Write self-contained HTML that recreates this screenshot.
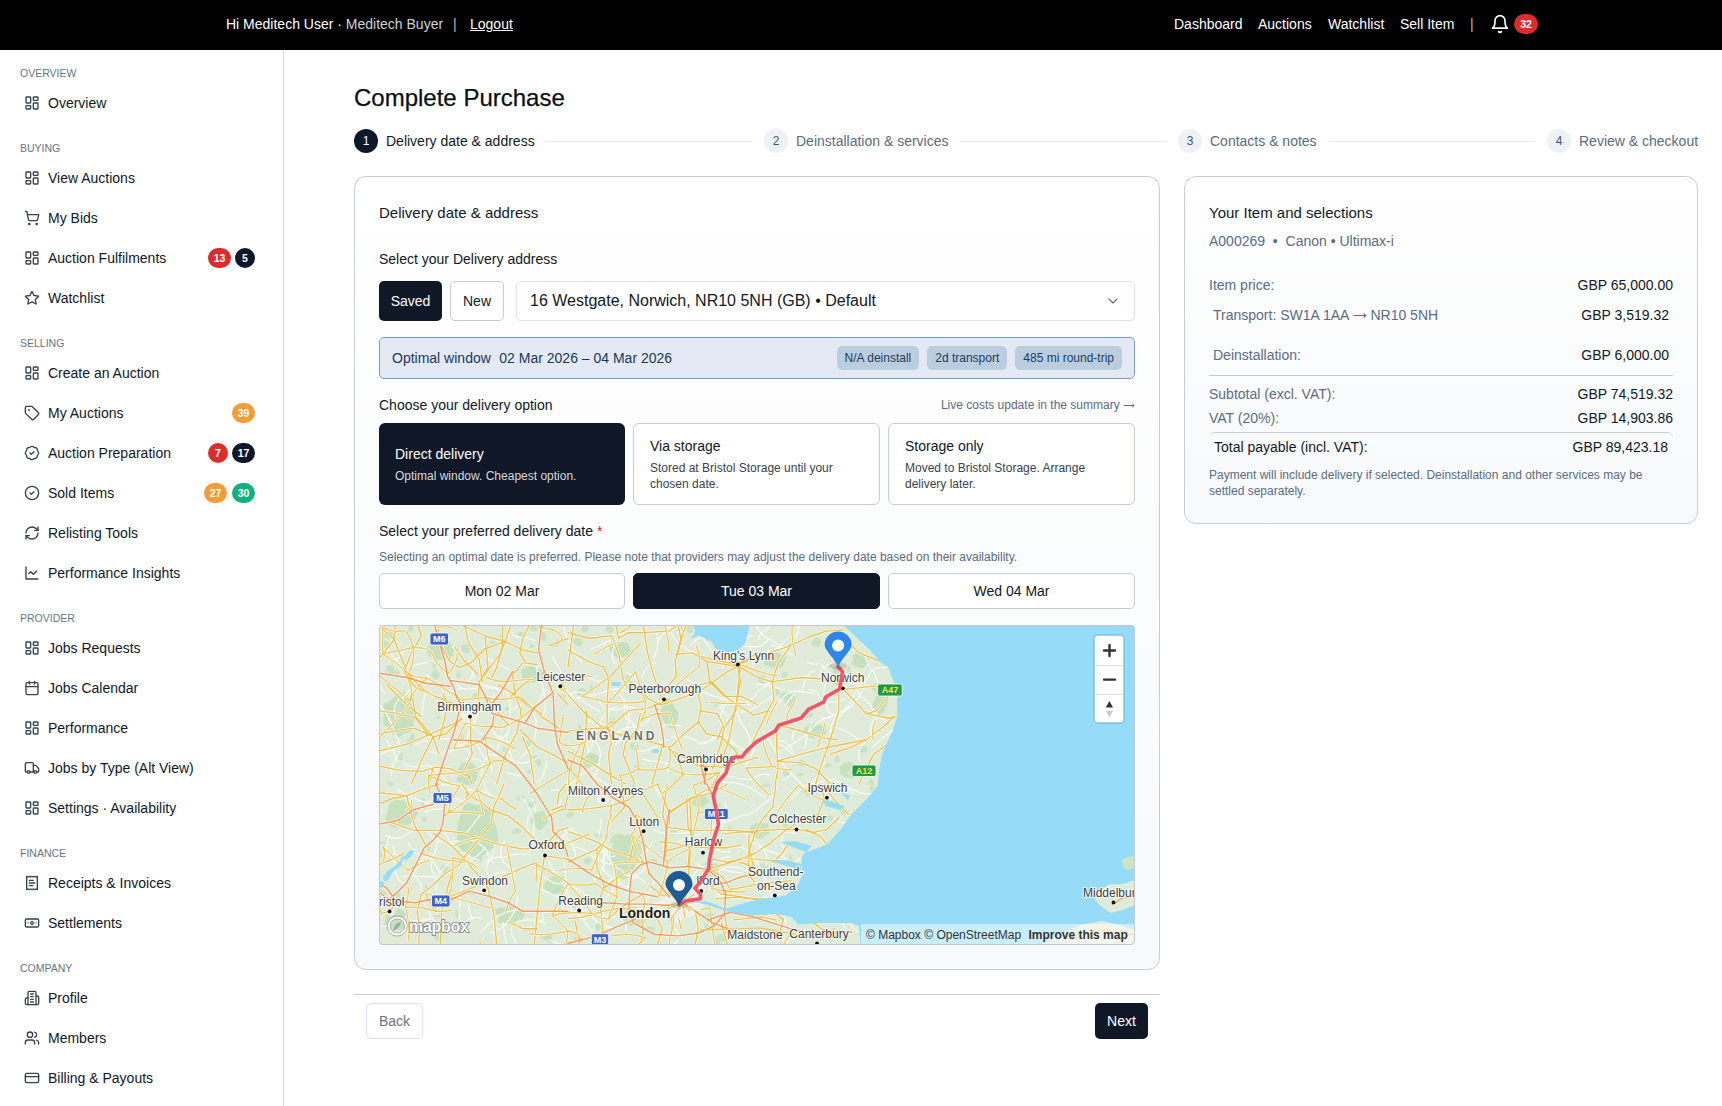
<!DOCTYPE html>
<html><head><meta charset="utf-8">
<style>
*{box-sizing:border-box;margin:0;padding:0}
html,body{width:1722px;height:1106px;overflow:hidden;background:#fff;font-family:"Liberation Sans",sans-serif;color:#0f172a}
.abs{position:absolute}
.top{position:absolute;left:0;top:0;width:1722px;height:50px;background:#000;color:#fff;font-size:14px}
.top .t{position:absolute;top:0;line-height:48px;white-space:nowrap}
.side{position:absolute;left:0;top:50px;width:284px;height:1056px;border-right:1px solid #d4d8de;padding-top:13px}
.sh{height:20px;line-height:20px;padding-left:20px;font-size:10.5px;color:#64748b;text-transform:uppercase;letter-spacing:0}
.si{height:40px;display:flex;align-items:center;padding-left:24px;font-size:14px;color:#0f172a;position:relative}
.si svg{width:16px;height:16px;margin-right:8px;stroke:#374151;fill:none;stroke-width:2;stroke-linecap:round;stroke-linejoin:round;flex:none}
.gap{height:15px}
.bd{position:absolute;top:10px;height:20px;min-width:20px;border-radius:10px;font-size:10.5px;font-weight:700;color:#fff;line-height:20px;text-align:center;padding:0 5px}
.red{background:#dc2c2c}.dk{background:#0f172a}.or{background:#f29d38}.gr{background:#12b07e}
</style></head><body>
<div class="top">
  <div class="t" style="left:226px">Hi Meditech User · <span style="color:#cfd3d8">Meditech Buyer</span></div>
  <div class="t" style="left:453px;color:#bbb">|</div>
  <div class="t" style="left:470px;text-decoration:underline">Logout</div>
  <div class="t" style="left:1174px">Dashboard</div>
  <div class="t" style="left:1258px">Auctions</div>
  <div class="t" style="left:1328px">Watchlist</div>
  <div class="t" style="left:1400px">Sell Item</div>
  <div class="t" style="left:1470px;color:#bbb">|</div>
  <svg class="abs" style="left:1490px;top:14px" width="20" height="20" viewBox="0 0 24 24" fill="none" stroke="#fff" stroke-width="2" stroke-linecap="round" stroke-linejoin="round"><path d="M6 8a6 6 0 0 1 12 0c0 7 3 9 3 9H3s3-2 3-9"/><path d="M10.3 21a1.94 1.94 0 0 0 3.4 0"/></svg>
  <div class="bd red" style="left:1514px;top:14px;width:24px">32</div>
</div>

<div class="side">
  <div class="sh">Overview</div>
  <div class="si"><svg viewBox="0 0 24 24"><rect width="7" height="9" x="3" y="3" rx="1"/><rect width="7" height="5" x="14" y="3" rx="1"/><rect width="7" height="9" x="14" y="12" rx="1"/><rect width="7" height="5" x="3" y="16" rx="1"/></svg>Overview</div>
  <div class="gap"></div>
  <div class="sh">Buying</div>
  <div class="si"><svg viewBox="0 0 24 24"><rect width="7" height="9" x="3" y="3" rx="1"/><rect width="7" height="5" x="14" y="3" rx="1"/><rect width="7" height="9" x="14" y="12" rx="1"/><rect width="7" height="5" x="3" y="16" rx="1"/></svg>View Auctions</div>
  <div class="si"><svg viewBox="0 0 24 24"><circle cx="8" cy="21" r="1"/><circle cx="19" cy="21" r="1"/><path d="M2.05 2.05h2l2.66 12.42a2 2 0 0 0 2 1.58h9.78a2 2 0 0 0 1.95-1.57l1.650-7.43H5.12"/></svg>My Bids</div>
  <div class="si"><svg viewBox="0 0 24 24"><rect width="7" height="9" x="3" y="3" rx="1"/><rect width="7" height="5" x="14" y="3" rx="1"/><rect width="7" height="9" x="14" y="12" rx="1"/><rect width="7" height="5" x="3" y="16" rx="1"/></svg>Auction Fulfilments<div class="bd red" style="left:208px;width:23px">13</div><div class="bd dk" style="left:235px">5</div></div>
  <div class="si"><svg viewBox="0 0 24 24"><polygon points="12 2 15.09 8.26 22 9.27 17 14.14 18.18 21.02 12 17.77 5.82 21.02 7 14.14 2 9.27 8.91 8.26 12 2"/></svg>Watchlist</div>
  <div class="gap"></div>
  <div class="sh">Selling</div>
  <div class="si"><svg viewBox="0 0 24 24"><rect width="7" height="9" x="3" y="3" rx="1"/><rect width="7" height="5" x="14" y="3" rx="1"/><rect width="7" height="9" x="14" y="12" rx="1"/><rect width="7" height="5" x="3" y="16" rx="1"/></svg>Create an Auction</div>
  <div class="si"><svg viewBox="0 0 24 24"><path d="M12.586 2.586A2 2 0 0 0 11.172 2H4a2 2 0 0 0-2 2v7.172a2 2 0 0 0 .586 1.414l8.704 8.704a2.426 2.426 0 0 0 3.42 0l6.58-6.58a2.426 2.426 0 0 0 0-3.42z"/><circle cx="7.5" cy="7.5" r=".5" fill="#374151"/></svg>My Auctions<div class="bd or" style="left:232px;width:23px">39</div></div>
  <div class="si"><svg viewBox="0 0 24 24"><path d="M3.85 8.62a4 4 0 0 1 4.78-4.77 4 4 0 0 1 6.74 0 4 4 0 0 1 4.78 4.78 4 4 0 0 1 0 6.74 4 4 0 0 1-4.77 4.78 4 4 0 0 1-6.75 0 4 4 0 0 1-4.78-4.77 4 4 0 0 1 0-6.76Z"/><path d="m9 12 2 2 4-4"/></svg>Auction Preparation<div class="bd red" style="left:208px">7</div><div class="bd dk" style="left:232px;width:23px">17</div></div>
  <div class="si"><svg viewBox="0 0 24 24"><circle cx="12" cy="12" r="10"/><path d="m9 12 2 2 4-4"/></svg>Sold Items<div class="bd or" style="left:204px;width:23px">27</div><div class="bd gr" style="left:232px;width:23px">30</div></div>
  <div class="si"><svg viewBox="0 0 24 24"><path d="M3 12a9 9 0 0 1 9-9 9.75 9.75 0 0 1 6.74 2.74L21 8"/><path d="M21 3v5h-5"/><path d="M21 12a9 9 0 0 1-9 9 9.75 9.75 0 0 1-6.74-2.74L3 16"/><path d="M8 16H3v5"/></svg>Relisting Tools</div>
  <div class="si"><svg viewBox="0 0 24 24"><path d="M3 3v18h18"/><path d="m19 9-5 5-4-4-3 3"/></svg>Performance Insights</div>
  <div class="gap"></div>
  <div class="sh">Provider</div>
  <div class="si"><svg viewBox="0 0 24 24"><rect width="7" height="9" x="3" y="3" rx="1"/><rect width="7" height="5" x="14" y="3" rx="1"/><rect width="7" height="9" x="14" y="12" rx="1"/><rect width="7" height="5" x="3" y="16" rx="1"/></svg>Jobs Requests</div>
  <div class="si"><svg viewBox="0 0 24 24"><rect width="18" height="18" x="3" y="4" rx="2"/><path d="M16 2v4M8 2v4M3 10h18"/></svg>Jobs Calendar</div>
  <div class="si"><svg viewBox="0 0 24 24"><rect width="7" height="9" x="3" y="3" rx="1"/><rect width="7" height="5" x="14" y="3" rx="1"/><rect width="7" height="9" x="14" y="12" rx="1"/><rect width="7" height="5" x="3" y="16" rx="1"/></svg>Performance</div>
  <div class="si"><svg viewBox="0 0 24 24"><path d="M14 18V6a2 2 0 0 0-2-2H4a2 2 0 0 0-2 2v11a1 1 0 0 0 1 1h2"/><path d="M15 18H9"/><path d="M19 18h2a1 1 0 0 0 1-1v-3.65a1 1 0 0 0-.22-.624l-3.48-4.35A1 1 0 0 0 17.52 8H14"/><circle cx="17" cy="18" r="2"/><circle cx="7" cy="18" r="2"/></svg>Jobs by Type (Alt View)</div>
  <div class="si"><svg viewBox="0 0 24 24"><rect width="7" height="9" x="3" y="3" rx="1"/><rect width="7" height="5" x="14" y="3" rx="1"/><rect width="7" height="9" x="14" y="12" rx="1"/><rect width="7" height="5" x="3" y="16" rx="1"/></svg>Settings · Availability</div>
  <div class="gap"></div>
  <div class="sh">Finance</div>
  <div class="si"><svg viewBox="0 0 24 24"><path d="M4 2v20l2-1 2 1 2-1 2 1 2-1 2 1 2-1 2 1V2l-2 1-2-1-2 1-2-1-2 1-2-1-2 1Z"/><path d="M14 8H8M16 12H8M13 16H8"/></svg>Receipts &amp; Invoices</div>
  <div class="si"><svg viewBox="0 0 24 24"><rect width="20" height="12" x="2" y="6" rx="2"/><circle cx="12" cy="12" r="2"/><path d="M6 12h.01M18 12h.01"/></svg>Settlements</div>
  <div class="gap"></div>
  <div class="sh">Company</div>
  <div class="si"><svg viewBox="0 0 24 24"><path d="M6 22V4a2 2 0 0 1 2-2h8a2 2 0 0 1 2 2v18Z"/><path d="M6 12H4a2 2 0 0 0-2 2v6a2 2 0 0 0 2 2h2"/><path d="M18 9h2a2 2 0 0 1 2 2v9a2 2 0 0 1-2 2h-2"/><path d="M10 6h4M10 10h4M10 14h4M10 18h4"/></svg>Profile</div>
  <div class="si"><svg viewBox="0 0 24 24"><path d="M16 21v-2a4 4 0 0 0-4-4H6a4 4 0 0 0-4 4v2"/><circle cx="9" cy="7" r="4"/><path d="M22 21v-2a4 4 0 0 0-3-3.87"/><path d="M16 3.13a4 4 0 0 1 0 7.75"/></svg>Members</div>
  <div class="si"><svg viewBox="0 0 24 24"><rect width="20" height="14" x="2" y="5" rx="2"/><path d="M2 10h20"/></svg>Billing &amp; Payouts</div>
</div>

<!-- MAIN -->

<style>
.tx{position:absolute;white-space:nowrap;line-height:20px}
.card{position:absolute;border:1px solid #c9ccd3;border-radius:12px;background:linear-gradient(#ffffff,#f8f9fb)}
.step{position:absolute;top:129px;height:24px;display:flex;align-items:center;font-size:14px;color:#5b6b80;white-space:nowrap}
.step .c{width:24px;height:24px;border-radius:12px;background:#eef2f7;color:#475569;font-size:12px;line-height:24px;text-align:center;margin-right:8px}
.sline{position:absolute;top:141px;height:1px;background:#e8edf3}
.btn{position:absolute;border-radius:5px;font-size:14px;text-align:center;white-space:nowrap}
.opt{position:absolute;top:423px;width:247px;height:82px;border-radius:6px;border:1px solid #c9ccd3;background:#fff;padding:0 16px;display:flex;flex-direction:column;justify-content:center}
.opt .h{font-size:14px;line-height:20px;color:#111827}
.opt .d{font-size:12px;line-height:16px;color:#374151;margin-top:3.5px}
.pill{display:inline-block;height:24px;line-height:24px;padding:0 8px;border-radius:5px;background:#bccde0;color:#1e3a5f;font-size:12px;margin-left:8px}
.dbtn{position:absolute;top:573px;width:247px;height:36px;border-radius:5px;border:1px solid #c9ccd3;background:#fff;font-size:14px;line-height:34px;text-align:center;color:#111827}
.srow{position:absolute;left:1209px;width:464px;height:20px;line-height:20px;font-size:14px;color:#5b6b85;white-space:nowrap}
.srow b{font-weight:400;color:#111827;position:absolute;right:0;top:0}
</style>
<div class="tx" style="left:354px;top:84px;font-size:24px;line-height:28px;color:#0b0f19;-webkit-text-stroke:0.25px #0b0f19">Complete Purchase</div>

<div class="step" style="left:354px"><div class="c" style="background:#0f172a;color:#fff">1</div><span style="color:#111827">Delivery date &amp; address</span></div>
<div class="sline" style="left:546px;width:206px"></div>
<div class="step" style="left:764px"><div class="c">2</div>Deinstallation &amp; services</div>
<div class="sline" style="left:960px;width:206px"></div>
<div class="step" style="left:1178px"><div class="c">3</div>Contacts &amp; notes</div>
<div class="sline" style="left:1329px;width:206px"></div>
<div class="step" style="left:1547px"><div class="c">4</div>Review &amp; checkout</div>

<div class="card" style="left:354px;top:176px;width:806px;height:794px"></div>
<div class="tx" style="left:379px;top:202px;font-size:15px;line-height:22px;color:#111827">Delivery date &amp; address</div>
<div class="tx" style="left:379px;top:249px;font-size:14px;color:#111827">Select your Delivery address</div>
<div class="btn" style="left:379px;top:281px;width:63px;height:40px;line-height:40px;background:#101828;color:#fff">Saved</div>
<div class="btn" style="left:450px;top:281px;width:54px;height:40px;line-height:38px;border:1px solid #c9ccd3;background:#fff;color:#111827">New</div>
<div class="btn" style="left:516px;top:281px;width:619px;height:40px;line-height:38px;border:1px solid #dbe3ee;background:#fff;color:#111827;font-size:16px;text-align:left;padding-left:13px">16 Westgate, Norwich, NR10 5NH (GB) • Default
  <svg style="position:absolute;left:588px;top:11px" width="16" height="16" viewBox="0 0 24 24" fill="none" stroke="#666" stroke-width="1.6" stroke-linecap="round" stroke-linejoin="round"><path d="m6 9 6 6 6-6"/></svg></div>

<div class="abs" style="left:379px;top:337px;width:756px;height:42px;border:1px solid #7d9cc4;border-radius:5px;background:#e3eaf5"></div>
<div class="tx" style="left:392px;top:348px;font-size:14px;color:#1b365d">Optimal window<span style="margin-left:8.5px">02 Mar 2026 – 04 Mar 2026</span></div>
<div class="abs" style="left:826px;top:346px;width:296px;height:24px;text-align:right;white-space:nowrap"><span class="pill">N/A deinstall</span><span class="pill">2d transport</span><span class="pill">485 mi round-trip</span></div>

<div class="tx" style="left:379px;top:395px;font-size:14px;color:#111827">Choose your delivery option</div>
<div class="tx" style="left:900px;width:235px;text-align:right;top:395px;font-size:12px;color:#5b6b85">Live costs update in the summary <span style="display:inline-block;width:12px;height:12px;vertical-align:middle;position:relative;top:-1px"><svg width="12" height="12" viewBox="0 0 12 12" style="display:block"><path d="M0.8 6.5H11.2M9.3 4.7l1.9 1.8-1.9 1.8" stroke="currentColor" fill="none" stroke-width="1"/></svg></span></div>

<div class="opt" style="left:379px;width:246px;background:#101828;border:0"><div class="h" style="color:#fff">Direct delivery</div><div class="d" style="color:#d6d9de">Optimal window. Cheapest option.</div></div>
<div class="opt" style="left:633px"><div class="h">Via storage</div><div class="d">Stored at Bristol Storage until your chosen date.</div></div>
<div class="opt" style="left:888px"><div class="h">Storage only</div><div class="d">Moved to Bristol Storage. Arrange delivery later.</div></div>

<div class="tx" style="left:379px;top:521px;font-size:14px;color:#111827">Select your preferred delivery date <span style="color:#dc2626">*</span></div>
<div class="tx" style="left:379px;top:547px;font-size:12px;color:#5b6b85">Selecting an optimal date is preferred. Please note that providers may adjust the delivery date based on their availability.</div>
<div class="dbtn" style="left:379px;width:246px">Mon 02 Mar</div>
<div class="dbtn" style="left:633px;background:#101828;border-color:#101828;color:#fff">Tue 03 Mar</div>
<div class="dbtn" style="left:888px">Wed 04 Mar</div>

<div id="map" class="abs" style="left:379px;top:625px;width:756px;height:320px;border-radius:4px;overflow:hidden"><svg width="756" height="320" viewBox="379 625 756 320" style="display:block;font-family:'Liberation Sans',sans-serif">
<rect x="379" y="625" width="756" height="320" fill="#e0ecda"/>
<path d="M414.8,711.1 Q415.8,715.0 414.5,718.8 Q413.3,722.5 413.0,727.5 Q412.7,732.4 408.7,732.4 Q404.7,732.5 401.8,735.5 Q399.0,738.5 395.7,736.8 Q392.5,735.1 390.5,731.7 Q388.6,728.3 385.4,726.1 Q382.2,723.9 383.3,719.4 Q384.4,715.0 383.6,710.7 Q382.7,706.4 385.6,704.0 Q388.5,701.6 390.9,699.5 Q393.3,697.4 396.1,695.0 Q399.0,692.6 403.0,691.7 Q406.9,690.7 408.3,696.0 Q409.8,701.3 411.8,704.2 Q413.8,707.2 414.8,711.1Z" fill="#c8e2c0" opacity="1.0"/>
<path d="M495.7,824.9 Q497.6,830.0 498.1,836.4 Q498.6,842.8 494.6,846.6 Q490.7,850.5 486.8,852.6 Q482.8,854.8 478.9,859.2 Q475.0,863.7 471.7,857.3 Q468.4,850.9 462.9,851.9 Q457.5,852.9 457.2,846.3 Q457.0,839.8 456.9,834.9 Q456.8,830.0 457.6,825.5 Q458.4,821.0 459.7,816.4 Q461.1,811.8 463.4,806.2 Q465.7,800.6 470.3,803.2 Q475.0,805.7 479.2,804.5 Q483.5,803.2 487.3,806.1 Q491.1,809.0 492.4,814.4 Q493.7,819.8 495.7,824.9Z" fill="#c8e2c0" opacity="1.0"/>
<path d="M641.3,850.9 Q640.8,856.0 638.6,859.6 Q636.4,863.2 635.0,866.2 Q633.5,869.3 631.5,872.0 Q629.5,874.7 626.8,877.8 Q624.0,880.9 620.9,878.8 Q617.9,876.7 615.6,873.9 Q613.3,871.0 610.7,868.1 Q608.2,865.2 608.0,860.6 Q607.8,856.0 608.9,852.0 Q610.1,847.9 610.5,842.8 Q610.9,837.6 614.0,835.2 Q617.2,832.9 620.6,834.1 Q624.0,835.4 627.3,834.7 Q630.5,834.0 633.2,836.7 Q635.8,839.5 638.7,842.6 Q641.7,845.8 641.3,850.9Z" fill="#c8e2c0" opacity="1.0"/>
<path d="M543.9,673.4 Q544.7,675.0 543.2,676.4 Q541.7,677.9 541.8,679.9 Q541.8,682.0 538.8,681.7 Q535.7,681.4 533.9,682.2 Q532.0,683.0 529.5,683.2 Q527.1,683.5 526.1,681.7 Q525.0,680.0 523.2,679.1 Q521.4,678.1 522.0,676.6 Q522.7,675.0 521.6,673.3 Q520.6,671.6 521.7,670.1 Q522.9,668.5 525.2,667.8 Q527.4,667.1 529.7,666.3 Q532.0,665.4 534.0,666.7 Q536.1,668.0 538.5,668.3 Q540.8,668.7 542.0,670.2 Q543.1,671.7 543.9,673.4Z" fill="#c8e2c0" opacity="1.0"/>
<path d="M678.0,712.7 Q678.5,715.0 678.0,717.3 Q677.5,719.6 677.1,722.3 Q676.7,725.0 675.2,726.8 Q673.8,728.6 671.9,727.9 Q670.0,727.2 668.3,727.2 Q666.6,727.2 665.9,724.7 Q665.3,722.1 663.5,721.1 Q661.7,720.1 661.5,717.6 Q661.2,715.0 661.0,712.1 Q660.8,709.3 662.1,707.2 Q663.4,705.1 665.3,704.8 Q667.1,704.6 668.6,703.9 Q670.0,703.2 671.7,703.0 Q673.4,702.7 674.0,705.4 Q674.7,708.0 676.1,709.2 Q677.5,710.3 678.0,712.7Z" fill="#c8e2c0" opacity="1.0"/>
<path d="M478.1,772.9 Q477.9,775.0 477.4,776.9 Q476.9,778.7 475.8,780.2 Q474.6,781.6 473.8,784.3 Q472.9,786.9 470.5,785.8 Q468.0,784.7 466.0,784.6 Q464.1,784.5 462.1,783.7 Q460.2,782.8 457.9,781.5 Q455.6,780.1 457.1,777.6 Q458.5,775.0 458.0,772.8 Q457.6,770.7 458.6,768.7 Q459.7,766.7 461.3,764.6 Q462.9,762.6 465.4,762.2 Q468.0,761.9 470.6,762.3 Q473.1,762.7 474.3,765.1 Q475.4,767.6 476.8,769.2 Q478.3,770.7 478.1,772.9Z" fill="#c8e2c0" opacity="1.0"/>
<path d="M566.2,883.0 Q565.9,885.0 566.6,887.2 Q567.4,889.4 566.1,891.4 Q564.8,893.4 561.8,893.1 Q558.8,892.8 556.9,893.2 Q555.0,893.5 553.0,893.3 Q551.1,893.1 549.4,892.2 Q547.8,891.2 546.1,890.0 Q544.4,888.8 543.7,886.9 Q543.0,885.0 544.2,883.3 Q545.4,881.6 547.0,880.5 Q548.6,879.5 549.6,877.8 Q550.7,876.2 552.9,875.9 Q555.0,875.6 557.3,875.6 Q559.5,875.6 562.1,876.1 Q564.7,876.7 565.6,878.8 Q566.5,880.9 566.2,883.0Z" fill="#c8e2c0" opacity="1.0"/>
<path d="M825.4,728.8 Q826.6,730.0 826.4,731.5 Q826.2,733.0 825.0,734.3 Q823.8,735.6 821.2,735.6 Q818.6,735.6 816.8,737.1 Q815.0,738.7 812.5,738.2 Q810.1,737.7 807.8,736.9 Q805.5,736.1 804.3,734.6 Q803.0,733.2 803.5,731.6 Q804.0,730.0 804.4,728.6 Q804.8,727.3 806.5,726.5 Q808.2,725.6 809.3,724.2 Q810.3,722.7 812.7,723.4 Q815.0,724.0 816.8,724.2 Q818.6,724.4 820.4,724.9 Q822.2,725.4 823.2,726.5 Q824.1,727.6 825.4,728.8Z" fill="#c8e2c0" opacity="1.0"/>
<path d="M887.6,702.3 Q886.9,705.0 886.2,706.8 Q885.6,708.6 884.8,710.0 Q884.1,711.4 883.3,712.8 Q882.4,714.1 881.2,714.3 Q880.0,714.6 878.7,714.8 Q877.3,715.1 876.6,713.3 Q875.8,711.5 873.9,710.8 Q872.1,710.1 872.1,707.6 Q872.2,705.0 873.2,703.1 Q874.2,701.2 874.7,699.5 Q875.3,697.7 876.3,696.4 Q877.3,695.0 878.7,694.6 Q880.0,694.1 881.2,695.1 Q882.4,696.0 884.2,695.8 Q886.0,695.6 887.2,697.6 Q888.3,699.7 887.6,702.3Z" fill="#c8e2c0" opacity="1.0"/>
<path d="M525.6,912.7 Q524.6,915.0 524.1,916.9 Q523.6,918.8 521.1,919.8 Q518.7,920.8 516.7,921.7 Q514.7,922.6 512.4,923.4 Q510.0,924.2 507.4,923.7 Q504.9,923.2 501.5,923.1 Q498.0,923.0 498.1,920.6 Q498.3,918.2 498.2,916.6 Q498.2,915.0 495.9,912.7 Q493.7,910.5 496.5,909.2 Q499.4,907.9 502.3,907.6 Q505.2,907.2 507.6,906.1 Q510.0,904.9 512.3,906.3 Q514.5,907.7 517.6,907.8 Q520.6,907.9 523.6,909.2 Q526.5,910.4 525.6,912.7Z" fill="#c8e2c0" opacity="1.0"/>
<path d="M416.1,812.2 Q417.1,815.0 416.0,817.7 Q414.9,820.5 412.1,821.9 Q409.4,823.4 407.4,824.9 Q405.4,826.5 402.7,826.4 Q400.0,826.3 396.8,827.5 Q393.7,828.6 391.5,826.5 Q389.4,824.5 387.0,822.6 Q384.7,820.6 385.4,817.8 Q386.2,815.0 387.1,812.8 Q387.9,810.5 388.0,807.5 Q388.1,804.4 390.6,802.4 Q393.1,800.3 396.6,800.1 Q400.0,799.8 403.2,800.5 Q406.4,801.2 409.2,802.8 Q411.9,804.4 413.5,806.9 Q415.1,809.4 416.1,812.2Z" fill="#c8e2c0" opacity="1.0"/>
<path d="M644.8,916.3 Q645.2,918.0 645.5,919.9 Q645.8,921.8 644.2,923.2 Q642.7,924.6 640.6,924.9 Q638.5,925.3 636.8,925.6 Q635.0,925.9 633.0,926.1 Q631.0,926.3 629.3,925.3 Q627.7,924.3 625.6,923.2 Q623.5,922.1 622.3,920.0 Q621.2,918.0 622.9,916.1 Q624.6,914.3 624.9,912.0 Q625.3,909.7 627.5,908.3 Q629.7,907.0 632.3,906.6 Q635.0,906.2 637.1,907.8 Q639.2,909.4 640.7,910.6 Q642.2,911.8 643.3,913.2 Q644.4,914.7 644.8,916.3Z" fill="#c8e2c0" opacity="1.0"/>
<path d="M786.0,658.4 Q785.1,660.0 784.7,661.2 Q784.3,662.5 784.0,664.0 Q783.6,665.5 781.9,666.8 Q780.2,668.0 777.6,668.3 Q775.0,668.5 772.8,667.6 Q770.6,666.8 768.5,666.2 Q766.3,665.6 764.6,664.4 Q763.0,663.2 764.2,661.6 Q765.5,660.0 764.5,658.5 Q763.6,657.0 764.5,655.4 Q765.4,653.8 767.7,653.1 Q770.1,652.3 772.5,652.1 Q775.0,651.8 777.2,652.5 Q779.4,653.2 780.7,654.3 Q782.1,655.5 784.5,656.1 Q787.0,656.8 786.0,658.4Z" fill="#c8e2c0" opacity="1.0"/>
<path d="M717.9,868.5 Q717.7,870.0 718.1,871.6 Q718.6,873.2 717.8,874.8 Q717.0,876.3 715.0,876.4 Q713.0,876.6 711.5,876.8 Q710.0,877.1 708.1,877.6 Q706.2,878.2 704.9,877.0 Q703.6,875.8 703.5,874.1 Q703.4,872.4 703.3,871.2 Q703.1,870.0 703.3,868.8 Q703.5,867.6 703.3,865.7 Q703.2,863.8 704.8,863.0 Q706.4,862.2 708.2,863.0 Q710.0,863.7 711.8,862.9 Q713.6,862.2 715.3,862.9 Q717.0,863.7 717.6,865.3 Q718.1,867.0 717.9,868.5Z" fill="#c8e2c0" opacity="1.0"/>
<path d="M599.4,758.4 Q599.3,760.0 599.3,761.6 Q599.3,763.2 597.6,764.1 Q595.9,764.9 594.5,765.5 Q593.0,766.1 591.5,768.0 Q590.0,769.9 588.0,769.0 Q586.0,768.1 584.4,767.0 Q582.9,765.9 581.0,764.8 Q579.2,763.7 579.8,761.9 Q580.4,760.0 579.9,758.2 Q579.4,756.3 580.7,754.9 Q582.0,753.4 584.4,753.3 Q586.7,753.3 588.3,753.0 Q590.0,752.6 591.7,752.8 Q593.5,753.0 594.8,753.9 Q596.2,754.8 597.9,755.8 Q599.5,756.7 599.4,758.4Z" fill="#c8e2c0" opacity="1.0"/>
<path d="M858.4,768.6 Q858.9,770.0 858.9,771.5 Q858.8,773.0 857.4,774.0 Q855.9,774.9 855.2,776.9 Q854.4,778.9 852.2,778.3 Q850.0,777.7 848.1,777.6 Q846.3,777.5 844.5,776.8 Q842.8,776.0 841.0,774.9 Q839.3,773.7 839.9,771.8 Q840.4,770.0 839.8,768.1 Q839.2,766.3 841.1,765.2 Q843.0,764.2 844.6,763.2 Q846.2,762.3 848.1,762.0 Q850.0,761.7 851.5,762.8 Q853.0,763.9 854.9,764.1 Q856.8,764.3 857.4,765.8 Q857.9,767.3 858.4,768.6Z" fill="#c8e2c0" opacity="1.0"/>
<path d="M768.5,828.4 Q767.8,830.0 769.1,831.8 Q770.3,833.6 768.2,834.3 Q766.0,835.0 764.9,836.3 Q763.7,837.5 761.9,838.3 Q760.0,839.0 758.1,838.4 Q756.1,837.8 754.8,836.6 Q753.5,835.4 752.1,834.3 Q750.8,833.2 750.3,831.6 Q749.9,830.0 749.8,828.2 Q749.8,826.5 752.0,825.8 Q754.2,825.1 755.1,823.7 Q756.1,822.2 758.1,822.4 Q760.0,822.6 761.7,822.9 Q763.4,823.1 765.6,823.3 Q767.8,823.5 768.5,825.2 Q769.2,826.8 768.5,828.4Z" fill="#c8e2c0" opacity="1.0"/>
<path d="M452.2,648.3 Q453.5,650.0 453.5,652.1 Q453.5,654.2 452.3,656.2 Q451.0,658.2 447.9,658.6 Q444.9,658.9 442.5,659.6 Q440.0,660.4 437.5,659.8 Q434.9,659.2 432.8,658.1 Q430.6,657.0 428.7,655.6 Q426.8,654.1 426.9,652.0 Q427.1,650.0 427.3,648.1 Q427.6,646.2 429.2,644.6 Q430.8,643.1 432.4,641.1 Q434.0,639.1 437.0,639.2 Q440.0,639.3 442.9,639.3 Q445.9,639.4 448.5,640.5 Q451.1,641.7 451.0,644.1 Q451.0,646.6 452.2,648.3Z" fill="#c8e2c0" opacity="1.0"/>
<path d="M630.4,648.7 Q631.8,650.0 632.3,651.9 Q632.7,653.8 631.0,655.2 Q629.3,656.7 626.5,656.6 Q623.7,656.4 621.9,656.7 Q620.0,656.9 617.8,657.2 Q615.7,657.4 614.5,656.1 Q613.3,654.8 611.9,653.8 Q610.5,652.8 610.5,651.4 Q610.5,650.0 609.6,648.3 Q608.6,646.6 609.7,645.0 Q610.8,643.5 612.8,642.3 Q614.8,641.1 617.4,642.0 Q620.0,643.0 622.4,642.3 Q624.8,641.7 626.8,642.7 Q628.7,643.8 628.9,645.5 Q629.1,647.3 630.4,648.7Z" fill="#c8e2c0" opacity="1.0"/>
<path d="M707.8,799.0 Q709.6,800.0 709.4,801.5 Q709.1,803.0 707.1,803.6 Q705.1,804.1 704.5,805.7 Q703.8,807.3 701.9,806.8 Q700.0,806.3 698.4,806.2 Q696.9,806.1 694.9,805.9 Q693.0,805.6 692.1,804.3 Q691.3,802.9 692.1,801.4 Q692.9,800.0 692.8,798.8 Q692.6,797.5 693.4,796.4 Q694.1,795.3 695.6,794.8 Q697.1,794.3 698.5,794.3 Q700.0,794.3 701.5,794.3 Q702.9,794.4 704.6,794.6 Q706.4,794.9 706.2,796.4 Q706.1,798.0 707.8,799.0Z" fill="#c8e2c0" opacity="1.0"/>
<path d="M547.4,818.4 Q548.4,820.0 547.9,821.8 Q547.4,823.7 546.0,824.6 Q544.6,825.6 543.8,827.0 Q542.9,828.5 541.5,829.5 Q540.0,830.4 538.4,829.8 Q536.8,829.2 536.0,827.5 Q535.2,825.7 533.0,825.1 Q530.8,824.6 530.8,822.3 Q530.7,820.0 530.8,817.7 Q530.9,815.5 533.0,814.8 Q535.1,814.2 536.2,813.0 Q537.2,811.8 538.6,811.9 Q540.0,812.0 541.8,810.9 Q543.5,809.8 544.4,811.7 Q545.3,813.7 545.8,815.2 Q546.4,816.8 547.4,818.4Z" fill="#c8e2c0" opacity="1.0"/>
<path d="M406.6,917.5 Q406.2,920.0 406.9,922.6 Q407.5,925.2 405.9,927.2 Q404.3,929.3 401.6,929.4 Q399.0,929.6 397.0,929.7 Q395.0,929.8 392.4,931.2 Q389.8,932.6 388.2,930.5 Q386.6,928.4 385.0,926.6 Q383.4,924.8 384.4,922.4 Q385.5,920.0 385.9,918.2 Q386.3,916.4 386.3,913.8 Q386.2,911.2 388.5,910.4 Q390.7,909.7 392.9,910.1 Q395.0,910.5 397.6,908.9 Q400.2,907.3 401.9,909.4 Q403.6,911.4 405.3,913.2 Q407.0,915.0 406.6,917.5Z" fill="#c8e2c0" opacity="1.0"/>
<path d="M866.7,658.6 Q866.8,660.0 867.8,661.8 Q868.8,663.6 866.8,664.2 Q864.8,664.8 864.2,666.8 Q863.6,668.8 861.8,668.4 Q860.0,668.1 858.5,667.6 Q857.1,667.1 855.5,666.5 Q854.0,666.0 852.5,664.8 Q851.0,663.7 851.8,661.9 Q852.6,660.0 853.1,658.7 Q853.6,657.3 853.8,655.7 Q854.1,654.1 855.6,653.7 Q857.2,653.2 858.6,653.2 Q860.0,653.1 861.4,653.3 Q862.7,653.5 863.7,654.4 Q864.7,655.3 865.7,656.3 Q866.7,657.2 866.7,658.6Z" fill="#c8e2c0" opacity="1.0"/>
<path d="M795.6,698.9 Q796.1,700.0 795.8,701.2 Q795.6,702.3 795.4,703.7 Q795.2,705.2 793.7,705.4 Q792.3,705.6 791.2,706.1 Q790.0,706.6 788.9,705.9 Q787.8,705.3 786.7,704.8 Q785.6,704.4 785.4,703.2 Q785.1,702.0 784.6,701.0 Q784.1,700.0 784.6,699.0 Q785.2,698.0 785.0,696.4 Q784.9,694.9 786.1,694.3 Q787.4,693.8 788.7,694.0 Q790.0,694.3 791.2,694.1 Q792.5,694.0 794.0,694.2 Q795.5,694.5 795.3,696.2 Q795.1,697.9 795.6,698.9Z" fill="#c8e2c0" opacity="1.0"/>
<path d="M805.9,761.9 Q806.8,762.9 806.3,764.0 Q805.7,765.2 803.7,766.0 Q801.6,766.8 799.9,765.8 Q798.2,764.7 796.7,763.8 Q795.1,762.9 796.2,761.7 Q797.3,760.5 799.4,760.0 Q801.6,759.6 803.3,760.3 Q805.0,760.9 805.9,761.9Z" fill="#c4dfbc" opacity="0.75"/>
<path d="M559.6,641.1 Q559.9,642.3 559.6,643.5 Q559.3,644.7 558.8,645.1 Q558.3,645.4 557.5,645.8 Q556.8,646.1 556.4,644.2 Q556.1,642.3 556.5,640.7 Q556.9,639.0 557.6,638.8 Q558.3,638.7 558.9,639.3 Q559.4,639.8 559.6,641.1Z" fill="#c4dfbc" opacity="0.75"/>
<path d="M533.3,771.0 Q534.8,771.6 534.1,772.7 Q533.5,773.9 531.8,774.0 Q530.2,774.1 529.2,773.6 Q528.2,773.0 526.9,772.3 Q525.6,771.6 526.8,770.8 Q528.1,770.0 529.1,769.7 Q530.2,769.3 531.0,769.9 Q531.9,770.4 533.3,771.0Z" fill="#c4dfbc" opacity="0.75"/>
<path d="M577.4,775.4 Q577.5,776.4 577.4,777.4 Q577.4,778.4 576.6,778.7 Q575.9,778.9 575.1,778.8 Q574.3,778.6 574.3,777.5 Q574.2,776.4 574.5,775.6 Q574.8,774.8 575.3,774.1 Q575.9,773.5 576.6,774.0 Q577.3,774.4 577.4,775.4Z" fill="#c4dfbc" opacity="0.75"/>
<path d="M581.8,727.9 Q582.4,729.0 581.7,730.1 Q581.1,731.1 580.5,732.7 Q580.0,734.2 579.0,733.5 Q578.1,732.8 577.8,730.9 Q577.6,729.0 577.9,727.3 Q578.2,725.6 579.1,724.8 Q580.0,723.9 580.6,725.4 Q581.2,726.8 581.8,727.9Z" fill="#c4dfbc" opacity="0.75"/>
<path d="M799.4,887.1 Q800.4,888.6 798.9,889.8 Q797.4,891.0 795.8,891.2 Q794.2,891.4 792.7,891.1 Q791.3,890.8 790.2,889.7 Q789.2,888.6 790.3,887.6 Q791.3,886.5 792.8,885.1 Q794.2,883.7 796.2,884.6 Q798.3,885.6 799.4,887.1Z" fill="#c4dfbc" opacity="0.75"/>
<path d="M769.8,784.6 Q770.3,785.4 769.0,786.0 Q767.7,786.5 766.4,786.6 Q765.1,786.7 763.8,786.6 Q762.4,786.5 761.2,786.0 Q760.0,785.4 761.3,785.0 Q762.6,784.5 763.8,783.9 Q765.1,783.4 767.2,783.6 Q769.3,783.8 769.8,784.6Z" fill="#c4dfbc" opacity="0.75"/>
<path d="M638.0,745.4 Q638.8,747.0 638.1,748.7 Q637.4,750.4 635.6,750.3 Q633.9,750.2 632.6,749.8 Q631.4,749.4 630.7,748.2 Q630.1,747.0 630.1,745.2 Q630.1,743.4 632.0,743.3 Q633.9,743.2 635.6,743.5 Q637.3,743.8 638.0,745.4Z" fill="#c4dfbc" opacity="0.75"/>
<path d="M389.2,643.2 Q390.5,644.4 389.3,645.6 Q388.2,646.8 386.8,647.7 Q385.4,648.5 383.9,647.8 Q382.3,647.2 381.7,645.8 Q381.0,644.4 382.0,643.3 Q383.0,642.2 384.2,640.7 Q385.4,639.2 386.7,640.6 Q388.0,642.0 389.2,643.2Z" fill="#c4dfbc" opacity="0.75"/>
<path d="M887.0,922.4 Q888.4,923.7 887.3,925.2 Q886.1,926.8 884.9,927.2 Q883.7,927.5 882.7,926.9 Q881.7,926.3 880.4,925.0 Q879.1,923.7 880.4,922.4 Q881.7,921.1 882.7,919.9 Q883.7,918.8 884.7,920.0 Q885.6,921.2 887.0,922.4Z" fill="#c4dfbc" opacity="0.75"/>
<path d="M654.5,927.7 Q655.9,928.9 654.8,930.3 Q653.6,931.7 651.5,931.7 Q649.4,931.7 647.1,931.8 Q644.8,932.0 644.5,930.4 Q644.3,928.9 645.6,928.1 Q646.9,927.3 648.2,927.0 Q649.4,926.6 651.2,926.6 Q653.1,926.5 654.5,927.7Z" fill="#c4dfbc" opacity="0.75"/>
<path d="M614.8,720.1 Q615.3,721.3 614.2,722.0 Q613.0,722.6 612.3,723.5 Q611.6,724.5 610.3,724.1 Q608.9,723.7 609.1,722.5 Q609.3,721.3 609.1,720.1 Q608.8,718.9 610.2,718.6 Q611.6,718.3 613.0,718.6 Q614.3,718.9 614.8,720.1Z" fill="#c4dfbc" opacity="0.75"/>
<path d="M534.0,742.0 Q534.0,743.7 533.3,745.0 Q532.6,746.2 530.6,746.6 Q528.6,746.9 527.1,746.2 Q525.6,745.6 524.9,744.7 Q524.2,743.7 523.8,742.1 Q523.4,740.5 526.0,740.5 Q528.6,740.6 531.3,740.5 Q534.0,740.4 534.0,742.0Z" fill="#c4dfbc" opacity="0.75"/>
<path d="M510.1,708.6 Q510.7,709.8 510.2,711.1 Q509.7,712.3 508.7,712.8 Q507.7,713.3 506.7,712.6 Q505.8,712.0 505.2,710.9 Q504.6,709.8 505.1,708.4 Q505.5,707.1 506.6,706.9 Q507.7,706.8 508.6,707.1 Q509.6,707.4 510.1,708.6Z" fill="#c4dfbc" opacity="0.75"/>
<path d="M408.6,857.0 Q408.7,858.6 407.8,859.6 Q406.9,860.6 405.7,862.1 Q404.5,863.7 403.2,862.2 Q401.9,860.7 400.8,859.7 Q399.7,858.6 400.6,857.4 Q401.4,856.1 403.0,855.7 Q404.5,855.2 406.5,855.3 Q408.5,855.4 408.6,857.0Z" fill="#c4dfbc" opacity="0.75"/>
<path d="M535.7,802.2 Q536.0,802.8 536.2,803.7 Q536.3,804.7 535.2,804.8 Q534.2,804.9 533.6,804.4 Q532.9,804.0 532.2,803.4 Q531.4,802.8 531.7,801.8 Q532.1,800.8 533.2,800.8 Q534.2,800.7 534.8,801.2 Q535.4,801.7 535.7,802.2Z" fill="#c4dfbc" opacity="0.75"/>
<path d="M479.7,653.2 Q479.9,653.9 479.8,654.8 Q479.7,655.7 479.0,656.3 Q478.3,657.0 477.5,656.4 Q476.7,655.9 476.6,654.9 Q476.5,653.9 476.7,653.1 Q477.0,652.3 477.6,651.9 Q478.3,651.5 478.9,651.9 Q479.5,652.4 479.7,653.2Z" fill="#c4dfbc" opacity="0.75"/>
<path d="M558.4,644.1 Q559.4,644.8 558.7,645.6 Q558.0,646.3 555.8,646.8 Q553.5,647.2 551.8,646.6 Q550.2,645.9 549.4,645.4 Q548.6,644.8 549.3,644.2 Q550.1,643.6 551.8,643.3 Q553.5,643.0 555.5,643.2 Q557.5,643.5 558.4,644.1Z" fill="#c4dfbc" opacity="0.75"/>
<path d="M394.8,634.3 Q396.1,635.3 394.5,636.1 Q392.9,636.8 391.6,637.6 Q390.3,638.3 387.7,638.3 Q385.2,638.3 384.4,636.8 Q383.5,635.3 384.5,633.9 Q385.4,632.4 387.8,631.7 Q390.3,631.0 391.9,632.2 Q393.5,633.4 394.8,634.3Z" fill="#c4dfbc" opacity="0.75"/>
<path d="M439.2,672.8 Q440.5,674.2 439.7,676.2 Q438.8,678.2 437.0,679.2 Q435.3,680.2 433.7,678.9 Q432.1,677.7 431.3,676.0 Q430.5,674.2 431.8,673.0 Q433.0,671.8 434.1,670.0 Q435.3,668.3 436.6,669.8 Q437.9,671.3 439.2,672.8Z" fill="#c4dfbc" opacity="0.75"/>
<path d="M855.4,830.2 Q855.9,830.9 855.6,831.9 Q855.3,832.9 854.5,832.8 Q853.7,832.7 853.2,832.4 Q852.6,832.1 852.1,831.5 Q851.6,830.9 851.8,830.0 Q852.1,829.1 852.9,828.9 Q853.7,828.7 854.3,829.1 Q854.9,829.5 855.4,830.2Z" fill="#c4dfbc" opacity="0.75"/>
<path d="M692.2,626.8 Q693.1,628.3 692.7,630.6 Q692.3,632.9 690.7,633.1 Q689.1,633.3 688.1,632.3 Q687.1,631.3 686.6,629.8 Q686.2,628.3 686.0,626.0 Q685.8,623.6 687.5,623.1 Q689.1,622.5 690.2,623.9 Q691.3,625.2 692.2,626.8Z" fill="#c4dfbc" opacity="0.75"/>
<path d="M393.1,783.3 Q394.0,784.0 393.7,785.1 Q393.3,786.2 391.8,786.1 Q390.2,786.0 389.4,785.6 Q388.6,785.2 387.9,784.6 Q387.2,784.0 387.6,783.1 Q388.0,782.3 389.1,781.8 Q390.2,781.2 391.2,781.9 Q392.2,782.6 393.1,783.3Z" fill="#c4dfbc" opacity="0.75"/>
<path d="M792.2,859.0 Q792.4,860.8 792.4,863.0 Q792.4,865.2 791.3,865.1 Q790.3,865.0 789.6,864.4 Q788.9,863.7 788.2,862.3 Q787.4,860.8 788.1,859.2 Q788.8,857.6 789.5,855.9 Q790.3,854.1 791.1,855.6 Q792.0,857.2 792.2,859.0Z" fill="#c4dfbc" opacity="0.75"/>
<path d="M478.8,694.6 Q479.1,696.2 478.8,697.9 Q478.6,699.6 477.1,699.9 Q475.7,700.3 473.6,700.6 Q471.5,700.9 471.9,698.6 Q472.2,696.2 472.8,695.0 Q473.4,693.7 474.5,693.2 Q475.7,692.7 477.1,692.8 Q478.6,692.9 478.8,694.6Z" fill="#c4dfbc" opacity="0.75"/>
<path d="M895.6,921.0 Q896.4,922.2 895.7,923.4 Q894.9,924.6 894.3,926.2 Q893.7,927.7 893.0,926.6 Q892.2,925.4 891.9,923.8 Q891.6,922.2 891.9,920.6 Q892.3,919.0 893.0,918.7 Q893.7,918.3 894.3,919.0 Q894.8,919.8 895.6,921.0Z" fill="#c4dfbc" opacity="0.75"/>
<path d="M524.9,735.5 Q525.0,737.1 524.9,738.8 Q524.7,740.4 524.0,741.9 Q523.4,743.3 522.5,742.4 Q521.6,741.5 521.5,739.3 Q521.4,737.1 521.9,735.9 Q522.4,734.6 522.9,733.3 Q523.4,732.1 524.0,732.9 Q524.7,733.8 524.9,735.5Z" fill="#c4dfbc" opacity="0.75"/>
<path d="M857.7,686.1 Q858.7,686.6 858.4,687.3 Q858.2,688.0 855.8,688.2 Q853.5,688.5 852.1,687.9 Q850.7,687.4 850.2,687.0 Q849.6,686.6 850.2,686.2 Q850.7,685.8 852.1,685.1 Q853.5,684.5 855.1,685.1 Q856.7,685.6 857.7,686.1Z" fill="#c4dfbc" opacity="0.75"/>
<path d="M767.3,909.3 Q767.5,911.6 766.9,913.2 Q766.2,914.7 765.4,916.1 Q764.6,917.5 763.8,916.1 Q762.9,914.8 762.6,913.2 Q762.3,911.6 762.8,910.4 Q763.3,909.2 764.0,907.5 Q764.6,905.7 765.8,906.4 Q767.1,907.0 767.3,909.3Z" fill="#c4dfbc" opacity="0.75"/>
<path d="M708.5,925.0 Q709.5,925.9 709.0,927.4 Q708.5,928.9 707.3,928.9 Q706.1,928.9 705.4,928.4 Q704.6,927.8 704.2,926.9 Q703.7,925.9 704.0,924.7 Q704.3,923.6 705.2,922.6 Q706.1,921.7 706.8,922.9 Q707.6,924.1 708.5,925.0Z" fill="#c4dfbc" opacity="0.75"/>
<path d="M780.6,817.7 Q781.3,818.7 780.3,819.4 Q779.3,820.2 778.5,820.6 Q777.8,821.0 776.6,821.0 Q775.3,821.1 775.3,819.9 Q775.3,818.7 775.8,818.0 Q776.3,817.3 777.0,817.0 Q777.8,816.7 778.8,816.7 Q779.9,816.6 780.6,817.7Z" fill="#c4dfbc" opacity="0.75"/>
<path d="M551.5,936.7 Q551.4,937.7 550.8,938.3 Q550.2,939.0 548.6,939.6 Q547.1,940.2 544.7,940.0 Q542.3,939.7 541.8,938.7 Q541.4,937.7 542.5,937.0 Q543.6,936.3 545.4,935.8 Q547.1,935.3 549.4,935.6 Q551.6,935.8 551.5,936.7Z" fill="#c4dfbc" opacity="0.75"/>
<path d="M534.9,804.8 Q534.6,805.8 534.0,806.5 Q533.4,807.2 532.0,807.4 Q530.6,807.6 528.5,807.7 Q526.3,807.8 525.9,806.8 Q525.5,805.8 526.5,805.1 Q527.6,804.4 529.1,804.1 Q530.6,803.7 532.9,803.7 Q535.1,803.7 534.9,804.8Z" fill="#c4dfbc" opacity="0.75"/>
<path d="M719.7,939.4 Q720.6,941.1 720.0,943.2 Q719.4,945.2 717.8,944.8 Q716.1,944.3 715.0,944.1 Q713.9,943.9 713.7,942.5 Q713.4,941.1 713.7,939.8 Q714.1,938.6 715.1,936.8 Q716.1,935.1 717.5,936.4 Q718.8,937.7 719.7,939.4Z" fill="#c4dfbc" opacity="0.75"/>
<path d="M870.0,658.2 Q870.9,658.7 870.1,659.4 Q869.3,660.0 868.1,660.3 Q867.0,660.6 865.7,660.4 Q864.4,660.1 863.4,659.4 Q862.4,658.7 863.0,657.8 Q863.6,656.9 865.3,656.9 Q867.0,656.9 868.0,657.3 Q869.0,657.6 870.0,658.2Z" fill="#c4dfbc" opacity="0.75"/>
<path d="M550.3,840.8 Q551.3,841.4 550.7,842.2 Q550.0,843.0 548.9,843.0 Q547.9,843.0 547.1,842.8 Q546.4,842.6 545.8,842.0 Q545.2,841.4 545.4,840.6 Q545.7,839.7 546.8,839.3 Q547.9,838.9 548.6,839.6 Q549.4,840.2 550.3,840.8Z" fill="#c4dfbc" opacity="0.75"/>
<path d="M466.2,846.0 Q467.1,846.8 466.1,847.7 Q465.2,848.5 464.3,849.0 Q463.5,849.6 462.6,849.1 Q461.7,848.5 461.3,847.7 Q460.8,846.8 460.9,845.7 Q461.0,844.5 462.2,843.9 Q463.5,843.3 464.4,844.2 Q465.2,845.1 466.2,846.0Z" fill="#c4dfbc" opacity="0.75"/>
<path d="M482.0,855.5 Q482.2,857.2 482.1,859.3 Q482.1,861.4 481.4,861.6 Q480.8,861.8 480.1,861.7 Q479.4,861.6 479.3,859.4 Q479.3,857.2 479.6,855.9 Q479.9,854.6 480.3,854.3 Q480.8,853.9 481.3,853.8 Q481.9,853.7 482.0,855.5Z" fill="#c4dfbc" opacity="0.75"/>
<path d="M713.6,914.0 Q713.9,915.2 712.9,916.0 Q711.9,916.8 710.7,917.2 Q709.6,917.7 708.0,917.5 Q706.5,917.3 705.3,916.3 Q704.1,915.2 705.7,914.5 Q707.3,913.7 708.5,913.0 Q709.6,912.4 711.4,912.6 Q713.2,912.8 713.6,914.0Z" fill="#c4dfbc" opacity="0.75"/>
<path d="M882.3,686.5 Q883.6,688.0 882.2,689.2 Q880.8,690.5 879.3,692.5 Q877.9,694.6 876.0,693.0 Q874.2,691.3 872.4,689.6 Q870.6,688.0 872.1,686.0 Q873.5,684.0 875.7,682.8 Q877.9,681.7 879.5,683.4 Q881.0,685.1 882.3,686.5Z" fill="#c4dfbc" opacity="0.75"/>
<path d="M788.7,694.0 Q788.7,695.8 788.1,697.2 Q787.5,698.5 786.0,699.3 Q784.5,700.1 782.6,699.6 Q780.7,699.1 780.1,697.5 Q779.6,695.8 780.6,694.6 Q781.7,693.4 783.1,692.7 Q784.5,692.0 786.6,692.1 Q788.8,692.1 788.7,694.0Z" fill="#c4dfbc" opacity="0.75"/>
<path d="M846.8,637.5 Q848.0,638.1 846.3,638.5 Q844.6,639.0 843.3,639.4 Q842.0,639.9 840.2,639.6 Q838.4,639.3 837.5,638.7 Q836.7,638.1 837.8,637.6 Q839.0,637.1 840.5,636.8 Q842.0,636.6 843.8,636.7 Q845.7,636.9 846.8,637.5Z" fill="#c4dfbc" opacity="0.75"/>
<path d="M601.8,834.6 Q602.4,835.2 601.8,835.7 Q601.1,836.3 599.9,836.4 Q598.7,836.5 597.2,836.5 Q595.8,836.5 595.2,835.8 Q594.6,835.2 595.4,834.6 Q596.3,834.1 597.5,834.0 Q598.7,833.9 599.9,834.0 Q601.1,834.1 601.8,834.6Z" fill="#c4dfbc" opacity="0.75"/>
<path d="M435.7,665.2 Q436.2,666.0 435.7,666.8 Q435.2,667.5 434.7,668.5 Q434.3,669.4 433.8,668.5 Q433.3,667.6 432.7,666.8 Q432.0,666.0 432.3,664.7 Q432.6,663.3 433.4,663.1 Q434.3,662.8 434.7,663.6 Q435.2,664.4 435.7,665.2Z" fill="#c4dfbc" opacity="0.75"/>
<path d="M453.4,896.3 Q453.1,898.4 453.4,900.5 Q453.8,902.7 451.5,902.8 Q449.3,902.9 447.1,902.8 Q444.8,902.6 444.0,900.5 Q443.1,898.4 444.9,897.2 Q446.6,895.9 448.0,894.4 Q449.3,893.0 451.5,893.6 Q453.6,894.3 453.4,896.3Z" fill="#c4dfbc" opacity="0.75"/>
<path d="M414.5,735.2 Q414.7,736.9 414.7,739.0 Q414.7,741.1 413.8,740.9 Q412.8,740.6 412.0,740.5 Q411.2,740.4 410.6,738.7 Q410.0,736.9 410.8,735.6 Q411.5,734.2 412.2,733.5 Q412.8,732.8 413.6,733.2 Q414.4,733.5 414.5,735.2Z" fill="#c4dfbc" opacity="0.75"/>
<path d="M545.6,635.1 Q546.1,636.7 545.9,639.0 Q545.6,641.2 544.6,640.9 Q543.6,640.7 542.7,640.8 Q541.8,641.0 541.9,638.9 Q542.0,636.7 542.0,634.9 Q542.0,633.1 542.8,632.2 Q543.6,631.3 544.4,632.4 Q545.1,633.5 545.6,635.1Z" fill="#c4dfbc" opacity="0.75"/>
<path d="M834.8,801.5 Q836.7,802.1 835.2,802.8 Q833.6,803.6 831.5,803.7 Q829.4,803.9 827.1,803.8 Q824.8,803.7 824.8,802.9 Q824.8,802.1 824.6,801.2 Q824.3,800.3 826.9,800.2 Q829.4,800.1 831.2,800.5 Q833.0,800.9 834.8,801.5Z" fill="#c4dfbc" opacity="0.75"/>
<path d="M777.6,765.7 Q779.4,766.1 777.9,766.6 Q776.4,767.1 775.0,767.5 Q773.6,767.9 771.3,767.8 Q769.0,767.7 768.7,766.9 Q768.4,766.1 769.1,765.4 Q769.8,764.8 771.7,764.7 Q773.6,764.6 774.7,765.0 Q775.8,765.3 777.6,765.7Z" fill="#c4dfbc" opacity="0.75"/>
<path d="M399.5,671.8 Q400.8,672.6 399.5,673.6 Q398.3,674.5 397.4,675.0 Q396.4,675.4 395.1,675.4 Q393.8,675.3 393.9,674.0 Q394.1,672.6 394.4,671.8 Q394.8,671.0 395.6,670.3 Q396.4,669.6 397.3,670.2 Q398.2,670.9 399.5,671.8Z" fill="#c4dfbc" opacity="0.75"/>
<path d="M567.1,695.7 Q567.8,696.5 567.0,697.3 Q566.2,698.1 564.7,698.2 Q563.3,698.3 561.4,698.4 Q559.5,698.6 559.7,697.6 Q559.8,696.5 560.4,695.9 Q561.0,695.3 562.2,695.1 Q563.3,694.9 564.9,694.8 Q566.5,694.8 567.1,695.7Z" fill="#c4dfbc" opacity="0.75"/>
<path d="M830.8,874.1 Q831.5,874.5 831.0,875.1 Q830.6,875.6 829.6,875.8 Q828.6,875.9 827.5,875.8 Q826.5,875.7 826.2,875.1 Q826.0,874.5 826.1,873.8 Q826.1,873.1 827.4,872.9 Q828.6,872.7 829.4,873.2 Q830.2,873.6 830.8,874.1Z" fill="#c4dfbc" opacity="0.75"/>
<path d="M847.6,638.1 Q847.6,639.0 847.8,640.0 Q848.0,641.0 846.6,640.8 Q845.2,640.7 844.0,640.7 Q842.8,640.8 841.8,639.9 Q840.9,639.0 842.2,638.4 Q843.4,637.7 844.3,637.4 Q845.2,637.1 846.5,637.2 Q847.7,637.2 847.6,638.1Z" fill="#c4dfbc" opacity="0.75"/>
<path d="M470.7,722.0 Q471.2,723.7 470.8,725.6 Q470.5,727.6 469.8,727.3 Q469.1,726.9 468.4,727.4 Q467.6,727.9 467.4,725.8 Q467.1,723.7 467.5,722.0 Q467.9,720.4 468.5,719.2 Q469.1,718.1 469.7,719.2 Q470.3,720.4 470.7,722.0Z" fill="#c4dfbc" opacity="0.75"/>
<path d="M497.3,657.4 Q497.5,658.6 497.2,659.7 Q496.9,660.8 496.3,661.4 Q495.6,662.0 494.9,661.4 Q494.2,660.8 494.2,659.7 Q494.2,658.6 494.3,657.6 Q494.4,656.6 495.0,656.3 Q495.6,655.9 496.3,656.1 Q497.0,656.3 497.3,657.4Z" fill="#c4dfbc" opacity="0.75"/>
<path d="M391.6,706.0 Q392.5,708.1 391.2,709.6 Q389.9,711.2 388.4,712.8 Q386.9,714.4 385.3,712.8 Q383.8,711.2 383.3,709.6 Q382.9,708.1 382.7,705.8 Q382.5,703.5 384.7,703.0 Q386.9,702.6 388.8,703.3 Q390.7,704.0 391.6,706.0Z" fill="#c4dfbc" opacity="0.75"/>
<path d="M726.9,936.3 Q728.8,937.3 727.3,938.7 Q725.8,940.1 724.1,941.1 Q722.3,942.0 720.3,941.2 Q718.4,940.4 718.0,938.8 Q717.7,937.3 718.5,936.1 Q719.2,935.0 720.8,933.9 Q722.3,932.9 723.6,934.0 Q724.9,935.2 726.9,936.3Z" fill="#c4dfbc" opacity="0.75"/>
<path d="M850.7,669.1 Q850.7,671.1 850.4,672.5 Q850.0,673.8 849.5,674.2 Q849.0,674.5 848.5,674.1 Q848.0,673.6 847.4,672.3 Q846.7,671.1 847.1,669.2 Q847.4,667.3 848.2,666.4 Q849.0,665.5 849.8,666.3 Q850.6,667.0 850.7,669.1Z" fill="#c4dfbc" opacity="0.75"/>
<path d="M417.6,812.2 Q419.5,813.4 417.5,814.5 Q415.5,815.7 414.2,817.4 Q412.9,819.1 410.6,818.3 Q408.3,817.5 407.2,815.4 Q406.2,813.4 408.2,812.2 Q410.2,811.0 411.6,810.3 Q412.9,809.7 414.3,810.3 Q415.6,811.0 417.6,812.2Z" fill="#c4dfbc" opacity="0.75"/>
<path d="M400.6,893.9 Q401.5,895.4 400.5,896.8 Q399.4,898.2 398.1,898.5 Q396.8,898.8 395.6,898.3 Q394.5,897.8 393.1,896.6 Q391.7,895.4 393.0,894.1 Q394.3,892.8 395.5,892.1 Q396.8,891.4 398.2,891.9 Q399.7,892.3 400.6,893.9Z" fill="#c4dfbc" opacity="0.75"/>
<path d="M393.5,705.9 Q394.0,706.9 394.1,708.2 Q394.2,709.6 392.0,709.7 Q389.8,709.8 387.7,709.6 Q385.7,709.4 385.2,708.1 Q384.7,706.9 386.1,706.2 Q387.5,705.5 388.6,704.8 Q389.8,704.2 391.4,704.6 Q393.0,704.9 393.5,705.9Z" fill="#c4dfbc" opacity="0.75"/>
<path d="M427.3,885.7 Q427.7,886.5 427.5,887.6 Q427.3,888.6 426.6,888.3 Q425.9,888.0 425.4,888.1 Q424.8,888.1 424.6,887.3 Q424.4,886.5 424.5,885.6 Q424.6,884.6 425.3,884.7 Q425.9,884.7 426.4,884.8 Q427.0,884.9 427.3,885.7Z" fill="#c4dfbc" opacity="0.75"/>
<path d="M562.8,889.3 Q562.8,890.4 562.8,891.4 Q562.8,892.4 560.5,892.7 Q558.1,892.9 556.6,892.3 Q555.1,891.7 553.5,891.0 Q551.9,890.4 553.5,889.7 Q555.2,889.0 556.7,888.2 Q558.1,887.3 560.4,887.8 Q562.7,888.3 562.8,889.3Z" fill="#c4dfbc" opacity="0.75"/>
<path d="M788.3,824.3 Q789.2,825.3 788.0,826.1 Q786.8,826.8 785.9,827.9 Q785.1,829.1 784.3,827.9 Q783.5,826.8 782.9,826.0 Q782.4,825.3 782.7,824.4 Q783.1,823.5 784.1,822.5 Q785.1,821.5 786.2,822.4 Q787.4,823.2 788.3,824.3Z" fill="#c4dfbc" opacity="0.75"/>
<path d="M578.2,905.6 Q578.9,907.0 578.3,908.4 Q577.7,909.9 576.2,910.3 Q574.7,910.8 573.6,910.0 Q572.4,909.2 572.0,908.1 Q571.6,907.0 572.2,906.0 Q572.8,905.1 573.7,903.9 Q574.7,902.7 576.1,903.5 Q577.5,904.3 578.2,905.6Z" fill="#c4dfbc" opacity="0.75"/>
<path d="M765.9,677.5 Q765.6,679.1 765.5,680.4 Q765.3,681.6 763.6,682.7 Q761.9,683.7 760.4,682.5 Q759.0,681.2 758.4,680.2 Q757.9,679.1 758.4,678.0 Q758.8,676.8 760.3,675.9 Q761.9,674.9 764.0,675.4 Q766.2,675.9 765.9,677.5Z" fill="#c4dfbc" opacity="0.75"/>
<path d="M460.7,673.9 Q461.1,674.8 460.8,675.8 Q460.6,676.9 459.7,677.2 Q458.8,677.5 457.4,677.7 Q456.0,678.0 455.7,676.4 Q455.3,674.8 456.3,673.9 Q457.2,673.0 458.0,671.6 Q458.8,670.2 459.5,671.6 Q460.3,673.0 460.7,673.9Z" fill="#c4dfbc" opacity="0.75"/>
<path d="M581.2,937.5 Q581.1,938.8 581.0,940.1 Q581.0,941.3 579.1,941.2 Q577.3,941.2 575.9,940.9 Q574.5,940.6 573.7,939.7 Q572.8,938.8 573.9,938.1 Q574.9,937.3 576.1,936.6 Q577.3,935.9 579.3,936.1 Q581.3,936.2 581.2,937.5Z" fill="#c4dfbc" opacity="0.75"/>
<path d="M591.3,859.8 Q591.8,861.4 591.0,862.6 Q590.1,863.8 589.0,864.1 Q587.8,864.4 586.4,864.3 Q585.0,864.3 584.3,862.8 Q583.5,861.4 584.2,859.8 Q585.0,858.3 586.4,857.8 Q587.8,857.2 589.3,857.7 Q590.8,858.2 591.3,859.8Z" fill="#c4dfbc" opacity="0.75"/>
<path d="M731.7,828.3 Q731.8,829.7 731.7,830.9 Q731.6,832.2 730.6,833.2 Q729.7,834.2 728.5,833.5 Q727.3,832.8 726.9,831.2 Q726.5,829.7 727.2,828.5 Q728.0,827.4 728.8,826.7 Q729.7,826.0 730.7,826.5 Q731.7,827.0 731.7,828.3Z" fill="#c4dfbc" opacity="0.75"/>
<path d="M785.7,748.4 Q786.6,749.0 785.2,749.4 Q783.8,749.9 782.2,750.4 Q780.5,750.9 777.8,750.7 Q775.2,750.5 774.9,749.7 Q774.6,749.0 776.0,748.6 Q777.5,748.1 779.0,747.7 Q780.5,747.3 782.7,747.5 Q784.8,747.8 785.7,748.4Z" fill="#c4dfbc" opacity="0.75"/>
<path d="M811.7,790.7 Q813.2,791.4 811.9,792.2 Q810.5,792.9 808.6,793.5 Q806.8,794.1 805.2,793.4 Q803.7,792.6 801.4,792.0 Q799.1,791.4 801.1,790.7 Q803.1,790.0 804.9,789.9 Q806.8,789.8 808.5,789.9 Q810.2,790.0 811.7,790.7Z" fill="#c4dfbc" opacity="0.75"/>
<path d="M588.2,627.5 Q588.3,629.2 587.8,630.5 Q587.3,631.7 586.2,632.2 Q585.2,632.6 583.8,632.6 Q582.5,632.6 581.7,630.9 Q580.8,629.2 581.8,627.8 Q582.8,626.3 584.0,626.1 Q585.2,625.9 586.7,625.8 Q588.1,625.7 588.2,627.5Z" fill="#c4dfbc" opacity="0.75"/>
<path d="M586.1,690.7 Q586.7,692.6 585.7,694.2 Q584.7,695.8 583.0,696.6 Q581.3,697.4 579.8,696.3 Q578.4,695.3 576.5,693.9 Q574.7,692.6 576.4,691.2 Q578.1,689.7 579.7,688.7 Q581.3,687.7 583.4,688.2 Q585.5,688.7 586.1,690.7Z" fill="#c4dfbc" opacity="0.75"/>
<path d="M803.7,773.8 Q805.0,774.3 803.8,775.0 Q802.7,775.6 801.4,776.2 Q800.1,776.8 799.0,776.1 Q797.8,775.5 797.1,774.9 Q796.5,774.3 797.2,773.7 Q797.8,773.2 799.0,772.8 Q800.1,772.5 801.3,772.8 Q802.4,773.2 803.7,773.8Z" fill="#c4dfbc" opacity="0.75"/>
<path d="M382.3,854.6 Q383.0,855.3 382.6,856.1 Q382.1,857.0 381.3,857.6 Q380.4,858.1 379.4,857.7 Q378.4,857.3 378.2,856.3 Q378.0,855.3 378.0,854.1 Q378.0,852.9 379.2,852.4 Q380.4,852.0 381.0,853.0 Q381.7,853.9 382.3,854.6Z" fill="#c4dfbc" opacity="0.75"/>
<path d="M453.0,889.7 Q453.5,890.2 453.1,890.8 Q452.7,891.4 452.1,891.4 Q451.4,891.5 451.0,891.2 Q450.6,891.0 450.4,890.6 Q450.3,890.2 450.4,889.7 Q450.5,889.3 451.0,888.8 Q451.4,888.4 451.9,888.8 Q452.4,889.2 453.0,889.7Z" fill="#c4dfbc" opacity="0.75"/>
<path d="M459.9,911.5 Q460.2,913.4 459.9,915.4 Q459.7,917.5 458.7,918.1 Q457.8,918.8 456.8,918.3 Q455.8,917.7 455.4,915.6 Q455.1,913.4 455.5,911.3 Q455.8,909.2 456.8,909.4 Q457.8,909.5 458.7,909.5 Q459.6,909.5 459.9,911.5Z" fill="#c4dfbc" opacity="0.75"/>
<path d="M657.1,860.4 Q657.5,861.7 656.8,862.7 Q656.1,863.8 654.5,864.1 Q652.9,864.4 651.0,864.3 Q649.0,864.2 649.0,862.9 Q649.0,861.7 649.1,860.4 Q649.1,859.2 651.0,859.1 Q652.9,858.9 654.8,859.0 Q656.7,859.2 657.1,860.4Z" fill="#c4dfbc" opacity="0.75"/>
<path d="M385.9,892.2 Q387.4,893.2 386.2,894.5 Q385.0,895.8 383.7,896.4 Q382.4,897.0 380.5,896.9 Q378.7,896.9 379.1,895.1 Q379.5,893.2 379.4,891.7 Q379.3,890.1 380.9,889.5 Q382.4,888.8 383.4,890.1 Q384.4,891.3 385.9,892.2Z" fill="#c4dfbc" opacity="0.75"/>
<path d="M552.1,936.4 Q552.1,938.2 552.3,940.1 Q552.5,942.1 551.0,942.8 Q549.5,943.4 548.4,942.3 Q547.2,941.2 546.1,939.7 Q544.9,938.2 546.0,936.6 Q547.1,935.0 548.3,934.2 Q549.5,933.4 550.8,934.0 Q552.2,934.7 552.1,936.4Z" fill="#c4dfbc" opacity="0.75"/>
<path d="M780.3,690.6 Q780.8,692.2 779.7,693.3 Q778.7,694.4 777.7,695.5 Q776.6,696.6 775.5,695.6 Q774.4,694.6 773.8,693.4 Q773.2,692.2 773.9,691.1 Q774.6,690.1 775.6,689.4 Q776.6,688.6 778.2,688.8 Q779.8,688.9 780.3,690.6Z" fill="#c4dfbc" opacity="0.75"/>
<path d="M719.0,877.0 Q719.8,877.6 719.4,878.6 Q719.0,879.7 717.9,880.2 Q716.8,880.8 716.0,879.8 Q715.3,878.9 714.4,878.3 Q713.4,877.6 713.8,876.5 Q714.2,875.3 715.5,875.1 Q716.8,874.9 717.5,875.6 Q718.2,876.3 719.0,877.0Z" fill="#c4dfbc" opacity="0.75"/>
<path d="M539.3,625.6 Q540.3,627.0 539.5,628.6 Q538.8,630.2 536.4,631.0 Q534.0,631.8 531.9,630.8 Q529.7,629.9 528.8,628.4 Q527.9,627.0 528.8,625.5 Q529.7,624.1 531.8,623.4 Q534.0,622.7 536.1,623.4 Q538.3,624.1 539.3,625.6Z" fill="#c4dfbc" opacity="0.75"/>
<path d="M617.3,867.8 Q618.0,868.3 617.7,869.0 Q617.4,869.8 616.3,869.9 Q615.3,870.1 614.5,869.7 Q613.8,869.4 613.1,868.8 Q612.5,868.3 612.9,867.6 Q613.3,866.9 614.3,866.7 Q615.3,866.6 616.0,867.0 Q616.6,867.3 617.3,867.8Z" fill="#c4dfbc" opacity="0.75"/>
<path d="M538.6,757.8 Q539.3,759.5 537.9,760.5 Q536.6,761.5 535.7,762.6 Q534.9,763.6 534.0,762.5 Q533.2,761.5 532.7,760.5 Q532.3,759.5 532.1,757.9 Q531.9,756.2 533.4,755.8 Q534.9,755.4 536.4,755.7 Q538.0,756.0 538.6,757.8Z" fill="#c4dfbc" opacity="0.75"/>
<path d="M613.1,628.3 Q614.9,629.5 613.6,631.3 Q612.3,633.0 610.8,633.6 Q609.4,634.2 608.3,633.2 Q607.2,632.1 606.0,630.8 Q604.8,629.5 605.9,628.1 Q607.0,626.6 608.2,626.1 Q609.4,625.7 610.4,626.4 Q611.4,627.1 613.1,628.3Z" fill="#c4dfbc" opacity="0.75"/>
<path d="M386.6,842.7 Q388.8,843.1 386.7,843.6 Q384.6,844.1 383.0,844.2 Q381.5,844.4 379.1,844.5 Q376.7,844.6 376.7,843.9 Q376.6,843.1 376.7,842.4 Q376.7,841.6 379.1,841.6 Q381.5,841.7 382.9,841.9 Q384.4,842.2 386.6,842.7Z" fill="#c4dfbc" opacity="0.75"/>
<path d="M511.5,932.1 Q511.8,932.6 511.6,933.3 Q511.4,933.9 510.8,933.8 Q510.1,933.7 509.6,933.7 Q509.1,933.6 508.7,933.1 Q508.3,932.6 508.8,932.2 Q509.2,931.8 509.7,931.2 Q510.1,930.7 510.6,931.1 Q511.2,931.5 511.5,932.1Z" fill="#c4dfbc" opacity="0.75"/>
<path d="M412.6,740.6 Q412.5,742.3 412.6,744.0 Q412.8,745.7 411.3,745.8 Q409.8,745.9 408.5,745.7 Q407.2,745.4 406.6,743.8 Q406.1,742.3 406.8,740.9 Q407.5,739.6 408.7,739.0 Q409.8,738.5 411.3,738.7 Q412.8,738.9 412.6,740.6Z" fill="#c4dfbc" opacity="0.75"/>
<path d="M869.5,874.6 Q870.3,875.3 869.6,876.0 Q868.8,876.7 867.7,877.0 Q866.6,877.4 865.7,876.9 Q864.8,876.4 864.2,875.8 Q863.6,875.3 863.8,874.5 Q864.0,873.7 865.3,873.4 Q866.6,873.2 867.6,873.6 Q868.7,874.0 869.5,874.6Z" fill="#c4dfbc" opacity="0.75"/>
<path d="M541.1,760.2 Q541.6,761.7 541.4,763.5 Q541.1,765.3 539.7,766.0 Q538.2,766.6 537.3,765.4 Q536.3,764.2 536.2,762.9 Q536.1,761.7 536.2,760.5 Q536.3,759.3 537.3,758.6 Q538.2,757.9 539.4,758.3 Q540.6,758.7 541.1,760.2Z" fill="#c4dfbc" opacity="0.75"/>
<path d="M805.0,906.6 Q806.6,908.1 805.3,909.8 Q803.9,911.5 802.0,911.7 Q800.0,912.0 797.8,912.0 Q795.5,912.1 794.6,910.1 Q793.7,908.1 794.8,906.3 Q795.9,904.5 798.0,903.4 Q800.0,902.3 801.7,903.8 Q803.4,905.2 805.0,906.6Z" fill="#c4dfbc" opacity="0.75"/>
<path d="M425.4,799.8 Q426.0,801.6 425.1,802.9 Q424.3,804.1 423.6,805.2 Q422.9,806.2 421.9,805.6 Q421.0,805.0 420.8,803.3 Q420.5,801.6 421.0,800.4 Q421.5,799.2 422.2,798.6 Q422.9,798.0 423.9,798.0 Q424.9,798.1 425.4,799.8Z" fill="#c4dfbc" opacity="0.75"/>
<path d="M791.0,770.4 Q791.7,771.6 791.5,773.3 Q791.3,774.9 789.4,776.1 Q787.5,777.2 785.2,776.4 Q782.9,775.6 782.6,773.6 Q782.3,771.6 783.1,770.1 Q783.9,768.6 785.7,767.8 Q787.5,767.0 788.9,768.1 Q790.4,769.2 791.0,770.4Z" fill="#c4dfbc" opacity="0.75"/>
<path d="M480.9,681.2 Q481.2,682.6 480.8,683.9 Q480.5,685.2 479.4,685.3 Q478.2,685.4 477.5,684.9 Q476.7,684.4 475.4,683.5 Q474.1,682.6 475.1,681.5 Q476.2,680.3 477.2,680.1 Q478.2,680.0 479.4,679.9 Q480.6,679.9 480.9,681.2Z" fill="#c4dfbc" opacity="0.75"/>
<path d="M787.6,673.4 Q787.3,674.8 787.1,675.7 Q786.8,676.5 786.0,677.9 Q785.3,679.4 783.9,678.6 Q782.6,677.8 782.4,676.3 Q782.2,674.8 782.6,673.5 Q783.0,672.3 784.1,672.1 Q785.3,671.9 786.6,671.9 Q787.8,671.9 787.6,673.4Z" fill="#c4dfbc" opacity="0.75"/>
<path d="M603.2,924.7 Q603.1,926.9 602.2,928.2 Q601.3,929.4 600.1,930.2 Q598.8,931.0 597.3,930.4 Q595.9,929.8 595.5,928.4 Q595.0,926.9 595.6,925.7 Q596.2,924.4 597.5,923.0 Q598.8,921.6 601.1,922.0 Q603.4,922.4 603.2,924.7Z" fill="#c4dfbc" opacity="0.75"/>
<path d="M413.5,814.4 Q413.8,815.8 413.7,817.7 Q413.6,819.5 412.9,820.5 Q412.1,821.4 411.2,820.9 Q410.2,820.5 410.0,818.1 Q409.8,815.8 410.3,814.1 Q410.8,812.4 411.5,811.6 Q412.1,810.9 412.7,811.9 Q413.2,813.0 413.5,814.4Z" fill="#c4dfbc" opacity="0.75"/>
<path d="M878.7,940.4 Q878.8,941.4 878.8,942.5 Q878.8,943.6 878.1,944.0 Q877.3,944.5 876.6,944.0 Q875.9,943.5 876.0,942.4 Q876.2,941.4 876.0,940.3 Q875.9,939.3 876.6,938.9 Q877.3,938.6 878.0,939.0 Q878.6,939.4 878.7,940.4Z" fill="#c4dfbc" opacity="0.75"/>
<path d="M891.5,641.5 Q893.0,642.8 891.7,644.3 Q890.5,645.9 889.0,647.0 Q887.5,648.1 885.5,647.5 Q883.4,647.0 883.6,644.9 Q883.9,642.8 884.1,641.2 Q884.4,639.7 886.0,639.1 Q887.5,638.6 888.8,639.4 Q890.1,640.1 891.5,641.5Z" fill="#c4dfbc" opacity="0.75"/>
<path d="M629.0,677.0 Q628.8,678.8 628.9,680.4 Q629.1,682.0 628.2,682.0 Q627.4,682.0 626.8,681.4 Q626.3,680.7 625.5,679.8 Q624.6,678.8 625.4,677.6 Q626.1,676.5 626.7,675.0 Q627.4,673.6 628.3,674.4 Q629.2,675.2 629.0,677.0Z" fill="#c4dfbc" opacity="0.75"/>
<path d="M839.3,668.2 Q840.0,669.6 839.5,671.5 Q839.1,673.4 838.3,673.9 Q837.6,674.4 837.0,673.6 Q836.4,672.7 835.8,671.2 Q835.2,669.6 835.7,667.8 Q836.2,666.1 836.9,665.1 Q837.6,664.2 838.1,665.5 Q838.6,666.9 839.3,668.2Z" fill="#c4dfbc" opacity="0.75"/>
<path d="M497.0,642.5 Q498.3,643.1 497.1,643.7 Q495.8,644.3 494.6,644.7 Q493.4,645.0 492.3,644.6 Q491.2,644.2 490.6,643.7 Q490.0,643.1 490.0,642.2 Q489.9,641.3 491.6,641.3 Q493.4,641.3 494.5,641.6 Q495.6,642.0 497.0,642.5Z" fill="#c4dfbc" opacity="0.75"/>
<path d="M442.7,935.3 Q442.4,937.2 442.1,938.6 Q441.8,940.0 439.8,940.3 Q437.9,940.6 436.3,940.1 Q434.6,939.6 434.1,938.4 Q433.5,937.2 433.9,935.9 Q434.4,934.6 436.1,933.2 Q437.9,931.9 440.5,932.6 Q443.1,933.4 442.7,935.3Z" fill="#c4dfbc" opacity="0.75"/>
<path d="M860.8,655.7 Q862.7,656.1 861.2,656.6 Q859.7,657.2 858.0,657.8 Q856.3,658.4 855.0,657.7 Q853.7,656.9 851.7,656.5 Q849.7,656.1 851.3,655.6 Q852.8,655.0 854.6,654.9 Q856.3,654.8 857.6,655.1 Q859.0,655.3 860.8,655.7Z" fill="#c4dfbc" opacity="0.75"/>
<path d="M810.7,791.7 Q811.2,793.0 811.1,794.8 Q811.0,796.6 809.7,796.7 Q808.4,796.7 807.5,796.2 Q806.5,795.7 805.4,794.3 Q804.4,793.0 805.0,791.0 Q805.6,789.0 807.0,789.0 Q808.4,789.1 809.3,789.8 Q810.2,790.5 810.7,791.7Z" fill="#c4dfbc" opacity="0.75"/>
<path d="M426.5,818.4 Q427.0,819.1 426.7,820.0 Q426.3,821.0 425.2,821.4 Q424.1,821.9 423.1,821.3 Q422.1,820.8 422.0,820.0 Q421.9,819.1 422.3,818.6 Q422.7,818.0 423.4,817.2 Q424.1,816.5 425.0,817.1 Q425.9,817.6 426.5,818.4Z" fill="#c4dfbc" opacity="0.75"/>
<path d="M555.4,893.1 Q556.7,893.6 555.6,894.1 Q554.6,894.7 553.3,895.1 Q552.0,895.5 550.9,895.0 Q549.8,894.5 549.4,894.0 Q549.0,893.6 548.9,892.9 Q548.8,892.2 550.4,892.2 Q552.0,892.1 553.0,892.4 Q554.0,892.7 555.4,893.1Z" fill="#c4dfbc" opacity="0.75"/>
<path d="M573.7,813.7 Q574.4,814.8 573.5,815.6 Q572.5,816.4 571.5,817.4 Q570.5,818.4 568.9,817.9 Q567.2,817.5 566.5,816.1 Q565.7,814.8 566.9,813.8 Q568.1,812.8 569.3,812.0 Q570.5,811.2 571.8,811.9 Q573.0,812.7 573.7,813.7Z" fill="#c4dfbc" opacity="0.75"/>
<path d="M873.6,782.0 Q873.9,782.8 874.4,784.5 Q874.9,786.1 873.1,785.9 Q871.3,785.7 870.2,785.3 Q869.1,784.8 868.8,783.8 Q868.4,782.8 868.7,781.8 Q869.0,780.8 870.1,779.7 Q871.3,778.6 872.2,779.9 Q873.2,781.1 873.6,782.0Z" fill="#c4dfbc" opacity="0.75"/>
<path d="M430.0,847.0 Q430.4,848.0 430.2,849.3 Q429.9,850.7 429.3,851.4 Q428.8,852.2 428.4,851.1 Q428.0,849.9 427.4,848.9 Q426.8,848.0 427.2,846.5 Q427.5,844.9 428.1,845.1 Q428.8,845.4 429.2,845.7 Q429.6,846.0 430.0,847.0Z" fill="#c4dfbc" opacity="0.75"/>
<path d="M635.4,783.4 Q635.2,784.7 635.2,785.9 Q635.2,787.0 634.5,787.7 Q633.7,788.5 633.1,787.4 Q632.6,786.4 632.1,785.6 Q631.5,784.7 631.8,783.5 Q632.0,782.3 632.8,782.3 Q633.7,782.4 634.6,782.3 Q635.5,782.1 635.4,783.4Z" fill="#c4dfbc" opacity="0.75"/>
<path d="M867.7,747.4 Q867.7,749.0 867.7,750.6 Q867.6,752.2 865.2,752.7 Q862.8,753.1 861.1,752.2 Q859.5,751.2 858.9,750.1 Q858.4,749.0 858.9,747.9 Q859.5,746.8 861.1,746.3 Q862.8,745.7 865.3,745.7 Q867.7,745.8 867.7,747.4Z" fill="#c4dfbc" opacity="0.75"/>
<path d="M820.9,640.3 Q821.2,642.1 820.7,643.8 Q820.3,645.4 818.3,646.5 Q816.4,647.5 814.5,646.4 Q812.6,645.3 811.5,643.7 Q810.4,642.1 811.9,640.8 Q813.4,639.6 814.9,638.4 Q816.4,637.3 818.4,637.9 Q820.5,638.5 820.9,640.3Z" fill="#c4dfbc" opacity="0.75"/>
<path d="M394.4,667.5 Q395.2,669.5 394.6,671.6 Q394.0,673.7 391.9,674.8 Q389.7,675.8 387.5,674.8 Q385.3,673.9 385.8,671.7 Q386.3,669.5 386.1,667.5 Q385.9,665.6 387.8,665.4 Q389.7,665.2 391.7,665.4 Q393.7,665.5 394.4,667.5Z" fill="#c4dfbc" opacity="0.75"/>
<path d="M523.9,797.1 Q524.4,798.0 523.7,798.8 Q523.0,799.6 521.5,800.4 Q520.1,801.2 518.8,800.3 Q517.5,799.5 516.9,798.7 Q516.4,798.0 516.6,797.0 Q516.8,796.1 518.4,796.1 Q520.1,796.2 521.7,796.2 Q523.3,796.1 523.9,797.1Z" fill="#c4dfbc" opacity="0.75"/>
<path d="M874.6,788.0 Q875.1,788.9 874.7,789.8 Q874.2,790.8 873.3,791.1 Q872.3,791.5 871.2,791.3 Q870.1,791.0 869.6,790.0 Q869.0,788.9 869.6,787.8 Q870.2,786.8 871.2,786.4 Q872.3,786.0 873.3,786.5 Q874.2,787.1 874.6,788.0Z" fill="#c4dfbc" opacity="0.75"/>
<path d="M677.2,831.4 Q678.1,832.5 677.4,833.7 Q676.8,834.9 675.0,835.3 Q673.2,835.6 671.8,835.0 Q670.3,834.5 669.8,833.5 Q669.3,832.5 669.9,831.5 Q670.5,830.6 671.9,829.9 Q673.2,829.2 674.7,829.8 Q676.3,830.4 677.2,831.4Z" fill="#c4dfbc" opacity="0.75"/>
<path d="M685.4,628.2 Q686.8,628.8 685.9,629.6 Q685.0,630.5 683.1,630.7 Q681.2,630.8 678.7,630.9 Q676.2,631.0 676.4,629.9 Q676.6,628.8 676.6,627.8 Q676.7,626.8 679.0,626.9 Q681.2,626.9 682.6,627.3 Q683.9,627.6 685.4,628.2Z" fill="#c4dfbc" opacity="0.75"/>
<path d="M831.5,764.4 Q832.3,765.4 831.3,766.2 Q830.3,767.0 829.4,767.5 Q828.6,767.9 827.1,768.1 Q825.6,768.3 825.2,766.8 Q824.8,765.4 825.8,764.5 Q826.8,763.6 827.7,763.1 Q828.6,762.5 829.6,762.9 Q830.6,763.3 831.5,764.4Z" fill="#c4dfbc" opacity="0.75"/>
<path d="M768.1,865.4 Q769.0,867.3 767.1,868.4 Q765.2,869.6 763.9,871.0 Q762.5,872.5 761.3,870.9 Q760.1,869.3 758.4,868.3 Q756.6,867.3 757.7,865.8 Q758.8,864.2 760.7,863.7 Q762.5,863.2 764.9,863.3 Q767.2,863.5 768.1,865.4Z" fill="#c4dfbc" opacity="0.75"/>
<path d="M832.9,817.3 Q833.4,818.7 832.5,819.7 Q831.5,820.7 830.4,821.2 Q829.3,821.7 828.0,821.4 Q826.8,821.1 826.4,819.9 Q826.1,818.7 826.6,817.7 Q827.1,816.7 828.2,815.8 Q829.3,814.9 830.9,815.4 Q832.4,815.9 832.9,817.3Z" fill="#c4dfbc" opacity="0.75"/>
<path d="M639.6,765.7 Q639.8,766.6 639.3,767.4 Q638.9,768.2 637.8,768.1 Q636.8,768.1 635.5,768.3 Q634.2,768.5 634.2,767.6 Q634.2,766.6 634.3,765.8 Q634.3,764.9 635.5,764.5 Q636.8,764.1 638.1,764.5 Q639.4,764.8 639.6,765.7Z" fill="#c4dfbc" opacity="0.75"/>
<path d="M485.8,760.4 Q486.0,761.0 485.8,761.6 Q485.5,762.2 485.0,762.7 Q484.4,763.2 483.8,762.8 Q483.1,762.4 483.0,761.7 Q482.8,761.0 482.9,760.2 Q483.0,759.5 483.7,759.4 Q484.4,759.3 485.0,759.6 Q485.5,759.8 485.8,760.4Z" fill="#c4dfbc" opacity="0.75"/>
<path d="M736.8,748.2 Q738.0,749.3 736.9,750.4 Q735.9,751.5 734.2,751.8 Q732.6,752.1 731.5,751.4 Q730.4,750.7 729.6,750.0 Q728.8,749.3 729.3,748.3 Q729.8,747.4 731.2,746.9 Q732.6,746.3 734.1,746.7 Q735.7,747.2 736.8,748.2Z" fill="#c4dfbc" opacity="0.75"/>
<path d="M836.8,931.0 Q837.6,932.7 836.4,933.9 Q835.2,935.1 834.1,935.8 Q833.0,936.6 831.5,936.3 Q830.0,936.0 830.1,934.3 Q830.3,932.7 830.6,931.5 Q830.8,930.3 831.9,928.9 Q833.0,927.6 834.5,928.5 Q836.0,929.4 836.8,931.0Z" fill="#c4dfbc" opacity="0.75"/>
<path d="M839.8,757.9 Q840.1,759.3 839.5,760.2 Q838.9,761.2 838.1,761.6 Q837.3,762.0 836.2,761.9 Q835.1,761.9 834.7,760.6 Q834.3,759.3 834.9,758.2 Q835.5,757.1 836.4,755.9 Q837.3,754.7 838.4,755.7 Q839.4,756.6 839.8,757.9Z" fill="#c4dfbc" opacity="0.75"/>
<path d="M402.9,754.7 Q402.8,756.2 402.7,757.5 Q402.6,758.8 401.7,760.0 Q400.8,761.3 399.8,760.3 Q398.7,759.3 398.2,757.8 Q397.6,756.2 398.4,755.1 Q399.2,753.9 400.0,753.0 Q400.8,752.2 401.9,752.7 Q402.9,753.2 402.9,754.7Z" fill="#c4dfbc" opacity="0.75"/>
<path d="M521.2,830.0 Q521.9,831.3 520.7,832.3 Q519.4,833.3 517.8,833.7 Q516.3,834.2 513.8,834.3 Q511.3,834.4 511.6,832.8 Q511.8,831.3 512.5,830.4 Q513.2,829.4 514.7,829.0 Q516.3,828.5 518.4,828.6 Q520.6,828.7 521.2,830.0Z" fill="#c4dfbc" opacity="0.75"/>
<path d="M413.4,627.6 Q413.7,629.0 413.2,630.1 Q412.7,631.3 411.9,631.9 Q411.1,632.5 410.3,631.8 Q409.5,631.2 408.4,630.1 Q407.3,629.0 408.1,627.4 Q408.8,625.9 410.0,625.5 Q411.1,625.2 412.1,625.7 Q413.1,626.1 413.4,627.6Z" fill="#c4dfbc" opacity="0.75"/>
<path d="M581.8,640.2 Q582.0,642.4 581.6,644.4 Q581.1,646.3 579.6,646.5 Q578.0,646.7 577.0,645.8 Q576.0,645.0 574.3,643.7 Q572.7,642.4 573.5,640.2 Q574.4,638.0 576.2,638.0 Q578.0,638.0 579.8,637.9 Q581.7,637.9 581.8,640.2Z" fill="#c4dfbc" opacity="0.75"/>
<path d="M507.1,748.1 Q507.5,749.3 506.8,750.3 Q506.1,751.2 505.2,751.9 Q504.4,752.5 503.6,751.7 Q502.9,750.9 502.6,750.1 Q502.4,749.3 502.6,748.5 Q502.8,747.6 503.6,747.4 Q504.4,747.2 505.5,747.1 Q506.7,746.9 507.1,748.1Z" fill="#c4dfbc" opacity="0.75"/>
<path d="M532.0,803.2 Q532.7,804.1 531.8,804.9 Q531.0,805.6 530.0,806.0 Q529.0,806.3 527.3,806.5 Q525.6,806.7 525.6,805.4 Q525.5,804.1 526.1,803.3 Q526.7,802.4 527.9,802.1 Q529.0,801.8 530.2,802.1 Q531.4,802.3 532.0,803.2Z" fill="#c4dfbc" opacity="0.75"/>
<path d="M504.4,635.3 Q504.8,636.1 503.9,636.7 Q502.9,637.2 502.2,637.6 Q501.4,637.9 500.1,637.9 Q498.8,637.9 498.9,637.0 Q499.1,636.1 499.2,635.4 Q499.3,634.7 500.3,634.2 Q501.4,633.6 502.7,634.0 Q504.0,634.4 504.4,635.3Z" fill="#c4dfbc" opacity="0.75"/>
<path d="M463.4,736.1 Q463.7,737.6 463.9,739.9 Q464.1,742.3 462.6,742.5 Q461.2,742.7 460.2,741.6 Q459.3,740.5 458.7,739.1 Q458.1,737.6 458.8,736.2 Q459.5,734.9 460.3,733.3 Q461.2,731.8 462.1,733.2 Q463.1,734.6 463.4,736.1Z" fill="#c4dfbc" opacity="0.75"/>
<path d="M845.1,811.2 Q845.3,812.4 845.4,814.1 Q845.5,815.8 844.4,815.5 Q843.2,815.3 842.3,815.2 Q841.3,815.1 840.9,813.8 Q840.5,812.4 841.1,811.3 Q841.6,810.2 842.4,809.1 Q843.2,808.0 844.1,809.0 Q844.9,810.0 845.1,811.2Z" fill="#c4dfbc" opacity="0.75"/>
<path d="M720.7,805.4 Q720.8,806.1 721.0,806.9 Q721.1,807.7 719.7,807.7 Q718.3,807.7 717.0,807.6 Q715.7,807.5 715.8,806.8 Q715.9,806.1 715.9,805.4 Q715.9,804.7 717.1,804.6 Q718.3,804.4 719.4,804.6 Q720.6,804.8 720.7,805.4Z" fill="#c4dfbc" opacity="0.75"/>
<path d="M534.3,645.5 Q535.1,646.0 534.4,646.6 Q533.8,647.2 533.0,647.5 Q532.2,647.9 531.1,647.8 Q530.0,647.8 529.6,646.9 Q529.2,646.0 529.6,645.2 Q530.0,644.3 531.1,643.9 Q532.2,643.6 532.9,644.3 Q533.6,645.0 534.3,645.5Z" fill="#c4dfbc" opacity="0.75"/>
<path d="M525.0,633.6 Q525.9,634.4 525.6,635.5 Q525.2,636.6 523.4,637.1 Q521.7,637.6 520.4,636.9 Q519.0,636.1 517.6,635.3 Q516.2,634.4 517.5,633.5 Q518.8,632.6 520.3,632.0 Q521.7,631.4 522.9,632.1 Q524.2,632.9 525.0,633.6Z" fill="#c4dfbc" opacity="0.75"/>
<path d="M441.9,915.5 Q441.7,916.1 441.4,916.6 Q441.0,917.1 439.7,917.3 Q438.5,917.5 437.0,917.3 Q435.6,917.2 434.8,916.7 Q434.1,916.1 435.1,915.7 Q436.2,915.3 437.3,915.0 Q438.5,914.7 440.3,914.8 Q442.1,914.9 441.9,915.5Z" fill="#c4dfbc" opacity="0.75"/>
<path d="M475.1,892.2 Q476.2,892.8 475.8,893.8 Q475.5,894.7 473.6,894.9 Q471.7,895.0 470.6,894.5 Q469.5,893.9 467.7,893.4 Q465.9,892.8 466.8,891.8 Q467.8,890.7 469.7,890.7 Q471.7,890.7 472.9,891.1 Q474.0,891.6 475.1,892.2Z" fill="#c4dfbc" opacity="0.75"/>
<path d="M822.4,818.0 Q822.8,818.8 822.0,819.3 Q821.2,819.9 820.5,820.5 Q819.7,821.2 818.7,820.8 Q817.6,820.3 817.7,819.5 Q817.9,818.8 817.8,818.0 Q817.7,817.2 818.7,817.1 Q819.7,817.0 820.8,817.1 Q821.9,817.2 822.4,818.0Z" fill="#c4dfbc" opacity="0.75"/>
<path d="M812.6,713.5 Q814.0,714.7 812.6,715.9 Q811.2,717.2 808.9,717.7 Q806.6,718.3 804.1,717.8 Q801.7,717.4 801.0,716.0 Q800.4,714.7 801.5,713.6 Q802.7,712.6 804.7,712.5 Q806.6,712.5 808.9,712.4 Q811.2,712.2 812.6,713.5Z" fill="#c4dfbc" opacity="0.75"/>
<path d="M448.3,866.6 Q448.8,868.1 448.5,869.7 Q448.3,871.3 446.6,872.7 Q444.9,874.0 443.1,872.8 Q441.3,871.5 440.7,869.8 Q440.1,868.1 441.1,866.7 Q442.1,865.4 443.5,865.1 Q444.9,864.9 446.4,865.0 Q447.8,865.2 448.3,866.6Z" fill="#c4dfbc" opacity="0.75"/>
<path d="M593.2,688.0 Q593.8,689.3 593.2,690.5 Q592.6,691.7 592.0,692.2 Q591.4,692.7 590.6,692.5 Q589.9,692.2 589.6,690.7 Q589.4,689.3 589.4,687.4 Q589.5,685.5 590.4,685.5 Q591.4,685.5 592.1,686.1 Q592.7,686.7 593.2,688.0Z" fill="#c4dfbc" opacity="0.75"/>
<path d="M838.3,668.3 Q838.6,670.3 838.3,672.2 Q838.0,674.0 836.7,673.9 Q835.5,673.8 834.3,673.8 Q833.1,673.8 832.7,672.1 Q832.3,670.3 832.9,668.7 Q833.4,667.1 834.5,666.0 Q835.5,664.9 836.8,665.6 Q838.1,666.3 838.3,668.3Z" fill="#c4dfbc" opacity="0.75"/>
<path d="M439.9,716.7 Q440.1,717.3 439.8,717.8 Q439.4,718.3 438.8,718.8 Q438.1,719.3 437.2,718.9 Q436.4,718.5 436.3,717.9 Q436.3,717.3 436.4,716.8 Q436.6,716.2 437.3,715.9 Q438.1,715.6 438.9,715.9 Q439.6,716.2 439.9,716.7Z" fill="#c4dfbc" opacity="0.75"/>
<path d="M469.6,646.7 Q470.0,647.9 470.3,649.7 Q470.6,651.4 468.2,652.5 Q465.7,653.6 463.5,652.3 Q461.3,651.1 461.3,649.5 Q461.3,647.9 461.4,646.4 Q461.6,644.9 463.6,644.3 Q465.7,643.8 467.4,644.6 Q469.1,645.5 469.6,646.7Z" fill="#c4dfbc" opacity="0.75"/>
<path d="M717.6,704.8 Q718.3,705.2 717.9,705.9 Q717.6,706.6 716.7,706.6 Q715.7,706.6 715.1,706.3 Q714.6,706.1 714.0,705.6 Q713.4,705.2 713.7,704.5 Q713.9,703.8 714.8,703.5 Q715.7,703.1 716.3,703.7 Q716.9,704.3 717.6,704.8Z" fill="#c4dfbc" opacity="0.75"/>
<path d="M478.8,714.0 Q478.8,716.0 477.9,717.6 Q477.0,719.2 476.3,721.5 Q475.6,723.7 472.8,723.4 Q470.0,723.0 467.8,722.6 Q465.5,722.2 463.5,721.1 Q461.5,719.9 461.3,718.0 Q461.0,716.0 460.7,713.8 Q460.3,711.5 463.1,710.9 Q465.8,710.2 467.9,710.1 Q470.0,710.1 472.5,709.6 Q475.0,709.1 476.9,710.5 Q478.8,711.9 478.8,714.0Z" fill="#eef2ec" opacity="0.95"/>
<path d="M564.5,685.2 Q565.6,686.0 565.1,687.1 Q564.6,688.1 563.7,689.1 Q562.9,690.0 561.4,690.3 Q560.0,690.7 558.8,690.0 Q557.6,689.3 556.7,688.6 Q555.8,687.9 555.9,687.0 Q556.0,686.0 556.1,685.1 Q556.3,684.3 556.9,683.4 Q557.5,682.5 558.8,682.8 Q560.0,683.0 561.3,682.7 Q562.6,682.4 563.0,683.4 Q563.5,684.4 564.5,685.2Z" fill="#eef2ec" opacity="0.95"/>
<path d="M668.3,698.1 Q668.7,699.0 668.9,700.2 Q669.1,701.4 667.5,701.5 Q665.9,701.6 665.0,701.8 Q664.0,702.0 662.8,702.1 Q661.7,702.2 661.1,701.4 Q660.5,700.6 659.6,699.8 Q658.7,699.0 659.8,698.3 Q660.9,697.6 661.0,696.3 Q661.2,695.1 662.6,694.8 Q664.0,694.5 665.4,694.8 Q666.7,695.2 667.4,696.2 Q668.0,697.2 668.3,698.1Z" fill="#eef2ec" opacity="0.95"/>
<path d="M710.2,768.1 Q710.3,769.0 710.4,770.0 Q710.5,771.1 709.5,771.7 Q708.4,772.3 707.2,772.5 Q706.0,772.7 704.9,772.4 Q703.8,772.1 702.9,771.5 Q702.0,770.9 701.4,769.9 Q700.8,769.0 701.0,767.9 Q701.2,766.8 702.1,765.9 Q703.1,765.0 704.6,765.4 Q706.0,765.8 707.1,765.9 Q708.2,766.0 709.1,766.6 Q710.0,767.1 710.2,768.1Z" fill="#eef2ec" opacity="0.95"/>
<path d="M608.5,798.8 Q608.8,800.0 608.1,801.0 Q607.5,802.1 606.4,802.7 Q605.4,803.3 604.2,803.4 Q603.0,803.6 601.7,803.5 Q600.4,803.5 599.3,802.9 Q598.2,802.2 597.2,801.1 Q596.1,800.0 596.6,798.7 Q597.2,797.3 598.4,796.4 Q599.7,795.4 601.3,794.9 Q603.0,794.5 604.7,794.8 Q606.4,795.2 607.3,796.4 Q608.1,797.6 608.5,798.8Z" fill="#eef2ec" opacity="0.95"/>
<path d="M647.4,830.0 Q647.6,831.0 646.7,831.6 Q645.7,832.2 645.4,833.1 Q645.2,834.0 644.1,834.2 Q643.0,834.4 642.1,833.9 Q641.2,833.5 640.3,833.1 Q639.4,832.7 638.8,831.8 Q638.1,831.0 638.8,830.2 Q639.6,829.4 640.2,828.7 Q640.9,828.0 641.9,828.1 Q643.0,828.1 643.9,828.3 Q644.8,828.4 646.0,828.8 Q647.1,829.1 647.4,830.0Z" fill="#eef2ec" opacity="0.95"/>
<path d="M548.2,854.2 Q548.1,855.0 548.0,855.7 Q547.9,856.4 547.6,857.2 Q547.2,858.0 546.1,858.1 Q545.0,858.1 544.2,857.7 Q543.4,857.2 542.3,857.0 Q541.3,856.7 541.3,855.9 Q541.3,855.0 541.3,854.2 Q541.4,853.3 542.2,852.8 Q543.1,852.3 544.0,852.0 Q545.0,851.8 546.0,851.9 Q547.1,852.1 547.7,852.8 Q548.3,853.5 548.2,854.2Z" fill="#eef2ec" opacity="0.95"/>
<path d="M488.1,889.0 Q487.9,890.0 487.7,890.8 Q487.5,891.6 487.2,892.8 Q486.9,894.0 485.4,894.0 Q484.0,893.9 483.0,893.3 Q482.1,892.7 480.6,892.5 Q479.1,892.3 479.4,891.1 Q479.8,890.0 480.2,889.2 Q480.7,888.5 481.1,887.5 Q481.6,886.6 482.8,886.6 Q484.0,886.6 485.2,886.7 Q486.4,886.7 487.3,887.4 Q488.3,888.0 488.1,889.0Z" fill="#eef2ec" opacity="0.95"/>
<path d="M583.4,908.9 Q583.1,910.0 583.2,911.0 Q583.3,912.0 582.1,912.3 Q580.9,912.7 580.0,913.3 Q579.0,913.9 577.7,913.7 Q576.5,913.5 576.1,912.5 Q575.7,911.5 575.1,910.8 Q574.4,910.0 575.1,909.2 Q575.7,908.5 576.2,907.6 Q576.7,906.8 577.8,906.1 Q579.0,905.5 580.2,906.0 Q581.5,906.6 582.5,907.2 Q583.6,907.9 583.4,908.9Z" fill="#eef2ec" opacity="0.95"/>
<path d="M686.7,905.4 Q690.1,908.0 686.6,910.6 Q683.2,913.2 682.6,917.5 Q682.0,921.8 677.0,922.0 Q672.0,922.2 668.8,919.5 Q665.6,916.9 660.7,916.2 Q655.9,915.5 656.4,911.7 Q656.9,908.0 658.6,905.3 Q660.4,902.7 661.3,898.5 Q662.2,894.4 667.1,894.6 Q672.0,894.8 676.5,895.1 Q681.1,895.4 682.2,899.1 Q683.3,902.8 686.7,905.4Z" fill="#eef2ec" opacity="0.95"/>
<path d="M846.9,687.0 Q847.5,688.0 846.4,688.7 Q845.2,689.5 844.7,690.2 Q844.1,690.9 843.0,691.2 Q842.0,691.6 841.1,691.1 Q840.2,690.5 838.9,690.3 Q837.6,690.0 837.8,689.0 Q837.9,688.0 838.1,687.1 Q838.3,686.3 838.8,685.3 Q839.4,684.3 840.7,684.3 Q842.0,684.3 843.4,684.2 Q844.9,684.0 845.6,685.0 Q846.4,686.0 846.9,687.0Z" fill="#eef2ec" opacity="0.95"/>
<path d="M801.0,828.3 Q801.7,829.0 801.2,829.8 Q800.6,830.7 800.0,831.5 Q799.4,832.3 798.2,832.6 Q797.0,832.8 796.2,832.1 Q795.3,831.3 794.2,831.1 Q793.1,830.8 793.2,829.9 Q793.3,829.0 793.2,828.1 Q793.1,827.2 793.9,826.6 Q794.8,826.0 795.9,825.6 Q797.0,825.3 797.8,826.0 Q798.6,826.8 799.4,827.1 Q800.2,827.5 801.0,828.3Z" fill="#eef2ec" opacity="0.95"/>
<path d="M830.8,796.3 Q831.5,797.0 831.4,798.0 Q831.2,799.0 830.2,799.5 Q829.2,800.1 828.1,799.8 Q827.0,799.5 825.9,799.7 Q824.9,799.9 824.6,799.1 Q824.2,798.3 823.6,797.6 Q822.9,797.0 823.0,796.1 Q823.0,795.2 824.2,795.0 Q825.4,794.8 826.2,793.9 Q827.0,793.1 828.1,793.6 Q829.2,794.0 829.6,794.8 Q830.0,795.6 830.8,796.3Z" fill="#eef2ec" opacity="0.95"/>
<path d="M395.0,909.8 Q394.7,911.0 394.7,912.1 Q394.7,913.2 394.0,914.4 Q393.3,915.5 391.6,915.6 Q390.0,915.7 388.9,914.9 Q387.7,914.1 387.0,913.4 Q386.3,912.7 385.9,911.9 Q385.5,911.0 385.0,909.7 Q384.4,908.4 386.0,908.1 Q387.6,907.7 388.8,907.1 Q390.0,906.4 391.3,907.0 Q392.5,907.5 393.9,908.0 Q395.3,908.6 395.0,909.8Z" fill="#eef2ec" opacity="0.95"/>
<path d="M779.7,893.9 Q779.5,895.0 779.0,895.8 Q778.4,896.6 778.1,897.8 Q777.9,898.9 776.4,898.9 Q775.0,898.9 773.7,898.8 Q772.4,898.6 771.3,897.9 Q770.2,897.2 769.7,896.1 Q769.1,895.0 770.5,894.3 Q771.9,893.5 772.3,892.7 Q772.8,891.9 773.9,891.9 Q775.0,891.8 776.2,891.8 Q777.4,891.7 778.7,892.2 Q779.9,892.7 779.7,893.9Z" fill="#eef2ec" opacity="0.95"/>
<path d="M705.1,890.2 Q705.6,891.0 704.6,891.6 Q703.7,892.2 703.2,892.8 Q702.7,893.3 701.8,894.0 Q701.0,894.7 699.9,894.4 Q698.8,894.0 698.3,893.3 Q697.7,892.5 697.4,891.8 Q697.0,891.0 697.6,890.3 Q698.1,889.7 698.4,888.7 Q698.7,887.8 699.8,887.9 Q701.0,888.0 702.2,887.8 Q703.4,887.7 704.0,888.5 Q704.7,889.3 705.1,890.2Z" fill="#eef2ec" opacity="0.95"/>
<path d="M705.5,851.4 Q705.5,852.0 705.5,852.6 Q705.5,853.2 705.0,853.5 Q704.4,853.9 703.7,854.5 Q703.0,855.1 702.2,854.7 Q701.3,854.3 701.1,853.7 Q700.9,853.0 700.6,852.5 Q700.3,852.0 700.4,851.4 Q700.4,850.8 700.9,850.3 Q701.4,849.8 702.2,849.6 Q703.0,849.3 703.8,849.6 Q704.5,849.9 705.0,850.4 Q705.6,850.8 705.5,851.4Z" fill="#eef2ec" opacity="0.95"/>
<g fill="none" stroke="#f9fbf7" stroke-width="1.25" stroke-linecap="round" opacity="0.95">
<path d="M382.1,809.8 Q378.5,816.0 369.5,816.9"/>
<path d="M693.1,826.2 Q692.0,818.9 686.4,812.9"/>
<path d="M637.0,708.6 Q627.7,704.3 616.5,710.1 Q605.3,710.9 596.8,699.1 Q585.4,692.7 570.6,700.6"/>
<path d="M481.8,761.0 Q474.4,757.4 465.5,758.6"/>
<path d="M789.4,903.4 Q794.6,901.3 800.3,906.4 Q808.1,908.5 816.4,907.5 Q829.0,908.4 840.7,900.3"/>
<path d="M829.4,853.3 Q825.3,860.2 824.9,868.7 Q821.0,882.1 817.8,895.6 Q815.7,903.6 819.5,912.1"/>
<path d="M500.2,736.4 Q508.7,746.2 512.1,759.5"/>
<path d="M588.0,751.3 Q589.4,741.2 580.8,732.1"/>
<path d="M750.4,705.4 Q738.4,699.6 724.3,699.3 Q711.3,696.3 699.3,690.4 Q693.9,688.4 687.9,691.6"/>
<path d="M678.5,940.0 Q673.0,946.9 662.1,946.6 Q656.9,948.7 651.8,951.0 Q639.8,956.2 632.1,968.3"/>
<path d="M511.9,632.4 Q515.5,638.5 525.2,637.4 Q530.3,639.3 535.6,640.5"/>
<path d="M839.7,715.2 Q832.9,715.1 826.9,710.7"/>
<path d="M876.0,816.7 Q883.1,820.6 892.1,816.6 Q898.8,816.5 905.5,817.1 Q918.4,817.6 930.5,823.2"/>
<path d="M855.2,692.7 Q852.8,697.3 850.5,702.1 Q845.8,711.5 834.3,715.4 Q829.2,719.6 821.4,717.7"/>
<path d="M789.9,652.8 Q779.3,643.8 766.5,637.9 Q755.1,630.6 754.0,614.0"/>
<path d="M392.3,726.1 Q389.2,721.6 387.6,716.1 Q382.6,705.7 373.0,698.3"/>
<path d="M427.2,674.8 Q432.4,681.2 439.8,685.5"/>
<path d="M556.6,842.0 Q563.8,833.8 573.2,827.9"/>
<path d="M549.7,861.4 Q549.3,870.7 560.3,876.7 Q566.5,885.6 568.6,896.7 Q572.5,905.9 570.7,916.5"/>
<path d="M667.6,740.3 Q661.5,739.1 656.7,746.2 Q648.6,750.7 638.9,751.4"/>
<path d="M778.5,740.6 Q787.1,740.1 792.6,750.4"/>
<path d="M862.5,824.3 Q869.3,830.9 875.1,838.5 Q879.5,843.5 876.6,851.7 Q877.5,859.9 885.9,865.4"/>
<path d="M470.6,860.3 Q479.1,855.7 485.4,847.7"/>
<path d="M745.2,765.9 Q752.0,757.6 754.9,746.8"/>
<path d="M792.1,771.8 Q789.4,777.1 783.6,780.2"/>
<path d="M412.8,830.9 Q408.2,834.1 403.2,836.5 Q395.7,840.8 385.8,835.4"/>
<path d="M866.6,825.1 Q867.4,830.2 865.2,835.3 Q864.3,842.5 866.3,849.7"/>
<path d="M547.2,760.8 Q546.0,767.6 543.4,774.1 Q541.7,780.3 534.4,783.2"/>
<path d="M827.5,710.3 Q827.6,702.7 824.2,695.6 Q822.1,686.4 830.1,677.8"/>
<path d="M462.4,842.8 Q456.7,838.8 448.6,843.0 Q436.5,843.2 427.2,831.9"/>
<path d="M758.5,639.7 Q759.5,633.2 766.7,629.2 Q775.2,618.2 776.9,603.3"/>
<path d="M391.6,660.6 Q397.7,659.6 402.8,655.3"/>
<path d="M638.4,737.2 Q638.4,726.0 626.4,718.4 Q622.1,711.6 626.7,702.3"/>
<path d="M748.6,906.3 Q758.8,905.0 766.2,895.7"/>
<path d="M702.7,629.9 Q707.4,635.2 713.1,639.6 Q717.4,643.6 724.9,640.5 Q738.8,641.6 752.3,635.5"/>
<path d="M832.3,663.4 Q822.6,664.2 818.5,677.1"/>
<path d="M494.5,797.4 Q488.2,790.3 476.3,791.9 Q468.5,789.5 460.7,787.2 Q447.9,783.4 434.2,785.2"/>
<path d="M490.0,933.6 Q494.2,929.8 500.2,928.7 Q504.8,926.5 507.5,921.6 Q517.4,912.0 517.5,896.0"/>
<path d="M403.7,876.9 Q408.6,875.3 413.9,876.5 Q424.7,876.0 435.6,877.0"/>
<path d="M662.2,845.2 Q673.6,843.9 684.4,839.5 Q692.0,837.5 699.1,833.9 Q711.9,829.0 722.9,820.1"/>
<path d="M577.9,755.8 Q581.0,759.7 582.9,764.5 Q589.5,776.1 603.2,781.8 Q611.2,788.7 621.3,792.5"/>
<path d="M503.2,688.3 Q512.2,696.3 509.6,711.5 Q511.1,716.8 509.6,722.4 Q509.6,730.4 506.3,737.9"/>
<path d="M662.3,725.7 Q671.4,724.0 680.8,726.2"/>
<path d="M621.8,734.2 Q615.0,732.2 609.2,727.8 Q598.7,722.4 586.8,720.8"/>
<path d="M746.5,750.5 Q735.7,748.7 728.7,737.8 Q724.1,734.5 723.0,728.1 Q717.4,718.6 724.3,706.2"/>
<path d="M773.9,708.7 Q778.3,701.8 784.4,696.2 Q790.9,688.4 804.3,692.7 Q809.9,691.7 815.3,694.7"/>
<path d="M566.9,690.3 Q570.4,696.6 578.6,698.5 Q588.8,705.5 599.8,711.4"/>
<path d="M709.5,889.0 Q715.7,884.1 719.8,877.0"/>
<path d="M824.6,761.6 Q818.5,765.4 818.3,774.6 Q814.7,782.0 805.7,785.2 Q798.3,791.4 791.7,798.6"/>
<path d="M424.4,751.2 Q430.4,751.1 436.2,753.2 Q447.7,755.2 458.5,746.7 Q467.7,743.9 469.2,730.6"/>
<path d="M446.3,780.9 Q441.9,773.9 434.5,769.2 Q428.6,763.2 417.8,767.3 Q411.0,766.6 404.4,764.5"/>
<path d="M408.8,681.9 Q406.2,668.9 395.1,659.2 Q391.3,652.9 386.4,647.3"/>
<path d="M650.0,782.4 Q657.5,787.1 660.0,796.9"/>
<path d="M697.8,743.5 Q705.9,745.8 713.5,737.6 Q724.5,733.3 736.0,744.3"/>
<path d="M601.4,818.8 Q601.0,827.2 598.8,835.5"/>
<path d="M856.2,686.1 Q866.3,684.3 870.6,671.6 Q875.4,666.7 883.7,667.7 Q889.2,666.1 894.4,663.6"/>
<path d="M581.9,757.3 Q592.8,752.7 593.3,736.6 Q598.3,727.5 602.3,718.0 Q606.3,709.7 616.9,707.0"/>
<path d="M593.1,776.1 Q599.7,770.6 599.3,760.1 Q603.6,749.1 592.0,737.7"/>
<path d="M498.9,688.9 Q491.5,686.9 483.6,688.5 Q475.2,688.3 466.7,689.1 Q460.9,689.2 456.2,684.0"/>
<path d="M673.6,629.9 Q663.6,630.1 657.5,642.0"/>
<path d="M730.4,851.8 Q720.5,852.9 711.0,847.1"/>
<path d="M814.3,669.7 Q803.6,676.8 802.2,692.4"/>
<path d="M551.5,790.3 Q559.0,790.6 565.8,786.0 Q573.3,783.7 578.4,776.7 Q588.6,769.1 600.0,763.1"/>
<path d="M642.7,759.1 Q649.5,761.3 657.0,761.3 Q665.8,762.6 674.4,765.0"/>
<path d="M536.4,667.0 Q538.6,675.1 541.6,682.9 Q544.5,691.9 545.3,701.4 Q547.0,709.5 541.7,717.5"/>
<path d="M482.3,918.3 Q471.5,914.3 460.5,925.9"/>
<path d="M413.9,928.5 Q417.2,921.8 425.4,918.9"/>
<path d="M529.4,851.7 Q532.8,841.7 533.6,831.1 Q535.8,819.8 528.6,808.5 Q527.1,801.9 520.2,797.8"/>
<path d="M821.8,664.7 Q829.8,674.1 837.9,683.3"/>
<path d="M386.3,855.1 Q385.6,845.6 389.4,836.4"/>
<path d="M727.3,719.1 Q728.8,725.2 723.1,731.0"/>
<path d="M485.8,657.2 Q497.0,664.8 509.8,669.7"/>
<path d="M719.0,707.2 Q726.3,702.3 736.6,705.8 Q749.8,704.8 758.7,691.0 Q764.1,687.4 768.9,683.1"/>
<path d="M770.2,904.0 Q773.1,894.4 766.5,884.3 Q764.0,871.3 755.4,860.3 Q750.1,848.9 735.3,845.1"/>
<path d="M791.5,937.7 Q785.3,942.7 785.2,952.2"/>
<path d="M529.2,833.9 Q526.0,825.3 528.6,815.5"/>
<path d="M600.8,841.6 Q605.4,845.6 603.9,853.4 Q607.5,866.9 594.2,879.5"/>
<path d="M650.6,717.8 Q643.1,728.4 626.4,727.3 Q620.1,729.8 615.9,735.9"/>
<path d="M535.3,811.3 Q535.6,805.0 531.8,799.2"/>
<path d="M839.8,894.7 Q840.6,899.9 839.9,905.3 Q839.9,919.0 845.9,932.0"/>
<path d="M866.3,834.4 Q874.1,837.0 881.9,839.1 Q889.6,841.3 897.8,840.6"/>
<path d="M435.6,890.4 Q439.2,881.1 431.7,870.7 Q429.7,861.0 435.8,851.2 Q437.9,841.1 439.0,830.8"/>
<path d="M396.4,788.8 Q405.6,795.2 416.3,799.4 Q427.3,805.3 441.2,796.9 Q452.7,795.7 463.7,802.1"/>
<path d="M564.5,836.4 Q575.1,843.2 576.1,858.7"/>
<path d="M626.8,672.5 Q631.8,675.9 636.9,679.2"/>
<path d="M655.6,662.5 Q645.7,664.5 642.1,677.6"/>
<path d="M511.2,927.9 Q509.8,934.5 515.4,940.9 Q517.6,947.7 512.4,954.9 Q510.5,964.2 499.4,968.7"/>
<path d="M386.8,925.9 Q376.7,926.7 366.9,922.1 Q360.0,920.7 354.8,914.8 Q349.3,911.5 342.3,912.1"/>
<path d="M395.0,750.5 Q384.9,749.3 376.4,758.7 Q366.4,763.1 361.3,774.6"/>
<path d="M504.7,872.2 Q492.3,871.2 483.1,884.4"/>
<path d="M553.0,656.3 Q554.5,662.7 559.3,667.8 Q562.0,672.9 560.8,679.3 Q562.2,689.5 572.1,696.6"/>
<path d="M542.8,922.1 Q544.1,916.5 541.3,910.6"/>
<path d="M757.6,841.5 Q764.6,851.2 778.1,853.7 Q789.6,860.5 796.8,872.8"/>
<path d="M744.6,646.3 Q750.0,646.4 755.3,646.9 Q763.3,647.3 768.9,638.6"/>
<path d="M690.4,645.0 Q698.8,635.6 713.3,634.3"/>
<path d="M426.7,853.9 Q419.5,863.8 412.6,873.9"/>
<path d="M777.4,783.3 Q776.6,796.7 761.7,805.1 Q754.8,814.6 740.9,815.9 Q730.1,821.5 718.0,824.4"/>
<path d="M603.6,888.2 Q605.3,880.7 615.3,878.2 Q622.7,871.8 634.8,876.6 Q640.8,876.0 645.0,883.1"/>
<path d="M785.3,705.4 Q789.1,699.3 794.3,694.2"/>
<path d="M668.8,904.9 Q657.2,899.0 643.1,909.0 Q632.3,910.8 622.2,915.7 Q612.0,918.9 601.0,914.0"/>
<path d="M555.8,745.9 Q566.1,742.4 577.3,749.0"/>
<path d="M554.2,814.8 Q556.8,810.4 559.3,806.0 Q561.9,801.6 559.1,795.8"/>
<path d="M798.2,758.6 Q793.2,754.7 788.7,750.2 Q784.4,746.4 779.1,744.0"/>
<path d="M619.4,635.4 Q616.0,641.1 607.6,641.6 Q599.9,645.7 591.9,648.9"/>
<path d="M503.7,694.0 Q495.1,685.1 480.5,685.3 Q473.5,682.7 472.4,672.8"/>
<path d="M566.0,696.5 Q575.9,688.3 591.8,695.3 Q599.6,694.9 606.7,690.7 Q619.0,686.8 632.3,693.4"/>
<path d="M692.0,898.3 Q701.6,896.4 704.1,883.0 Q708.2,877.9 716.8,879.5"/>
<path d="M613.6,883.2 Q613.5,894.3 599.6,900.4 Q592.2,909.4 579.6,912.2"/>
<path d="M722.7,668.1 Q722.9,657.1 710.8,649.6 Q705.0,640.7 697.9,632.7"/>
<path d="M873.2,740.4 Q867.3,730.9 874.5,718.1 Q875.1,705.8 861.4,697.3 Q855.6,688.1 849.6,679.0"/>
<path d="M735.9,630.7 Q740.2,626.5 742.9,620.8 Q747.4,614.4 752.1,608.2 Q755.8,603.1 761.1,599.2"/>
<path d="M615.8,927.5 Q602.3,929.0 591.2,916.0"/>
<path d="M453.6,812.4 Q441.2,805.9 425.6,811.7"/>
<path d="M683.2,938.3 Q677.9,932.8 673.3,926.7"/>
<path d="M596.1,937.0 Q589.7,928.4 583.1,919.9 Q574.8,908.9 562.6,901.5 Q552.8,892.8 539.4,889.3"/>
<path d="M809.1,783.1 Q816.8,785.6 825.0,779.9 Q834.5,778.0 843.3,786.1 Q849.4,788.2 853.5,794.1"/>
<path d="M467.1,724.5 Q480.0,729.1 487.7,742.7 Q493.8,748.2 496.6,756.6"/>
<path d="M519.5,909.3 Q511.7,910.6 504.2,913.1 Q498.4,914.6 494.2,919.7 Q487.1,924.4 481.6,931.2"/>
<path d="M876.2,710.1 Q878.8,718.8 872.9,727.9 Q871.0,738.5 861.3,746.0 Q857.0,752.6 859.9,761.6"/>
<path d="M769.7,775.0 Q761.5,771.9 752.7,778.9 Q744.4,780.8 735.7,777.5 Q727.1,776.8 720.8,769.1"/>
<path d="M818.3,663.6 Q813.2,665.3 807.7,662.1"/>
<path d="M671.3,737.8 Q684.2,732.7 698.6,742.3 Q711.3,744.4 722.3,732.2"/>
<path d="M690.0,889.2 Q693.1,884.1 693.1,877.6 Q695.9,867.2 710.2,864.4 Q718.7,857.9 730.0,856.3"/>
<path d="M778.7,750.8 Q790.4,746.2 800.5,738.5 Q808.8,733.8 814.5,725.6 Q823.9,717.0 837.6,714.6"/>
<path d="M453.0,859.7 Q447.7,862.9 444.1,868.3 Q440.1,872.2 437.0,877.0"/>
<path d="M638.1,896.8 Q633.7,889.0 624.0,885.9 Q614.8,878.9 612.5,865.9 Q607.0,856.2 612.0,843.6"/>
<path d="M447.3,695.9 Q452.9,688.2 465.0,688.7"/>
<path d="M842.8,862.0 Q846.4,854.4 845.3,845.3 Q846.9,834.6 858.8,828.4 Q864.1,821.8 874.7,822.8"/>
<path d="M746.4,871.1 Q740.5,866.6 732.0,867.3 Q725.2,865.5 718.6,871.6 Q708.1,875.0 697.8,864.0"/>
<path d="M792.9,739.7 Q791.0,734.0 796.7,728.2"/>
<path d="M491.7,771.0 Q492.3,763.6 484.1,758.1 Q479.6,750.3 476.3,741.9"/>
<path d="M795.6,637.6 Q800.0,629.4 799.3,619.3"/>
<path d="M862.1,932.7 Q855.3,931.4 850.7,924.8"/>
<path d="M486.8,892.8 Q491.0,882.1 486.4,869.9 Q486.3,863.4 491.7,857.9 Q494.7,851.2 495.2,843.5"/>
<path d="M871.5,712.3 Q878.8,716.9 885.9,721.7"/>
<path d="M682.8,697.2 Q691.0,688.1 706.9,692.7"/>
<path d="M549.0,939.6 Q558.2,944.0 568.1,946.6 Q581.0,951.4 585.5,967.9"/>
<path d="M697.7,685.8 Q691.3,680.1 682.0,678.8"/>
<path d="M479.2,859.8 Q467.3,858.6 458.2,848.1 Q448.0,842.4 443.5,829.9"/>
<path d="M482.8,866.0 Q489.0,856.0 504.5,857.1 Q516.8,852.0 531.0,855.0"/>
<path d="M750.3,645.0 Q753.7,657.0 752.3,670.0"/>
<path d="M764.6,796.5 Q758.6,794.2 753.6,789.8 Q741.7,782.5 726.8,782.2 Q721.6,780.7 716.2,784.1"/>
<path d="M562.3,911.8 Q566.3,900.5 565.2,888.0 Q566.8,875.4 563.5,862.7"/>
<path d="M835.3,780.0 Q845.8,786.1 856.8,791.4 Q867.7,797.2 881.5,790.6"/>
<path d="M435.2,804.7 Q427.0,804.3 419.4,800.4"/>
<path d="M862.8,686.6 Q861.2,695.4 854.1,702.2 Q850.1,709.7 840.5,712.2 Q830.3,719.6 830.1,735.1"/>
<path d="M385.6,693.3 Q381.1,690.6 379.8,684.6 Q372.0,673.2 354.4,674.0"/>
<path d="M781.7,690.1 Q770.3,684.4 756.9,684.2"/>
<path d="M667.7,772.3 Q668.3,767.3 664.8,762.6"/>
<path d="M562.0,905.9 Q573.0,913.7 585.2,919.6"/>
<path d="M674.2,918.6 Q669.5,907.7 667.0,896.0 Q663.5,885.1 671.5,873.5"/>
<path d="M466.2,833.0 Q473.6,824.2 480.2,814.9"/>
<path d="M833.4,818.3 Q841.0,825.3 854.0,821.0 Q861.1,821.9 863.8,831.4"/>
<path d="M497.0,750.1 Q499.6,739.7 508.7,732.2"/>
<path d="M398.8,654.9 Q404.0,654.1 406.3,647.4"/>
<path d="M503.1,921.9 Q504.1,927.2 504.3,932.6 Q505.4,942.8 509.0,952.5 Q510.2,957.7 511.9,962.8"/>
<path d="M626.1,930.1 Q626.4,924.3 621.1,919.5 Q616.9,910.7 615.7,900.7 Q613.6,893.1 611.6,885.4"/>
<path d="M872.7,746.7 Q881.9,738.0 892.4,730.8"/>
<path d="M802.8,785.3 Q794.0,777.0 786.0,767.8 Q778.1,759.6 774.4,748.3 Q768.9,739.3 762.5,730.9"/>
<path d="M725.1,803.6 Q728.3,815.7 720.7,828.2"/>
<path d="M615.3,664.0 Q608.8,655.0 616.4,641.9"/>
<path d="M695.1,652.5 Q689.3,651.8 684.6,647.5 Q673.2,642.1 669.5,627.2 Q666.0,622.4 660.9,619.1"/>
<path d="M535.2,868.2 Q541.3,876.4 550.8,881.3 Q556.0,885.6 564.2,882.7 Q569.6,883.3 574.3,886.6"/>
<path d="M775.0,693.2 Q765.0,702.0 753.2,708.6 Q747.6,712.6 739.9,712.1"/>
<path d="M767.0,650.5 Q778.4,652.0 786.9,639.0"/>
<path d="M730.3,896.1 Q724.3,898.9 717.3,893.7"/>
<path d="M606.9,850.4 Q606.7,863.0 622.1,870.6 Q627.1,877.3 637.3,878.0"/>
<path d="M463.1,927.0 Q456.5,917.1 460.2,903.4 Q458.6,889.6 466.7,876.3"/>
<path d="M520.5,704.7 Q513.6,708.9 506.2,712.2"/>
<path d="M563.1,885.3 Q576.1,885.5 586.8,896.0"/>
<path d="M653.5,658.4 Q657.5,650.6 657.8,641.3 Q659.2,635.9 654.7,630.6"/>
<path d="M615.3,692.5 Q624.6,695.7 626.8,708.5 Q631.9,715.5 627.6,725.8 Q628.0,737.0 614.7,744.1"/>
<path d="M425.3,692.7 Q422.6,703.9 422.1,715.4"/>
<path d="M440.1,927.3 Q431.5,920.1 427.3,909.0 Q420.6,899.4 421.4,886.3 Q419.5,879.3 413.3,874.3"/>
<path d="M393.3,845.5 Q396.0,855.7 394.1,866.6 Q394.5,878.2 406.1,886.6"/>
<path d="M414.8,646.7 Q410.5,650.2 411.7,657.4"/>
<path d="M386.5,740.3 Q393.7,749.3 396.9,760.8"/>
<path d="M642.3,905.0 Q648.1,901.9 648.8,893.5 Q652.6,886.8 654.6,879.2"/>
<path d="M734.8,766.9 Q733.1,754.3 729.9,741.9"/>
<path d="M545.5,690.7 Q541.0,694.6 540.2,701.4"/>
<path d="M560.0,732.0 Q556.0,728.0 548.9,729.7"/>
<path d="M782.7,836.1 Q780.2,842.2 784.2,849.2 Q784.8,855.1 777.9,859.2"/>
<path d="M576.6,833.1 Q571.6,830.7 565.6,831.4"/>
<path d="M517.5,921.9 Q525.1,918.7 533.9,920.4 Q540.2,919.9 545.8,924.3"/>
<path d="M508.8,741.8 Q496.1,740.0 489.5,724.9"/>
<path d="M464.6,867.7 Q471.0,864.8 473.8,857.1"/>
<path d="M492.0,747.6 Q483.4,757.3 482.0,771.6 Q480.1,776.3 483.7,781.6 Q485.1,789.9 489.5,797.4"/>
<path d="M524.4,775.8 Q515.3,776.5 506.6,771.8"/>
<path d="M427.4,662.6 Q414.3,664.3 401.7,668.6"/>
<path d="M410.3,685.9 Q409.4,695.0 398.3,699.8 Q391.7,707.4 396.0,719.7"/>
<path d="M493.8,862.4 Q488.2,860.1 487.5,852.2 Q482.3,844.0 472.0,840.4"/>
<path d="M467.1,900.8 Q469.2,909.9 472.2,918.7"/>
<path d="M867.2,875.4 Q874.5,883.3 887.8,881.0 Q895.1,883.0 899.6,890.4"/>
<path d="M414.2,849.4 Q407.6,850.4 405.3,859.3 Q398.1,867.4 390.5,875.2"/>
<path d="M391.6,775.0 Q391.0,764.2 398.5,754.5 Q401.9,744.0 394.5,732.9 Q393.0,724.7 388.9,717.3"/>
<path d="M836.7,727.7 Q847.2,730.5 856.1,737.7 Q866.1,742.8 878.2,733.1"/>
<path d="M615.6,855.9 Q608.4,858.3 601.3,850.7"/>
<path d="M812.1,722.1 Q806.8,734.5 805.0,748.1"/>
<path d="M729.4,629.0 Q734.7,627.2 739.2,623.6"/>
<path d="M819.3,861.8 Q814.3,852.5 802.9,848.4"/>
<path d="M809.3,689.4 Q816.7,689.4 821.0,698.6 Q830.3,705.8 844.6,698.7"/>
<path d="M470.6,756.8 Q468.5,748.7 459.4,744.3 Q451.1,735.0 434.8,740.8 Q424.4,739.4 414.2,745.0"/>
<path d="M613.3,804.2 Q611.6,797.1 611.1,789.7"/>
<path d="M520.3,757.7 Q525.6,754.4 528.9,748.7 Q537.0,740.1 535.7,726.1 Q538.2,717.7 530.5,709.3"/>
<path d="M801.8,877.0 Q801.6,888.0 790.8,896.0 Q784.0,907.8 785.4,922.7 Q782.7,935.9 783.5,949.5"/>
<path d="M405.6,916.8 Q416.0,924.8 431.9,918.2"/>
<path d="M767.8,680.9 Q774.1,688.3 771.9,700.0"/>
<path d="M795.4,833.4 Q786.4,832.7 777.5,832.0"/>
<path d="M652.7,841.9 Q643.4,851.8 644.1,867.8 Q642.3,873.2 635.3,875.1 Q627.5,881.5 626.9,893.5"/>
<path d="M736.1,706.6 Q737.3,720.1 747.3,731.4 Q752.4,742.7 750.8,755.9"/>
<path d="M408.5,842.7 Q411.3,854.5 427.9,857.4 Q435.3,863.0 439.5,871.9"/>
<path d="M744.9,831.6 Q750.0,842.5 762.4,848.2 Q768.9,854.3 765.5,865.7"/>
<path d="M485.9,755.5 Q492.8,753.8 500.0,756.8 Q508.2,757.5 515.7,761.9 Q527.0,765.6 539.0,757.0"/>
<path d="M493.8,693.6 Q492.9,703.1 482.4,709.0"/>
<path d="M696.8,831.2 Q683.6,833.8 670.0,833.4 Q661.8,834.1 653.9,830.1"/>
<path d="M604.6,681.0 Q593.6,682.2 583.3,674.9"/>
<path d="M582.3,662.4 Q573.7,653.3 569.0,641.1 Q563.4,632.1 563.3,620.5"/>
<path d="M877.6,687.6 Q878.7,676.8 869.8,667.4 Q867.8,662.2 865.1,657.3"/>
<path d="M722.6,869.6 Q732.5,872.5 743.0,873.0"/>
<path d="M668.3,634.3 Q670.0,628.8 667.8,622.7"/>
<path d="M468.6,680.7 Q472.8,677.7 472.7,671.2"/>
<path d="M861.3,934.4 Q864.6,939.0 869.8,941.9 Q875.5,946.9 877.1,955.3"/>
<path d="M830.4,731.2 Q836.2,728.4 837.0,720.2 Q842.5,711.1 852.5,705.6"/>
<path d="M514.7,877.6 Q513.4,868.1 503.4,862.3 Q497.2,853.9 504.4,841.4"/>
<path d="M794.5,864.7 Q798.9,857.5 807.3,853.6 Q812.7,849.0 820.9,849.6"/>
<path d="M792.8,655.1 Q782.4,648.8 771.2,644.0"/>
<path d="M620.7,884.9 Q614.1,878.4 606.3,873.3 Q602.3,870.0 603.4,863.4 Q601.5,856.8 606.1,849.8"/>
<path d="M615.0,864.5 Q605.2,864.4 596.4,858.3 Q591.4,856.6 587.9,852.0 Q582.3,847.9 574.7,847.3"/>
<path d="M709.1,845.5 Q704.0,841.0 696.8,839.5"/>
<path d="M720.9,708.2 Q725.9,715.8 734.1,720.9"/>
</g>
<g fill="none" stroke="#fbfcf8" stroke-width="2.8" stroke-linecap="round" stroke-linejoin="round" opacity="0.9">
<polyline points="434.4,624.0 440.2,645.7 444.6,660.2 447.5,676.1 453.2,686.2 456.9,697.8 461.9,705.0"/>
<polyline points="378.0,673.2 406.9,677.5 425.7,683.3 450.3,686.2"/>
<polyline points="450.3,680.4 479.3,684.8 485.1,696.3 492.3,713.7 508.2,718.1 522.7,722.4 537.2,728.2 568.0,732.5"/>
<polyline points="459.0,710.8 456.1,725.3 453.2,734.0 446.0,754.2 438.8,775.9 435.9,784.0"/>
<polyline points="453.2,739.8 479.3,741.2 498.1,754.2 515.5,765.8 529.9,784.0"/>
<polyline points="490.9,705.0 501.0,692.0 512.6,671.7"/>
<polyline points="541.5,624.0 538.6,650.0 544.4,671.7 553.1,693.5 554.5,725.3 557.4,744.1 568.0,768.7"/>
<polyline points="525.6,722.4 534.3,707.9 551.6,693.5"/>
<polyline points="482.2,739.8 492.3,725.3 493.8,716.6"/>
<polyline points="654.8,705.0 660.6,722.4 663.5,739.8 663.5,747.0"/>
<polyline points="568.0,760.0 582.5,765.8 596.9,784.0"/>
<polyline points="701.1,765.8 705.5,784.0"/>
<polyline points="435.9,784.0 444.6,804.3 443.1,821.6 440.2,831.7 433.0,840.4 424.3,847.7 415.6,865.0 406.9,882.4 395.4,894.0 383.8,904.1"/>
<polyline points="378.0,824.5 398.3,820.2 412.7,810.0 433.0,804.3"/>
<polyline points="378.0,891.1 386.7,898.3 399.7,901.2 415.6,902.7 428.6,899.8 450.3,899.8 469.2,891.1 490.9,896.9 508.2,902.7 522.7,911.3 537.2,911.3 568.0,911.3"/>
<polyline points="529.9,784.0 537.2,794.1 551.6,817.3 553.1,831.7 563.2,841.9 568.0,856.3"/>
<polyline points="378.0,882.4 386.7,888.2 395.4,899.8 399.7,907.0"/>
<polyline points="596.9,784.0 611.4,797.0 628.8,807.2 637.5,821.6 643.2,841.9 646.1,860.7 649.0,873.7 657.7,882.4 669.3,896.9"/>
<polyline points="631.7,873.7 640.3,865.0 649.0,862.1 660.6,865.0 669.3,867.9 688.1,866.5 706.9,869.4 718.5,878.1 725.7,894.0 724.3,914.2 714.1,925.8 698.2,933.0 678.0,935.9 654.8,934.5 633.1,922.9 628.8,908.4 630.2,885.3 631.7,873.7"/>
<polyline points="568.0,899.8 582.5,904.1 604.2,902.7 625.9,904.1 649.0,904.1 669.3,905.5"/>
<polyline points="568.0,859.2 589.7,873.7 611.4,885.3 628.8,891.1 643.2,894.0 657.7,896.9"/>
<polyline points="669.3,810.0 666.4,827.4 664.9,849.1 663.5,865.0"/>
<polyline points="712.7,885.3 727.2,882.4 741.6,876.6 758.0,873.7"/>
<polyline points="568.0,943.2 596.9,935.9 618.6,925.8 640.3,917.1 660.6,911.3"/>
<polyline points="695.3,911.3 712.7,922.9 727.2,928.7 741.6,934.5 758.0,937.4"/>
<polyline points="706.9,784.0 712.7,795.6 718.5,812.9 717.0,831.7 709.8,849.1"/>
<polyline points="700.0,762.8 705.8,768.6 704.3,784.0"/>
<polyline points="707.9,919.9 730.6,912.3 753.2,916.9 791.0,928.9 821.2,935.0 851.4,932.0"/>
<polyline points="380.9,628.3 393.9,638.5 406.9,671.7 412.7,699.2 415.6,716.6 433.0,736.9 438.8,754.2"/>
<polyline points="395.4,624.0 393.9,639.9 378.0,660.2"/>
<polyline points="378.0,710.8 399.7,713.7 415.6,718.1 428.6,735.4"/>
<polyline points="378.0,751.3 406.9,744.1 430.1,734.0 450.3,725.3 461.9,719.5"/>
<polyline points="417.1,624.0 421.4,635.6 411.3,652.9 404.0,671.7"/>
<polyline points="404.0,671.7 415.6,687.7 438.8,697.8 457.6,705.0"/>
<polyline points="378.0,765.8 398.3,770.1 421.4,771.6 435.9,767.2 450.3,768.7 470.6,777.4"/>
<polyline points="459.0,624.0 488.0,637.0 505.3,641.4 522.7,650.0 537.2,652.9"/>
<polyline points="485.1,637.0 488.0,667.4 479.3,681.9 477.8,705.0"/>
<polyline points="502.4,624.0 502.4,645.7 496.7,667.4 490.9,679.0"/>
<polyline points="511.1,624.0 501.0,652.9 483.6,676.1"/>
<polyline points="529.9,624.0 522.7,638.5 519.8,652.9 525.6,663.1 537.2,664.5"/>
<polyline points="522.7,663.1 512.6,674.6 515.5,696.3 521.2,710.8 516.9,732.5 505.3,754.2 496.7,784.0"/>
<polyline points="470.6,718.1 470.6,739.8 472.1,754.2 464.8,768.7 472.1,784.0"/>
<polyline points="461.9,718.1 446.0,734.0 433.0,736.9 424.3,754.2 411.3,784.0"/>
<polyline points="433.0,768.7 428.6,784.0"/>
<polyline points="519.8,729.6 537.2,747.0 551.6,754.2 568.0,762.9"/>
<polyline points="522.7,736.9 529.9,754.2 534.3,784.0"/>
<polyline points="498.1,684.8 522.7,699.2 541.5,716.6 558.9,728.2"/>
<polyline points="464.8,624.0 467.7,641.4 479.3,660.2 482.2,681.9"/>
<polyline points="454.7,647.2 464.8,661.6 477.8,674.6"/>
<polyline points="437.3,624.0 441.7,647.2 450.3,661.6 459.0,667.4 470.6,663.1 485.1,648.6 505.3,641.4"/>
<polyline points="544.4,671.7 522.7,684.8 508.2,699.2"/>
<polyline points="558.9,687.7 568.0,693.5"/>
<polyline points="548.7,645.7 568.0,638.5"/>
<polyline points="557.4,693.5 568.0,705.0"/>
<polyline points="386.7,684.8 406.9,705.0 421.4,716.6"/>
<polyline points="378.0,734.0 395.4,731.1 414.2,728.2 430.1,735.4"/>
<polyline points="443.1,693.5 447.5,705.0 443.1,725.3 438.8,739.8"/>
<polyline points="573.8,624.0 570.9,645.7 568.0,667.4"/>
<polyline points="568.0,650.0 588.3,661.6 604.2,667.4 608.5,679.0 607.1,705.0 607.1,725.3 611.4,739.8 608.5,754.2 611.4,784.0"/>
<polyline points="568.0,694.9 585.4,713.7 599.8,725.3 617.2,734.0 643.2,739.8 663.5,745.5 678.0,754.2 698.2,765.8 725.7,767.2 758.0,757.1"/>
<polyline points="568.0,731.1 596.9,728.2 608.5,728.2 628.8,710.8 649.0,707.9 669.3,699.2"/>
<polyline points="628.8,680.4 649.0,699.2 660.6,705.0 678.0,699.2 698.2,692.0 711.2,683.3 727.2,671.7 741.6,664.5"/>
<polyline points="611.4,635.6 618.6,652.9 623.0,679.0 630.2,692.0"/>
<polyline points="615.7,624.0 618.6,638.5 628.8,632.7 643.2,632.7 669.3,631.2 678.0,624.0"/>
<polyline points="643.2,624.0 647.6,652.9 653.4,674.6 660.6,696.3"/>
<polyline points="678.0,624.0 680.9,638.5 675.1,661.6 676.5,676.1 669.3,684.8"/>
<polyline points="686.7,624.0 682.3,635.6 678.0,652.9"/>
<polyline points="675.1,654.4 692.4,652.9 706.9,661.6 709.8,681.9 724.3,696.3 741.6,696.3 758.0,705.0"/>
<polyline points="708.4,661.6 734.4,666.0 758.0,652.9"/>
<polyline points="740.2,666.0 737.3,696.3 735.8,710.8 724.3,728.2 719.9,747.0 712.7,768.7"/>
<polyline points="698.2,693.5 701.1,707.9 698.2,722.4 683.8,734.0 669.3,748.4"/>
<polyline points="698.2,722.4 706.9,734.0 721.4,736.9 735.8,751.3 738.7,761.5"/>
<polyline points="640.3,713.7 637.5,728.2 625.9,742.7 623.0,754.2 631.7,775.9 634.6,784.0"/>
<polyline points="662.1,747.0 656.3,768.7 651.9,784.0"/>
<polyline points="586.8,710.8 585.4,739.8 576.7,784.0"/>
<polyline points="568.0,751.3 591.2,762.9 611.4,775.9 625.9,784.0"/>
<polyline points="568.0,632.7 589.7,638.5 611.4,635.6"/>
<polyline points="378.0,792.7 406.9,795.6 421.4,789.8 438.8,784.0"/>
<polyline points="406.9,795.6 409.8,810.0 415.6,827.4 425.7,844.8"/>
<polyline points="392.5,823.1 414.2,830.3 438.8,830.3 464.8,833.2 479.3,839.0 501.0,844.8 522.7,849.1 537.2,847.7"/>
<polyline points="461.9,784.0 467.7,792.7 464.8,802.8 453.2,810.0 444.6,815.8"/>
<polyline points="466.3,792.7 479.3,801.4 490.9,810.0 508.2,815.8 522.7,827.4 537.2,841.9"/>
<polyline points="503.9,784.0 493.8,807.2 490.9,824.5 479.3,839.0 464.8,856.3 459.0,865.0 444.6,873.7 433.0,885.3 421.4,894.0 417.1,911.3 420.0,928.7 418.5,944.0"/>
<polyline points="433.0,833.2 450.3,844.8 464.8,859.2 479.3,876.6 488.0,888.2"/>
<polyline points="421.4,853.5 438.8,859.2 464.8,862.1"/>
<polyline points="453.2,867.9 447.5,888.2 441.7,911.3 440.2,944.0"/>
<polyline points="488.0,888.2 493.8,914.2 496.7,944.0"/>
<polyline points="502.4,876.6 522.7,867.9 537.2,862.1"/>
<polyline points="544.4,856.3 540.1,885.3 537.2,914.2 534.3,944.0"/>
<polyline points="378.0,865.0 392.5,859.2 404.0,853.5"/>
<polyline points="378.0,914.2 389.6,911.3 398.3,899.8"/>
<polyline points="378.0,804.3 392.5,798.5 406.9,795.6"/>
<polyline points="537.2,847.7 548.7,841.9 558.9,830.3 568.0,827.4"/>
<polyline points="548.7,856.3 568.0,859.2"/>
<polyline points="551.6,810.0 568.0,804.3"/>
<polyline points="566.1,784.0 558.9,792.7 557.4,804.3"/>
<polyline points="508.2,921.5 522.7,928.7 537.2,928.7"/>
<polyline points="568.0,810.0 589.7,808.6 611.4,805.7 628.8,799.9 637.5,792.7 657.7,784.0"/>
<polyline points="657.7,784.0 669.3,812.9 669.3,824.5"/>
<polyline points="669.3,812.9 691.0,798.5 712.7,792.7 727.2,784.0"/>
<polyline points="686.7,798.5 688.1,827.4 692.4,836.1 689.5,850.6 688.1,865.0"/>
<polyline points="611.4,805.7 608.5,827.4 604.2,841.9 596.9,849.1 596.9,867.9 604.2,885.3 599.8,899.8 602.7,928.7 599.8,944.0"/>
<polyline points="568.0,831.7 596.9,841.9 611.4,850.6 631.7,856.3 643.2,863.6"/>
<polyline points="568.0,862.1 596.9,849.1"/>
<polyline points="667.8,827.4 691.0,830.3 712.7,830.3 734.4,830.3 758.0,833.2"/>
<polyline points="643.2,831.7 633.1,844.8 628.8,865.0"/>
<polyline points="667.8,850.6 683.8,846.2 705.5,847.7 727.2,847.7 741.6,844.8"/>
<polyline points="738.7,862.1 748.9,865.0 758.0,870.8"/>
<polyline points="712.7,859.2 727.2,862.1 741.6,859.2"/>
<polyline points="748.9,834.6 748.9,849.1 753.2,865.0 748.9,878.1"/>
<polyline points="623.0,795.6 624.4,807.2 611.4,821.6"/>
<polyline points="568.0,918.6 582.5,917.1 602.7,911.3 618.6,908.4 640.3,909.9"/>
<polyline points="575.2,921.5 579.6,944.0"/>
<polyline points="640.3,909.9 643.2,928.7 640.3,944.0"/>
<polyline points="669.3,907.0 672.2,921.5 669.3,944.0"/>
<polyline points="695.3,911.3 698.2,928.7 695.3,944.0"/>
<polyline points="709.8,885.3 721.4,894.0 741.6,896.9 758.0,899.8"/>
<polyline points="721.4,922.9 727.2,944.0"/>
<polyline points="630.2,870.8 618.6,876.6 604.2,888.2"/>
<polyline points="649.0,885.3 660.6,894.0 678.0,899.8 698.2,905.5"/>
<polyline points="678.0,876.6 680.9,894.0 678.0,914.2 680.9,928.7"/>
<polyline points="654.8,914.2 662.1,928.7 657.7,944.0"/>
<polyline points="700.0,655.8 714.5,660.2 737.6,664.5 763.6,654.4 786.8,647.1 808.5,637.0 825.8,631.2 843.2,629.8"/>
<polyline points="737.6,664.5 740.5,681.9 734.7,710.8 728.9,739.7 721.7,761.4"/>
<polyline points="740.5,667.4 757.9,677.5 772.3,681.9 801.2,677.5 822.9,679.0 838.8,684.7"/>
<polyline points="789.7,647.1 778.1,663.1 772.3,681.9 773.8,699.2 768.0,710.8 755.0,736.8 747.7,754.2"/>
<polyline points="838.8,686.2 847.5,689.1 873.6,686.2 880.8,687.6"/>
<polyline points="838.8,687.6 838.8,710.8 830.2,739.7 820.0,768.6 815.7,784.0"/>
<polyline points="844.6,690.5 866.3,713.7 888.0,718.0 896.7,716.6"/>
<polyline points="893.8,716.6 885.1,725.2 866.3,739.7 851.9,746.9 830.2,754.2"/>
<polyline points="779.5,725.2 801.2,731.0 825.8,738.3 837.4,739.7"/>
<polyline points="700.0,684.7 711.6,681.9 728.9,699.2 753.5,715.1 768.0,710.8"/>
<polyline points="776.7,728.1 776.7,746.9 778.1,768.6 775.2,784.0"/>
<polyline points="776.7,761.4 801.2,754.2 822.9,748.4 844.6,744.0 866.3,739.7"/>
<polyline points="778.1,761.4 801.2,762.8 815.7,768.6 830.2,784.0"/>
<polyline points="888.0,696.3 876.5,710.8 866.3,713.7"/>
<polyline points="888.0,744.0 873.6,754.2 866.3,768.6 859.1,784.0"/>
<polyline points="700.0,710.8 717.4,713.7 723.1,725.2 717.4,739.7"/>
<polyline points="844.6,638.5 859.1,652.9 880.8,661.6"/>
<polyline points="667.2,784.0 662.6,814.2 667.2,832.3 665.7,856.5"/>
<polyline points="670.2,811.2 689.8,799.1 703.4,791.5 718.5,784.0"/>
<polyline points="689.8,799.1 691.3,829.3 689.8,859.5 688.3,877.6"/>
<polyline points="724.6,833.8 736.6,832.3 757.8,830.8 780.4,829.3 797.0,829.3 813.6,832.3 827.2,829.3 839.3,817.2"/>
<polyline points="775.9,784.0 772.9,806.6 760.8,821.7 754.8,833.8 748.7,851.9 748.7,874.6 754.8,882.1"/>
<polyline points="821.2,784.0 824.2,799.1 818.2,814.2 798.5,821.7 784.9,830.8 768.3,844.4 754.8,853.5 730.6,862.5 709.5,868.6"/>
<polyline points="806.1,829.3 821.2,836.8 828.7,847.4"/>
<polyline points="788.0,844.4 781.9,853.5 772.9,862.5"/>
<polyline points="709.5,868.6 723.0,877.6 730.6,889.7 745.7,886.7 760.8,883.7 791.0,880.6"/>
<polyline points="715.5,898.8 736.6,897.2 753.2,898.8 775.9,898.8"/>
<polyline points="821.2,784.0 836.3,802.1 848.4,814.2"/>
<polyline points="724.6,912.3 727.6,935.0"/>
<polyline points="733.6,919.9 760.8,916.9 775.9,919.9"/>
<polyline points="775.9,913.9 783.4,919.9 778.9,935.0"/>
<polyline points="806.1,916.9 821.2,928.9 836.3,933.5 851.4,932.0"/>
</g>
<g fill="none" stroke="#efc14b" stroke-width="1.35" stroke-linecap="round" stroke-linejoin="round">
<polyline points="380.9,628.3 393.9,638.5 406.9,671.7 412.7,699.2 415.6,716.6 433.0,736.9 438.8,754.2"/>
<polyline points="395.4,624.0 393.9,639.9 378.0,660.2"/>
<polyline points="378.0,710.8 399.7,713.7 415.6,718.1 428.6,735.4"/>
<polyline points="378.0,751.3 406.9,744.1 430.1,734.0 450.3,725.3 461.9,719.5"/>
<polyline points="417.1,624.0 421.4,635.6 411.3,652.9 404.0,671.7"/>
<polyline points="404.0,671.7 415.6,687.7 438.8,697.8 457.6,705.0"/>
<polyline points="378.0,765.8 398.3,770.1 421.4,771.6 435.9,767.2 450.3,768.7 470.6,777.4"/>
<polyline points="459.0,624.0 488.0,637.0 505.3,641.4 522.7,650.0 537.2,652.9"/>
<polyline points="485.1,637.0 488.0,667.4 479.3,681.9 477.8,705.0"/>
<polyline points="502.4,624.0 502.4,645.7 496.7,667.4 490.9,679.0"/>
<polyline points="511.1,624.0 501.0,652.9 483.6,676.1"/>
<polyline points="529.9,624.0 522.7,638.5 519.8,652.9 525.6,663.1 537.2,664.5"/>
<polyline points="522.7,663.1 512.6,674.6 515.5,696.3 521.2,710.8 516.9,732.5 505.3,754.2 496.7,784.0"/>
<polyline points="470.6,718.1 470.6,739.8 472.1,754.2 464.8,768.7 472.1,784.0"/>
<polyline points="461.9,718.1 446.0,734.0 433.0,736.9 424.3,754.2 411.3,784.0"/>
<polyline points="433.0,768.7 428.6,784.0"/>
<polyline points="519.8,729.6 537.2,747.0 551.6,754.2 568.0,762.9"/>
<polyline points="522.7,736.9 529.9,754.2 534.3,784.0"/>
<polyline points="498.1,684.8 522.7,699.2 541.5,716.6 558.9,728.2"/>
<polyline points="464.8,624.0 467.7,641.4 479.3,660.2 482.2,681.9"/>
<polyline points="454.7,647.2 464.8,661.6 477.8,674.6"/>
<polyline points="437.3,624.0 441.7,647.2 450.3,661.6 459.0,667.4 470.6,663.1 485.1,648.6 505.3,641.4"/>
<polyline points="544.4,671.7 522.7,684.8 508.2,699.2"/>
<polyline points="558.9,687.7 568.0,693.5"/>
<polyline points="548.7,645.7 568.0,638.5"/>
<polyline points="557.4,693.5 568.0,705.0"/>
<polyline points="386.7,684.8 406.9,705.0 421.4,716.6"/>
<polyline points="378.0,734.0 395.4,731.1 414.2,728.2 430.1,735.4"/>
<polyline points="443.1,693.5 447.5,705.0 443.1,725.3 438.8,739.8"/>
<polyline points="573.8,624.0 570.9,645.7 568.0,667.4"/>
<polyline points="568.0,650.0 588.3,661.6 604.2,667.4 608.5,679.0 607.1,705.0 607.1,725.3 611.4,739.8 608.5,754.2 611.4,784.0"/>
<polyline points="568.0,694.9 585.4,713.7 599.8,725.3 617.2,734.0 643.2,739.8 663.5,745.5 678.0,754.2 698.2,765.8 725.7,767.2 758.0,757.1"/>
<polyline points="568.0,731.1 596.9,728.2 608.5,728.2 628.8,710.8 649.0,707.9 669.3,699.2"/>
<polyline points="628.8,680.4 649.0,699.2 660.6,705.0 678.0,699.2 698.2,692.0 711.2,683.3 727.2,671.7 741.6,664.5"/>
<polyline points="611.4,635.6 618.6,652.9 623.0,679.0 630.2,692.0"/>
<polyline points="615.7,624.0 618.6,638.5 628.8,632.7 643.2,632.7 669.3,631.2 678.0,624.0"/>
<polyline points="643.2,624.0 647.6,652.9 653.4,674.6 660.6,696.3"/>
<polyline points="678.0,624.0 680.9,638.5 675.1,661.6 676.5,676.1 669.3,684.8"/>
<polyline points="686.7,624.0 682.3,635.6 678.0,652.9"/>
<polyline points="675.1,654.4 692.4,652.9 706.9,661.6 709.8,681.9 724.3,696.3 741.6,696.3 758.0,705.0"/>
<polyline points="708.4,661.6 734.4,666.0 758.0,652.9"/>
<polyline points="740.2,666.0 737.3,696.3 735.8,710.8 724.3,728.2 719.9,747.0 712.7,768.7"/>
<polyline points="698.2,693.5 701.1,707.9 698.2,722.4 683.8,734.0 669.3,748.4"/>
<polyline points="698.2,722.4 706.9,734.0 721.4,736.9 735.8,751.3 738.7,761.5"/>
<polyline points="640.3,713.7 637.5,728.2 625.9,742.7 623.0,754.2 631.7,775.9 634.6,784.0"/>
<polyline points="662.1,747.0 656.3,768.7 651.9,784.0"/>
<polyline points="586.8,710.8 585.4,739.8 576.7,784.0"/>
<polyline points="568.0,751.3 591.2,762.9 611.4,775.9 625.9,784.0"/>
<polyline points="568.0,632.7 589.7,638.5 611.4,635.6"/>
<polyline points="378.0,792.7 406.9,795.6 421.4,789.8 438.8,784.0"/>
<polyline points="406.9,795.6 409.8,810.0 415.6,827.4 425.7,844.8"/>
<polyline points="392.5,823.1 414.2,830.3 438.8,830.3 464.8,833.2 479.3,839.0 501.0,844.8 522.7,849.1 537.2,847.7"/>
<polyline points="461.9,784.0 467.7,792.7 464.8,802.8 453.2,810.0 444.6,815.8"/>
<polyline points="466.3,792.7 479.3,801.4 490.9,810.0 508.2,815.8 522.7,827.4 537.2,841.9"/>
<polyline points="503.9,784.0 493.8,807.2 490.9,824.5 479.3,839.0 464.8,856.3 459.0,865.0 444.6,873.7 433.0,885.3 421.4,894.0 417.1,911.3 420.0,928.7 418.5,944.0"/>
<polyline points="433.0,833.2 450.3,844.8 464.8,859.2 479.3,876.6 488.0,888.2"/>
<polyline points="421.4,853.5 438.8,859.2 464.8,862.1"/>
<polyline points="453.2,867.9 447.5,888.2 441.7,911.3 440.2,944.0"/>
<polyline points="488.0,888.2 493.8,914.2 496.7,944.0"/>
<polyline points="502.4,876.6 522.7,867.9 537.2,862.1"/>
<polyline points="544.4,856.3 540.1,885.3 537.2,914.2 534.3,944.0"/>
<polyline points="378.0,865.0 392.5,859.2 404.0,853.5"/>
<polyline points="378.0,914.2 389.6,911.3 398.3,899.8"/>
<polyline points="378.0,804.3 392.5,798.5 406.9,795.6"/>
<polyline points="537.2,847.7 548.7,841.9 558.9,830.3 568.0,827.4"/>
<polyline points="548.7,856.3 568.0,859.2"/>
<polyline points="551.6,810.0 568.0,804.3"/>
<polyline points="566.1,784.0 558.9,792.7 557.4,804.3"/>
<polyline points="508.2,921.5 522.7,928.7 537.2,928.7"/>
<polyline points="568.0,810.0 589.7,808.6 611.4,805.7 628.8,799.9 637.5,792.7 657.7,784.0"/>
<polyline points="657.7,784.0 669.3,812.9 669.3,824.5"/>
<polyline points="669.3,812.9 691.0,798.5 712.7,792.7 727.2,784.0"/>
<polyline points="686.7,798.5 688.1,827.4 692.4,836.1 689.5,850.6 688.1,865.0"/>
<polyline points="611.4,805.7 608.5,827.4 604.2,841.9 596.9,849.1 596.9,867.9 604.2,885.3 599.8,899.8 602.7,928.7 599.8,944.0"/>
<polyline points="568.0,831.7 596.9,841.9 611.4,850.6 631.7,856.3 643.2,863.6"/>
<polyline points="568.0,862.1 596.9,849.1"/>
<polyline points="667.8,827.4 691.0,830.3 712.7,830.3 734.4,830.3 758.0,833.2"/>
<polyline points="643.2,831.7 633.1,844.8 628.8,865.0"/>
<polyline points="667.8,850.6 683.8,846.2 705.5,847.7 727.2,847.7 741.6,844.8"/>
<polyline points="738.7,862.1 748.9,865.0 758.0,870.8"/>
<polyline points="712.7,859.2 727.2,862.1 741.6,859.2"/>
<polyline points="748.9,834.6 748.9,849.1 753.2,865.0 748.9,878.1"/>
<polyline points="623.0,795.6 624.4,807.2 611.4,821.6"/>
<polyline points="568.0,918.6 582.5,917.1 602.7,911.3 618.6,908.4 640.3,909.9"/>
<polyline points="575.2,921.5 579.6,944.0"/>
<polyline points="640.3,909.9 643.2,928.7 640.3,944.0"/>
<polyline points="669.3,907.0 672.2,921.5 669.3,944.0"/>
<polyline points="695.3,911.3 698.2,928.7 695.3,944.0"/>
<polyline points="709.8,885.3 721.4,894.0 741.6,896.9 758.0,899.8"/>
<polyline points="721.4,922.9 727.2,944.0"/>
<polyline points="630.2,870.8 618.6,876.6 604.2,888.2"/>
<polyline points="649.0,885.3 660.6,894.0 678.0,899.8 698.2,905.5"/>
<polyline points="678.0,876.6 680.9,894.0 678.0,914.2 680.9,928.7"/>
<polyline points="654.8,914.2 662.1,928.7 657.7,944.0"/>
<polyline points="700.0,655.8 714.5,660.2 737.6,664.5 763.6,654.4 786.8,647.1 808.5,637.0 825.8,631.2 843.2,629.8"/>
<polyline points="737.6,664.5 740.5,681.9 734.7,710.8 728.9,739.7 721.7,761.4"/>
<polyline points="740.5,667.4 757.9,677.5 772.3,681.9 801.2,677.5 822.9,679.0 838.8,684.7"/>
<polyline points="789.7,647.1 778.1,663.1 772.3,681.9 773.8,699.2 768.0,710.8 755.0,736.8 747.7,754.2"/>
<polyline points="838.8,686.2 847.5,689.1 873.6,686.2 880.8,687.6"/>
<polyline points="838.8,687.6 838.8,710.8 830.2,739.7 820.0,768.6 815.7,784.0"/>
<polyline points="844.6,690.5 866.3,713.7 888.0,718.0 896.7,716.6"/>
<polyline points="893.8,716.6 885.1,725.2 866.3,739.7 851.9,746.9 830.2,754.2"/>
<polyline points="779.5,725.2 801.2,731.0 825.8,738.3 837.4,739.7"/>
<polyline points="700.0,684.7 711.6,681.9 728.9,699.2 753.5,715.1 768.0,710.8"/>
<polyline points="776.7,728.1 776.7,746.9 778.1,768.6 775.2,784.0"/>
<polyline points="776.7,761.4 801.2,754.2 822.9,748.4 844.6,744.0 866.3,739.7"/>
<polyline points="778.1,761.4 801.2,762.8 815.7,768.6 830.2,784.0"/>
<polyline points="888.0,696.3 876.5,710.8 866.3,713.7"/>
<polyline points="888.0,744.0 873.6,754.2 866.3,768.6 859.1,784.0"/>
<polyline points="700.0,710.8 717.4,713.7 723.1,725.2 717.4,739.7"/>
<polyline points="844.6,638.5 859.1,652.9 880.8,661.6"/>
<polyline points="667.2,784.0 662.6,814.2 667.2,832.3 665.7,856.5"/>
<polyline points="670.2,811.2 689.8,799.1 703.4,791.5 718.5,784.0"/>
<polyline points="689.8,799.1 691.3,829.3 689.8,859.5 688.3,877.6"/>
<polyline points="724.6,833.8 736.6,832.3 757.8,830.8 780.4,829.3 797.0,829.3 813.6,832.3 827.2,829.3 839.3,817.2"/>
<polyline points="775.9,784.0 772.9,806.6 760.8,821.7 754.8,833.8 748.7,851.9 748.7,874.6 754.8,882.1"/>
<polyline points="821.2,784.0 824.2,799.1 818.2,814.2 798.5,821.7 784.9,830.8 768.3,844.4 754.8,853.5 730.6,862.5 709.5,868.6"/>
<polyline points="806.1,829.3 821.2,836.8 828.7,847.4"/>
<polyline points="788.0,844.4 781.9,853.5 772.9,862.5"/>
<polyline points="709.5,868.6 723.0,877.6 730.6,889.7 745.7,886.7 760.8,883.7 791.0,880.6"/>
<polyline points="715.5,898.8 736.6,897.2 753.2,898.8 775.9,898.8"/>
<polyline points="821.2,784.0 836.3,802.1 848.4,814.2"/>
<polyline points="724.6,912.3 727.6,935.0"/>
<polyline points="733.6,919.9 760.8,916.9 775.9,919.9"/>
<polyline points="775.9,913.9 783.4,919.9 778.9,935.0"/>
<polyline points="806.1,916.9 821.2,928.9 836.3,933.5 851.4,932.0"/>
</g>
<g fill="none" stroke="#fbfcf8" stroke-width="2.6" stroke-linecap="round" opacity="0.85"><path d="M382.7,627.9 Q395.5,632.8 404.1,630.6"/><path d="M382.7,627.9 Q382.4,643.6 382.6,653.9"/><path d="M382.6,653.9 Q398.5,650.9 412.9,647.7"/><path d="M382.6,653.9 Q395.3,661.1 408.7,673.6"/><path d="M377.1,673.4 Q390.9,685.3 410.0,700.6"/><path d="M375.9,740.8 Q390.4,726.9 401.7,713.8"/><path d="M373.2,771.1 Q374.8,778.0 374.4,785.5"/><path d="M382.9,846.9 Q386.7,852.6 382.3,864.6"/><path d="M382.9,846.9 Q394.5,858.3 407.8,870.6"/><path d="M375.6,882.2 Q376.6,899.0 381.9,915.0"/><path d="M404.1,630.6 Q410.2,635.3 412.9,647.7"/><path d="M412.9,647.7 Q426.2,647.2 431.5,652.2"/><path d="M412.9,647.7 Q415.8,657.6 408.7,673.6"/><path d="M408.7,673.6 Q414.9,677.9 427.7,678.1"/><path d="M408.7,673.6 Q413.5,690.2 410.0,700.6"/><path d="M408.7,673.6 Q419.5,688.4 432.9,695.5"/><path d="M410.0,700.6 Q406.3,710.2 401.7,713.8"/><path d="M410.0,700.6 Q415.6,686.2 427.7,678.1"/><path d="M411.4,800.1 Q413.5,807.9 406.0,810.0"/><path d="M407.8,870.6 Q422.8,861.4 429.0,860.6"/><path d="M407.9,886.5 Q409.7,892.6 405.4,907.3"/><path d="M405.4,907.3 Q421.7,906.6 435.7,911.3"/><path d="M405.4,907.3 Q410.2,923.4 408.6,940.5"/><path d="M438.4,627.7 Q449.8,624.8 456.8,630.9"/><path d="M431.5,652.2 Q437.1,667.3 448.5,673.2"/><path d="M427.7,678.1 Q440.8,687.0 462.7,700.1"/><path d="M428.5,775.3 Q450.4,773.7 463.3,771.9"/><path d="M428.5,775.3 Q427.4,780.0 430.2,793.8"/><path d="M428.5,775.3 Q443.6,783.5 459.9,785.9"/><path d="M425.3,894.0 Q441.5,897.0 448.7,897.0"/><path d="M425.3,894.0 Q431.2,906.6 435.7,911.3"/><path d="M435.7,911.3 Q441.7,911.6 452.1,910.1"/><path d="M457.2,653.8 Q457.6,662.9 448.5,673.2"/><path d="M462.7,700.1 Q479.2,697.3 487.9,698.1"/><path d="M465.6,722.8 Q480.2,727.9 490.4,726.1"/><path d="M465.6,722.8 Q460.5,732.7 453.6,748.7"/><path d="M453.6,748.7 Q474.4,747.0 485.6,737.8"/><path d="M463.3,771.9 Q476.0,771.3 490.0,763.7"/><path d="M459.9,785.9 Q452.4,795.3 448.0,812.7"/><path d="M448.0,812.7 Q463.6,811.0 483.1,814.2"/><path d="M448.0,812.7 Q463.1,805.3 476.7,789.9"/><path d="M454.2,845.6 Q465.1,839.3 481.9,837.9"/><path d="M452.6,857.6 Q469.6,860.3 478.3,868.4"/><path d="M452.6,857.6 Q454.4,876.4 448.7,897.0"/><path d="M448.7,897.0 Q469.9,888.9 486.1,881.9"/><path d="M448.7,897.0 Q466.7,900.9 490.1,907.8"/><path d="M486.2,677.1 Q497.8,683.4 515.2,680.7"/><path d="M487.9,698.1 Q504.3,701.3 517.0,696.5"/><path d="M487.9,698.1 Q495.7,711.4 508.3,725.0"/><path d="M490.4,726.1 Q502.5,729.3 508.3,725.0"/><path d="M485.6,737.8 Q499.3,738.3 515.1,748.7"/><path d="M485.6,737.8 Q486.6,753.0 490.0,763.7"/><path d="M490.0,763.7 Q493.7,758.7 506.5,762.0"/><path d="M490.0,763.7 Q481.3,779.8 476.7,789.9"/><path d="M476.7,789.9 Q490.8,799.5 502.1,799.2"/><path d="M476.7,789.9 Q482.7,806.2 483.1,814.2"/><path d="M479.8,941.4 Q483.5,955.9 489.4,968.3"/><path d="M489.4,968.3 Q499.2,963.0 516.0,962.2"/><path d="M515.7,625.7 Q518.9,619.9 531.7,622.5"/><path d="M515.2,680.7 Q526.8,679.2 532.3,679.6"/><path d="M517.0,696.5 Q524.9,705.3 542.1,714.1"/><path d="M508.3,725.0 Q520.5,719.7 536.8,705.0"/><path d="M502.1,799.2 Q505.3,803.6 516.3,809.4"/><path d="M506.7,842.8 Q507.4,848.6 509.0,857.8"/><path d="M509.0,857.8 Q512.4,872.9 515.5,891.2"/><path d="M515.5,891.2 Q508.6,899.4 505.6,912.6"/><path d="M516.0,962.2 Q526.1,959.9 535.3,964.9"/><path d="M531.7,622.5 Q540.4,628.1 553.8,629.7"/><path d="M529.8,793.7 Q545.6,783.3 569.8,769.2"/><path d="M542.7,819.5 Q554.7,811.1 565.5,809.2"/><path d="M536.2,864.4 Q536.7,869.6 536.2,881.4"/><path d="M536.2,864.4 Q556.1,874.3 568.2,883.6"/><path d="M529.3,933.7 Q545.6,936.4 567.8,930.8"/><path d="M553.8,629.7 Q562.8,634.8 562.9,641.9"/><path d="M558.6,680.1 Q574.2,675.4 590.9,676.4"/><path d="M558.6,680.1 Q562.7,681.1 565.3,691.5"/><path d="M563.5,714.2 Q560.5,732.2 559.5,742.2"/><path d="M559.5,742.2 Q566.0,748.0 580.8,744.0"/><path d="M569.8,769.2 Q567.6,782.9 569.5,792.9"/><path d="M569.8,769.2 Q580.1,782.0 590.4,794.7"/><path d="M569.8,769.2 Q572.8,759.1 580.8,744.0"/><path d="M569.5,792.9 Q565.3,800.3 565.5,809.2"/><path d="M567.7,842.7 Q574.6,840.7 589.3,833.9"/><path d="M558.8,870.3 Q577.0,867.0 591.9,869.8"/><path d="M568.2,883.6 Q584.6,886.8 594.3,883.6"/><path d="M568.2,883.6 Q559.7,895.2 552.3,915.4"/><path d="M568.2,883.6 Q584.0,901.1 592.1,913.6"/><path d="M552.3,915.4 Q569.5,910.9 592.1,913.6"/><path d="M552.3,915.4 Q559.2,921.5 567.8,930.8"/><path d="M567.8,930.8 Q578.8,931.6 582.2,942.2"/><path d="M567.8,930.8 Q567.9,941.6 562.2,953.9"/><path d="M562.2,953.9 Q575.6,958.4 582.2,955.8"/><path d="M594.2,654.6 Q604.4,646.8 617.0,642.8"/><path d="M581.9,696.4 Q596.5,699.4 607.9,702.4"/><path d="M581.9,696.4 Q599.4,685.1 612.3,674.5"/><path d="M580.8,744.0 Q595.9,736.6 611.6,721.2"/><path d="M590.4,794.7 Q584.4,800.9 582.2,812.5"/><path d="M591.9,869.8 Q597.4,854.8 607.1,836.5"/><path d="M594.3,883.6 Q607.7,892.3 617.0,896.9"/><path d="M592.1,913.6 Q597.7,918.6 608.1,918.9"/><path d="M619.7,632.6 Q628.3,629.8 638.0,619.3"/><path d="M612.3,674.5 Q622.7,662.1 640.6,643.0"/><path d="M607.9,702.4 Q629.9,703.7 645.1,701.3"/><path d="M607.9,702.4 Q620.4,691.3 635.3,671.7"/><path d="M611.6,721.2 Q616.0,732.6 612.8,737.0"/><path d="M619.6,774.9 Q627.1,776.0 638.5,769.1"/><path d="M619.6,774.9 Q624.0,782.0 620.2,793.9"/><path d="M611.5,814.1 Q606.1,827.4 607.1,836.5"/><path d="M613.8,863.5 Q629.6,861.7 643.2,862.4"/><path d="M613.8,863.5 Q617.3,875.4 617.0,896.9"/><path d="M617.0,896.9 Q610.8,910.3 608.1,918.9"/><path d="M608.1,918.9 Q624.4,903.5 642.7,894.4"/><path d="M610.4,936.0 Q632.0,931.9 645.0,937.8"/><path d="M609.6,963.2 Q631.7,951.7 645.0,937.8"/><path d="M638.0,619.3 Q650.3,619.2 664.6,625.1"/><path d="M635.3,671.7 Q639.4,684.4 645.1,701.3"/><path d="M645.1,701.3 Q646.6,713.9 640.7,720.6"/><path d="M640.7,720.6 Q651.2,712.4 669.4,713.1"/><path d="M635.0,745.3 Q638.7,758.6 638.5,769.1"/><path d="M638.5,769.1 Q657.1,771.6 668.2,767.4"/><path d="M639.0,788.7 Q648.4,801.8 660.0,821.8"/><path d="M636.3,815.1 Q646.4,821.8 660.0,821.8"/><path d="M636.3,815.1 Q637.5,827.6 631.3,834.6"/><path d="M631.3,834.6 Q634.8,848.5 643.2,862.4"/><path d="M631.3,834.6 Q651.6,851.1 667.7,861.6"/><path d="M642.7,894.4 Q647.1,905.7 641.6,912.4"/><path d="M641.6,912.4 Q659.0,918.6 673.6,914.9"/><path d="M664.6,625.1 Q669.2,641.1 668.8,651.9"/><path d="M658.8,699.4 Q678.8,683.3 698.9,666.9"/><path d="M669.4,713.1 Q673.9,727.2 682.3,749.8"/><path d="M668.4,747.0 Q672.3,756.3 668.2,767.4"/><path d="M668.4,747.0 Q678.1,757.2 683.2,774.0"/><path d="M668.2,767.4 Q672.2,770.9 683.2,774.0"/><path d="M661.9,794.1 Q670.8,787.7 683.2,774.0"/><path d="M658.8,841.8 Q674.5,841.5 690.9,848.0"/><path d="M667.7,861.6 Q665.2,881.6 658.4,895.5"/><path d="M667.7,861.6 Q677.4,853.4 690.9,848.0"/><path d="M658.4,895.5 Q669.5,897.2 685.8,892.8"/><path d="M673.6,914.9 Q673.9,924.8 670.5,936.1"/><path d="M696.3,646.2 Q701.2,657.3 698.9,666.9"/><path d="M683.2,774.0 Q703.9,776.2 719.3,772.3"/><path d="M693.3,785.2 Q699.8,804.3 698.0,813.6"/><path d="M693.3,785.2 Q704.3,782.9 719.3,772.3"/><path d="M698.0,813.6 Q702.2,811.1 713.4,810.3"/><path d="M698.0,813.6 Q693.2,831.7 690.9,848.0"/><path d="M684.5,910.0 Q694.5,911.9 709.9,908.2"/><path d="M710.7,702.4 Q727.6,704.1 746.1,703.4"/><path d="M719.3,772.3 Q717.1,779.6 711.2,787.0"/><path d="M711.2,787.0 Q729.9,790.6 745.2,799.5"/><path d="M713.4,810.3 Q710.7,821.8 710.9,833.6"/><path d="M711.0,888.4 Q728.0,892.8 745.4,891.6"/><path d="M709.9,908.2 Q712.1,926.0 714.4,944.1"/><path d="M742.7,665.4 Q755.7,671.2 776.6,676.2"/><path d="M745.8,768.1 Q760.6,767.5 771.9,766.3"/><path d="M745.8,768.1 Q753.5,781.5 768.6,794.3"/><path d="M741.9,857.4 Q761.3,860.6 777.9,860.4"/><path d="M776.9,702.5 Q767.9,717.7 766.5,724.3"/><path d="M763.4,743.1 Q765.0,752.0 771.9,766.3"/><path d="M771.9,766.3 Q781.4,771.4 791.3,769.1"/><path d="M777.6,811.6 Q788.7,795.4 798.7,785.1"/><path d="M777.9,860.4 Q789.9,860.5 796.9,864.0"/><path d="M770.1,965.8 Q782.1,946.9 792.6,929.6"/><path d="M792.1,626.2 Q800.9,624.9 813.2,621.1"/><path d="M792.1,626.2 Q791.3,641.4 795.8,656.2"/><path d="M794.9,702.3 Q786.2,711.7 786.8,719.8"/><path d="M798.7,785.1 Q808.5,795.8 824.6,800.3"/><path d="M813.2,621.1 Q827.8,614.8 838.5,618.3"/><path d="M824.5,723.4 Q824.5,730.5 817.0,747.3"/><path d="M849.6,773.1 Q863.3,776.2 868.7,769.3"/><path d="M875.7,720.7 Q870.7,728.4 873.5,740.1"/><path d="M981.6,958.4 Q992.6,960.0 998.7,960.3"/><path d="M1021.1,962.4 Q1042.4,966.6 1062.3,963.5"/><path d="M1062.1,619.0 Q1070.7,622.6 1076.7,618.9"/><path d="M1167.8,815.3 Q1159.4,831.1 1153.3,845.5"/></g>
<g fill="none" stroke="#f0c650" stroke-width="1.2" stroke-linecap="round"><path d="M382.7,627.9 Q395.5,632.8 404.1,630.6"/><path d="M382.7,627.9 Q382.4,643.6 382.6,653.9"/><path d="M382.6,653.9 Q398.5,650.9 412.9,647.7"/><path d="M382.6,653.9 Q395.3,661.1 408.7,673.6"/><path d="M377.1,673.4 Q390.9,685.3 410.0,700.6"/><path d="M375.9,740.8 Q390.4,726.9 401.7,713.8"/><path d="M373.2,771.1 Q374.8,778.0 374.4,785.5"/><path d="M382.9,846.9 Q386.7,852.6 382.3,864.6"/><path d="M382.9,846.9 Q394.5,858.3 407.8,870.6"/><path d="M375.6,882.2 Q376.6,899.0 381.9,915.0"/><path d="M404.1,630.6 Q410.2,635.3 412.9,647.7"/><path d="M412.9,647.7 Q426.2,647.2 431.5,652.2"/><path d="M412.9,647.7 Q415.8,657.6 408.7,673.6"/><path d="M408.7,673.6 Q414.9,677.9 427.7,678.1"/><path d="M408.7,673.6 Q413.5,690.2 410.0,700.6"/><path d="M408.7,673.6 Q419.5,688.4 432.9,695.5"/><path d="M410.0,700.6 Q406.3,710.2 401.7,713.8"/><path d="M410.0,700.6 Q415.6,686.2 427.7,678.1"/><path d="M411.4,800.1 Q413.5,807.9 406.0,810.0"/><path d="M407.8,870.6 Q422.8,861.4 429.0,860.6"/><path d="M407.9,886.5 Q409.7,892.6 405.4,907.3"/><path d="M405.4,907.3 Q421.7,906.6 435.7,911.3"/><path d="M405.4,907.3 Q410.2,923.4 408.6,940.5"/><path d="M438.4,627.7 Q449.8,624.8 456.8,630.9"/><path d="M431.5,652.2 Q437.1,667.3 448.5,673.2"/><path d="M427.7,678.1 Q440.8,687.0 462.7,700.1"/><path d="M428.5,775.3 Q450.4,773.7 463.3,771.9"/><path d="M428.5,775.3 Q427.4,780.0 430.2,793.8"/><path d="M428.5,775.3 Q443.6,783.5 459.9,785.9"/><path d="M425.3,894.0 Q441.5,897.0 448.7,897.0"/><path d="M425.3,894.0 Q431.2,906.6 435.7,911.3"/><path d="M435.7,911.3 Q441.7,911.6 452.1,910.1"/><path d="M457.2,653.8 Q457.6,662.9 448.5,673.2"/><path d="M462.7,700.1 Q479.2,697.3 487.9,698.1"/><path d="M465.6,722.8 Q480.2,727.9 490.4,726.1"/><path d="M465.6,722.8 Q460.5,732.7 453.6,748.7"/><path d="M453.6,748.7 Q474.4,747.0 485.6,737.8"/><path d="M463.3,771.9 Q476.0,771.3 490.0,763.7"/><path d="M459.9,785.9 Q452.4,795.3 448.0,812.7"/><path d="M448.0,812.7 Q463.6,811.0 483.1,814.2"/><path d="M448.0,812.7 Q463.1,805.3 476.7,789.9"/><path d="M454.2,845.6 Q465.1,839.3 481.9,837.9"/><path d="M452.6,857.6 Q469.6,860.3 478.3,868.4"/><path d="M452.6,857.6 Q454.4,876.4 448.7,897.0"/><path d="M448.7,897.0 Q469.9,888.9 486.1,881.9"/><path d="M448.7,897.0 Q466.7,900.9 490.1,907.8"/><path d="M486.2,677.1 Q497.8,683.4 515.2,680.7"/><path d="M487.9,698.1 Q504.3,701.3 517.0,696.5"/><path d="M487.9,698.1 Q495.7,711.4 508.3,725.0"/><path d="M490.4,726.1 Q502.5,729.3 508.3,725.0"/><path d="M485.6,737.8 Q499.3,738.3 515.1,748.7"/><path d="M485.6,737.8 Q486.6,753.0 490.0,763.7"/><path d="M490.0,763.7 Q493.7,758.7 506.5,762.0"/><path d="M490.0,763.7 Q481.3,779.8 476.7,789.9"/><path d="M476.7,789.9 Q490.8,799.5 502.1,799.2"/><path d="M476.7,789.9 Q482.7,806.2 483.1,814.2"/><path d="M479.8,941.4 Q483.5,955.9 489.4,968.3"/><path d="M489.4,968.3 Q499.2,963.0 516.0,962.2"/><path d="M515.7,625.7 Q518.9,619.9 531.7,622.5"/><path d="M515.2,680.7 Q526.8,679.2 532.3,679.6"/><path d="M517.0,696.5 Q524.9,705.3 542.1,714.1"/><path d="M508.3,725.0 Q520.5,719.7 536.8,705.0"/><path d="M502.1,799.2 Q505.3,803.6 516.3,809.4"/><path d="M506.7,842.8 Q507.4,848.6 509.0,857.8"/><path d="M509.0,857.8 Q512.4,872.9 515.5,891.2"/><path d="M515.5,891.2 Q508.6,899.4 505.6,912.6"/><path d="M516.0,962.2 Q526.1,959.9 535.3,964.9"/><path d="M531.7,622.5 Q540.4,628.1 553.8,629.7"/><path d="M529.8,793.7 Q545.6,783.3 569.8,769.2"/><path d="M542.7,819.5 Q554.7,811.1 565.5,809.2"/><path d="M536.2,864.4 Q536.7,869.6 536.2,881.4"/><path d="M536.2,864.4 Q556.1,874.3 568.2,883.6"/><path d="M529.3,933.7 Q545.6,936.4 567.8,930.8"/><path d="M553.8,629.7 Q562.8,634.8 562.9,641.9"/><path d="M558.6,680.1 Q574.2,675.4 590.9,676.4"/><path d="M558.6,680.1 Q562.7,681.1 565.3,691.5"/><path d="M563.5,714.2 Q560.5,732.2 559.5,742.2"/><path d="M559.5,742.2 Q566.0,748.0 580.8,744.0"/><path d="M569.8,769.2 Q567.6,782.9 569.5,792.9"/><path d="M569.8,769.2 Q580.1,782.0 590.4,794.7"/><path d="M569.8,769.2 Q572.8,759.1 580.8,744.0"/><path d="M569.5,792.9 Q565.3,800.3 565.5,809.2"/><path d="M567.7,842.7 Q574.6,840.7 589.3,833.9"/><path d="M558.8,870.3 Q577.0,867.0 591.9,869.8"/><path d="M568.2,883.6 Q584.6,886.8 594.3,883.6"/><path d="M568.2,883.6 Q559.7,895.2 552.3,915.4"/><path d="M568.2,883.6 Q584.0,901.1 592.1,913.6"/><path d="M552.3,915.4 Q569.5,910.9 592.1,913.6"/><path d="M552.3,915.4 Q559.2,921.5 567.8,930.8"/><path d="M567.8,930.8 Q578.8,931.6 582.2,942.2"/><path d="M567.8,930.8 Q567.9,941.6 562.2,953.9"/><path d="M562.2,953.9 Q575.6,958.4 582.2,955.8"/><path d="M594.2,654.6 Q604.4,646.8 617.0,642.8"/><path d="M581.9,696.4 Q596.5,699.4 607.9,702.4"/><path d="M581.9,696.4 Q599.4,685.1 612.3,674.5"/><path d="M580.8,744.0 Q595.9,736.6 611.6,721.2"/><path d="M590.4,794.7 Q584.4,800.9 582.2,812.5"/><path d="M591.9,869.8 Q597.4,854.8 607.1,836.5"/><path d="M594.3,883.6 Q607.7,892.3 617.0,896.9"/><path d="M592.1,913.6 Q597.7,918.6 608.1,918.9"/><path d="M619.7,632.6 Q628.3,629.8 638.0,619.3"/><path d="M612.3,674.5 Q622.7,662.1 640.6,643.0"/><path d="M607.9,702.4 Q629.9,703.7 645.1,701.3"/><path d="M607.9,702.4 Q620.4,691.3 635.3,671.7"/><path d="M611.6,721.2 Q616.0,732.6 612.8,737.0"/><path d="M619.6,774.9 Q627.1,776.0 638.5,769.1"/><path d="M619.6,774.9 Q624.0,782.0 620.2,793.9"/><path d="M611.5,814.1 Q606.1,827.4 607.1,836.5"/><path d="M613.8,863.5 Q629.6,861.7 643.2,862.4"/><path d="M613.8,863.5 Q617.3,875.4 617.0,896.9"/><path d="M617.0,896.9 Q610.8,910.3 608.1,918.9"/><path d="M608.1,918.9 Q624.4,903.5 642.7,894.4"/><path d="M610.4,936.0 Q632.0,931.9 645.0,937.8"/><path d="M609.6,963.2 Q631.7,951.7 645.0,937.8"/><path d="M638.0,619.3 Q650.3,619.2 664.6,625.1"/><path d="M635.3,671.7 Q639.4,684.4 645.1,701.3"/><path d="M645.1,701.3 Q646.6,713.9 640.7,720.6"/><path d="M640.7,720.6 Q651.2,712.4 669.4,713.1"/><path d="M635.0,745.3 Q638.7,758.6 638.5,769.1"/><path d="M638.5,769.1 Q657.1,771.6 668.2,767.4"/><path d="M639.0,788.7 Q648.4,801.8 660.0,821.8"/><path d="M636.3,815.1 Q646.4,821.8 660.0,821.8"/><path d="M636.3,815.1 Q637.5,827.6 631.3,834.6"/><path d="M631.3,834.6 Q634.8,848.5 643.2,862.4"/><path d="M631.3,834.6 Q651.6,851.1 667.7,861.6"/><path d="M642.7,894.4 Q647.1,905.7 641.6,912.4"/><path d="M641.6,912.4 Q659.0,918.6 673.6,914.9"/><path d="M664.6,625.1 Q669.2,641.1 668.8,651.9"/><path d="M658.8,699.4 Q678.8,683.3 698.9,666.9"/><path d="M669.4,713.1 Q673.9,727.2 682.3,749.8"/><path d="M668.4,747.0 Q672.3,756.3 668.2,767.4"/><path d="M668.4,747.0 Q678.1,757.2 683.2,774.0"/><path d="M668.2,767.4 Q672.2,770.9 683.2,774.0"/><path d="M661.9,794.1 Q670.8,787.7 683.2,774.0"/><path d="M658.8,841.8 Q674.5,841.5 690.9,848.0"/><path d="M667.7,861.6 Q665.2,881.6 658.4,895.5"/><path d="M667.7,861.6 Q677.4,853.4 690.9,848.0"/><path d="M658.4,895.5 Q669.5,897.2 685.8,892.8"/><path d="M673.6,914.9 Q673.9,924.8 670.5,936.1"/><path d="M696.3,646.2 Q701.2,657.3 698.9,666.9"/><path d="M683.2,774.0 Q703.9,776.2 719.3,772.3"/><path d="M693.3,785.2 Q699.8,804.3 698.0,813.6"/><path d="M693.3,785.2 Q704.3,782.9 719.3,772.3"/><path d="M698.0,813.6 Q702.2,811.1 713.4,810.3"/><path d="M698.0,813.6 Q693.2,831.7 690.9,848.0"/><path d="M684.5,910.0 Q694.5,911.9 709.9,908.2"/><path d="M710.7,702.4 Q727.6,704.1 746.1,703.4"/><path d="M719.3,772.3 Q717.1,779.6 711.2,787.0"/><path d="M711.2,787.0 Q729.9,790.6 745.2,799.5"/><path d="M713.4,810.3 Q710.7,821.8 710.9,833.6"/><path d="M711.0,888.4 Q728.0,892.8 745.4,891.6"/><path d="M709.9,908.2 Q712.1,926.0 714.4,944.1"/><path d="M742.7,665.4 Q755.7,671.2 776.6,676.2"/><path d="M745.8,768.1 Q760.6,767.5 771.9,766.3"/><path d="M745.8,768.1 Q753.5,781.5 768.6,794.3"/><path d="M741.9,857.4 Q761.3,860.6 777.9,860.4"/><path d="M776.9,702.5 Q767.9,717.7 766.5,724.3"/><path d="M763.4,743.1 Q765.0,752.0 771.9,766.3"/><path d="M771.9,766.3 Q781.4,771.4 791.3,769.1"/><path d="M777.6,811.6 Q788.7,795.4 798.7,785.1"/><path d="M777.9,860.4 Q789.9,860.5 796.9,864.0"/><path d="M770.1,965.8 Q782.1,946.9 792.6,929.6"/><path d="M792.1,626.2 Q800.9,624.9 813.2,621.1"/><path d="M792.1,626.2 Q791.3,641.4 795.8,656.2"/><path d="M794.9,702.3 Q786.2,711.7 786.8,719.8"/><path d="M798.7,785.1 Q808.5,795.8 824.6,800.3"/><path d="M813.2,621.1 Q827.8,614.8 838.5,618.3"/><path d="M824.5,723.4 Q824.5,730.5 817.0,747.3"/><path d="M849.6,773.1 Q863.3,776.2 868.7,769.3"/><path d="M875.7,720.7 Q870.7,728.4 873.5,740.1"/><path d="M981.6,958.4 Q992.6,960.0 998.7,960.3"/><path d="M1021.1,962.4 Q1042.4,966.6 1062.3,963.5"/><path d="M1062.1,619.0 Q1070.7,622.6 1076.7,618.9"/><path d="M1167.8,815.3 Q1159.4,831.1 1153.3,845.5"/></g>
<path d="M703.0,900.1 Q706.7,903.0 704.1,906.3 Q701.5,909.7 698.1,911.9 Q694.8,914.1 691.2,916.2 Q687.7,918.3 682.7,919.2 Q677.8,920.0 673.9,917.6 Q670.0,915.2 668.9,911.9 Q667.7,908.5 665.6,905.8 Q663.6,903.0 664.0,899.7 Q664.5,896.3 668.2,894.5 Q671.9,892.6 674.8,889.1 Q677.7,885.7 682.6,887.1 Q687.4,888.5 691.7,889.6 Q696.1,890.7 697.6,893.9 Q699.2,897.1 703.0,900.1Z" fill="#eef1ec" opacity="0.9"/>
<g fill="none" stroke="#f0c650" stroke-width="1.1"><path d="M683,903 L694.2,902.4"/><path d="M683,903 L701.1,915.0"/><path d="M683,903 L690.1,911.2"/><path d="M683,903 L684.8,917.1"/><path d="M683,903 L669.6,920.6"/><path d="M683,903 L666.9,908.7"/><path d="M683,903 L660.7,906.1"/><path d="M683,903 L668.3,893.3"/><path d="M683,903 L675.9,892.8"/><path d="M683,903 L682.7,886.8"/><path d="M683,903 L688.5,889.9"/><path d="M683,903 L694.4,894.0"/></g>
<g fill="none" stroke="#f49a5c" stroke-width="1.45" stroke-linecap="round" stroke-linejoin="round">
<polyline points="434.4,624.0 440.2,645.7 444.6,660.2 447.5,676.1 453.2,686.2 456.9,697.8 461.9,705.0"/>
<polyline points="378.0,673.2 406.9,677.5 425.7,683.3 450.3,686.2"/>
<polyline points="450.3,680.4 479.3,684.8 485.1,696.3 492.3,713.7 508.2,718.1 522.7,722.4 537.2,728.2 568.0,732.5"/>
<polyline points="459.0,710.8 456.1,725.3 453.2,734.0 446.0,754.2 438.8,775.9 435.9,784.0"/>
<polyline points="453.2,739.8 479.3,741.2 498.1,754.2 515.5,765.8 529.9,784.0"/>
<polyline points="490.9,705.0 501.0,692.0 512.6,671.7"/>
<polyline points="541.5,624.0 538.6,650.0 544.4,671.7 553.1,693.5 554.5,725.3 557.4,744.1 568.0,768.7"/>
<polyline points="525.6,722.4 534.3,707.9 551.6,693.5"/>
<polyline points="482.2,739.8 492.3,725.3 493.8,716.6"/>
<polyline points="654.8,705.0 660.6,722.4 663.5,739.8 663.5,747.0"/>
<polyline points="568.0,760.0 582.5,765.8 596.9,784.0"/>
<polyline points="701.1,765.8 705.5,784.0"/>
<polyline points="435.9,784.0 444.6,804.3 443.1,821.6 440.2,831.7 433.0,840.4 424.3,847.7 415.6,865.0 406.9,882.4 395.4,894.0 383.8,904.1"/>
<polyline points="378.0,824.5 398.3,820.2 412.7,810.0 433.0,804.3"/>
<polyline points="378.0,891.1 386.7,898.3 399.7,901.2 415.6,902.7 428.6,899.8 450.3,899.8 469.2,891.1 490.9,896.9 508.2,902.7 522.7,911.3 537.2,911.3 568.0,911.3"/>
<polyline points="529.9,784.0 537.2,794.1 551.6,817.3 553.1,831.7 563.2,841.9 568.0,856.3"/>
<polyline points="378.0,882.4 386.7,888.2 395.4,899.8 399.7,907.0"/>
<polyline points="596.9,784.0 611.4,797.0 628.8,807.2 637.5,821.6 643.2,841.9 646.1,860.7 649.0,873.7 657.7,882.4 669.3,896.9"/>
<polyline points="631.7,873.7 640.3,865.0 649.0,862.1 660.6,865.0 669.3,867.9 688.1,866.5 706.9,869.4 718.5,878.1 725.7,894.0 724.3,914.2 714.1,925.8 698.2,933.0 678.0,935.9 654.8,934.5 633.1,922.9 628.8,908.4 630.2,885.3 631.7,873.7"/>
<polyline points="568.0,899.8 582.5,904.1 604.2,902.7 625.9,904.1 649.0,904.1 669.3,905.5"/>
<polyline points="568.0,859.2 589.7,873.7 611.4,885.3 628.8,891.1 643.2,894.0 657.7,896.9"/>
<polyline points="669.3,810.0 666.4,827.4 664.9,849.1 663.5,865.0"/>
<polyline points="712.7,885.3 727.2,882.4 741.6,876.6 758.0,873.7"/>
<polyline points="568.0,943.2 596.9,935.9 618.6,925.8 640.3,917.1 660.6,911.3"/>
<polyline points="695.3,911.3 712.7,922.9 727.2,928.7 741.6,934.5 758.0,937.4"/>
<polyline points="706.9,784.0 712.7,795.6 718.5,812.9 717.0,831.7 709.8,849.1"/>
<polyline points="700.0,762.8 705.8,768.6 704.3,784.0"/>
<polyline points="707.9,919.9 730.6,912.3 753.2,916.9 791.0,928.9 821.2,935.0 851.4,932.0"/>
</g>
<polygon points="843.0,625.0 855.0,636.0 870.0,650.0 880.0,662.0 888.0,667.0 893.0,680.0 897.0,697.0 897.4,716.6 893.0,730.0 886.0,745.0 882.0,755.0 879.0,770.0 877.6,786.0 869.5,796.0 860.0,806.0 851.4,814.0 840.8,829.3 827.2,844.4 815.0,849.0 806.0,852.0 801.6,856.5 802.3,874.6 797.0,886.7 785.0,895.7 760.8,898.8 738.0,904.8 724.6,909.3 712.0,903.0 700.0,900.0 712.0,906.0 730.6,912.3 753.0,915.4 776.0,913.8 791.0,916.9 798.5,924.4 820.0,923.0 851.4,922.9 859.0,926.0 860.4,944.0 1043.0,944.0 1060.0,935.0 1080.0,925.0 1102.0,921.0 1120.0,925.0 1135.0,930.0 1135.0,625.0" fill="#96dcf9"/>
<polygon points="806.0,852.0 790.0,846.0 780.0,842.0 795.0,841.0 812.0,846.0" fill="#96dcf9"/>
<polygon points="801.0,870.0 780.0,864.0 770.0,861.0 785.0,860.0 802.0,864.0" fill="#96dcf9"/>
<polygon points="840.0,810.0 826.0,806.0 822.0,800.0 832.0,802.0 845.0,806.0" fill="#96dcf9"/>
<polygon points="848.0,800.0 840.0,792.0 850.0,796.0" fill="#96dcf9"/>
<polygon points="692.8,625.0 749.7,625.0 748.5,629.8 746.2,638.5 744.5,644.3 741.0,647.2 735.2,651.3 726.5,652.5 719.5,651.3 714.8,647.2 711.4,641.4 705.6,639.1 698.6,635.6 691.6,638.5 688.7,640.8 694.0,634.5 695.1,629.8" fill="#96dcf9"/>
<polygon points="380,881 384,882 383,887 379,888" fill="#96dcf9"/>
<polygon points="411.9,849.4 414.7,852.2 409.0,857.9 402.5,860.7 401.5,865.4 393.0,872.0 388.3,879.5 384.6,881.4 382.7,877.6 386.5,872.0 395.0,865.4 400.6,860.7 409.0,851.3" fill="#96dcf9"/>
<ellipse cx="616" cy="684" rx="5" ry="2.2" fill="#96dcf9"/><ellipse cx="655.5" cy="751" rx="3.5" ry="2" fill="#96dcf9"/>
<polygon points="1135.0,880.0 1122.0,884.0 1109.0,884.6 1098.0,892.0 1095.0,900.0 1103.0,908.0 1110.5,913.0 1122.0,910.0 1135.0,905.0" fill="#e0ecda"/>
<polygon points="1122.0,860.0 1128.0,857.0 1135.0,856.0 1135.0,868.0 1127.0,870.0 1122.0,866.0" fill="#cde3c5"/>
<polyline points="1112,905 1122,898 1135,897" fill="none" stroke="#f39a5b" stroke-width="1.2"/>
<g fill="none" stroke="#f0c24a" stroke-width="1.1"><polyline points="700,930 760,928 800,935 850,932"/><polyline points="1070,940 1100,930 1135,935"/></g>
<polyline points="680,903 695,901 712,905 730,911" fill="none" stroke="#96dcf9" stroke-width="2"/>
<circle cx="560.3" cy="686.2" r="1.9" fill="#111"/>
<circle cx="664" cy="699.3" r="1.9" fill="#111"/>
<circle cx="737.8" cy="664.5" r="1.9" fill="#111"/>
<circle cx="470" cy="716.6" r="1.9" fill="#111"/>
<circle cx="706" cy="769.3" r="1.9" fill="#111"/>
<circle cx="603.2" cy="800" r="1.9" fill="#111"/>
<circle cx="643.7" cy="831.2" r="1.9" fill="#111"/>
<circle cx="703" cy="852.7" r="1.9" fill="#111"/>
<circle cx="545" cy="855.5" r="1.9" fill="#111"/>
<circle cx="484.2" cy="890.3" r="1.9" fill="#111"/>
<circle cx="579.2" cy="910.5" r="1.9" fill="#111"/>
<circle cx="389.6" cy="911.4" r="1.9" fill="#111"/>
<circle cx="701.3" cy="890.9" r="1.9" fill="#111"/>
<circle cx="842.8" cy="688.3" r="1.9" fill="#111"/>
<circle cx="826.9" cy="797.7" r="1.9" fill="#111"/>
<circle cx="796.5" cy="829.5" r="1.9" fill="#111"/>
<circle cx="774.8" cy="895.4" r="1.9" fill="#111"/>
<circle cx="1113.5" cy="902.4" r="1.9" fill="#111"/>
<circle cx="817" cy="943.5" r="1.9" fill="#111"/>
<text x="536.6" y="681" font-size="12" fill="#404040" font-weight="400" letter-spacing="0" text-anchor="start" stroke="#ffffff" stroke-width="2.2" stroke-opacity="0.75" paint-order="stroke">Leicester</text>
<text x="628.4" y="693" font-size="12" fill="#404040" font-weight="400" letter-spacing="0" text-anchor="start" stroke="#ffffff" stroke-width="2.2" stroke-opacity="0.75" paint-order="stroke">Peterborough</text>
<text x="713" y="659.8" font-size="12" fill="#404040" font-weight="400" letter-spacing="0" text-anchor="start" stroke="#ffffff" stroke-width="2.2" stroke-opacity="0.75" paint-order="stroke">King's Lynn</text>
<text x="437.3" y="711.4" font-size="12" fill="#404040" font-weight="400" letter-spacing="0" text-anchor="start" stroke="#ffffff" stroke-width="2.2" stroke-opacity="0.75" paint-order="stroke">Birmingham</text>
<text x="677" y="763.2" font-size="12" fill="#404040" font-weight="400" letter-spacing="0" text-anchor="start" stroke="#ffffff" stroke-width="2.2" stroke-opacity="0.75" paint-order="stroke">Cambridge</text>
<text x="568" y="795" font-size="12" fill="#404040" font-weight="400" letter-spacing="0" text-anchor="start" stroke="#ffffff" stroke-width="2.2" stroke-opacity="0.75" paint-order="stroke">Milton Keynes</text>
<text x="629.2" y="825.7" font-size="12" fill="#404040" font-weight="400" letter-spacing="0" text-anchor="start" stroke="#ffffff" stroke-width="2.2" stroke-opacity="0.75" paint-order="stroke">Luton</text>
<text x="684.8" y="846" font-size="12" fill="#404040" font-weight="400" letter-spacing="0" text-anchor="start" stroke="#ffffff" stroke-width="2.2" stroke-opacity="0.75" paint-order="stroke">Harlow</text>
<text x="528.5" y="849.4" font-size="12" fill="#404040" font-weight="400" letter-spacing="0" text-anchor="start" stroke="#ffffff" stroke-width="2.2" stroke-opacity="0.75" paint-order="stroke">Oxford</text>
<text x="462" y="885" font-size="12" fill="#404040" font-weight="400" letter-spacing="0" text-anchor="start" stroke="#ffffff" stroke-width="2.2" stroke-opacity="0.75" paint-order="stroke">Swindon</text>
<text x="558.3" y="905" font-size="12" fill="#404040" font-weight="400" letter-spacing="0" text-anchor="start" stroke="#ffffff" stroke-width="2.2" stroke-opacity="0.75" paint-order="stroke">Reading</text>
<text x="379" y="906" font-size="12" fill="#404040" font-weight="400" letter-spacing="0" text-anchor="start" stroke="#ffffff" stroke-width="2.2" stroke-opacity="0.75" paint-order="stroke">ristol</text>
<text x="696.4" y="885" font-size="12" fill="#404040" font-weight="400" letter-spacing="0" text-anchor="start" stroke="#ffffff" stroke-width="2.2" stroke-opacity="0.75" paint-order="stroke">lford</text>
<text x="727.3" y="939" font-size="12" fill="#404040" font-weight="400" letter-spacing="0" text-anchor="start" stroke="#ffffff" stroke-width="2.2" stroke-opacity="0.75" paint-order="stroke">Maidstone</text>
<text x="821" y="682.4" font-size="12" fill="#404040" font-weight="400" letter-spacing="0" text-anchor="start" stroke="#ffffff" stroke-width="2.2" stroke-opacity="0.75" paint-order="stroke">Norwich</text>
<text x="807.5" y="791.8" font-size="12" fill="#404040" font-weight="400" letter-spacing="0" text-anchor="start" stroke="#ffffff" stroke-width="2.2" stroke-opacity="0.75" paint-order="stroke">Ipswich</text>
<text x="769" y="823.4" font-size="12" fill="#404040" font-weight="400" letter-spacing="0" text-anchor="start" stroke="#ffffff" stroke-width="2.2" stroke-opacity="0.75" paint-order="stroke">Colchester</text>
<text x="748" y="876.3" font-size="12" fill="#404040" font-weight="400" letter-spacing="0" text-anchor="start" stroke="#ffffff" stroke-width="2.2" stroke-opacity="0.75" paint-order="stroke">Southend-</text>
<text x="757" y="889.5" font-size="12" fill="#404040" font-weight="400" letter-spacing="0" text-anchor="start" stroke="#ffffff" stroke-width="2.2" stroke-opacity="0.75" paint-order="stroke">on-Sea</text>
<text x="789.3" y="938.3" font-size="12" fill="#404040" font-weight="400" letter-spacing="0" text-anchor="start" stroke="#ffffff" stroke-width="2.2" stroke-opacity="0.75" paint-order="stroke">Canterbury</text>
<text x="1083" y="896.6" font-size="12" fill="#404040" font-weight="400" letter-spacing="0" text-anchor="start" stroke="#ffffff" stroke-width="2.2" stroke-opacity="0.75" paint-order="stroke">Middelbur</text>
<text x="619" y="917.5" font-size="14" fill="#222" font-weight="700" letter-spacing="0" text-anchor="start" stroke="#ffffff" stroke-width="2.2" stroke-opacity="0.75" paint-order="stroke">London</text>
<text x="576" y="739.5" font-size="12" fill="#6e6e6e" font-weight="700" letter-spacing="3.2" text-anchor="start" stroke="#ffffff" stroke-width="2.2" stroke-opacity="0.75" paint-order="stroke">ENGLAND</text>
<rect x="430" y="633" width="18.5" height="12" rx="2" fill="#3d63c9" stroke="#fff" stroke-width="0.8"/>
<text x="439.25" y="642.3" font-size="9" font-weight="700" fill="#fff" text-anchor="middle">M6</text>
<rect x="433" y="792.5" width="19" height="11.0" rx="2" fill="#3d63c9" stroke="#fff" stroke-width="0.8"/>
<text x="442.5" y="801.3" font-size="9" font-weight="700" fill="#fff" text-anchor="middle">M5</text>
<rect x="431.5" y="895" width="18.5" height="12" rx="2" fill="#3d63c9" stroke="#fff" stroke-width="0.8"/>
<text x="440.75" y="904.3" font-size="9" font-weight="700" fill="#fff" text-anchor="middle">M4</text>
<rect x="591.3" y="933.7" width="17.40000000000009" height="11.299999999999955" rx="2" fill="#3d63c9" stroke="#fff" stroke-width="0.8"/>
<text x="600.0" y="942.65" font-size="9" font-weight="700" fill="#fff" text-anchor="middle">M3</text>
<rect x="704.5" y="808.5" width="23.700000000000045" height="11.0" rx="2" fill="#3d63c9" stroke="#fff" stroke-width="0.8"/>
<text x="716.35" y="817.3" font-size="9" font-weight="700" fill="#fff" text-anchor="middle">M11</text>
<rect x="877.6" y="684" width="24.600000000000023" height="12" rx="2" fill="#1f9a4a" stroke="#fff" stroke-width="0.8"/>
<text x="889.9000000000001" y="693.3" font-size="9" font-weight="700" fill="#f5e34a" text-anchor="middle">A47</text>
<rect x="852" y="765" width="24" height="11.5" rx="2" fill="#1f9a4a" stroke="#fff" stroke-width="0.8"/>
<text x="864.0" y="774.05" font-size="9" font-weight="700" fill="#f5e34a" text-anchor="middle">A12</text>
<polyline points="838.1,666.7 842.5,671.7 839.6,689.0 825.8,697.0 823.7,702.1 808.5,709.3 801.2,718.0 778.8,725.2 775.2,731.0 756.4,741.9 746.3,751.3 742.0,757.0 734.7,757.0 729.0,762.8 726.0,773.0 717.4,783.0 713.2,796.0 717.0,814.2 718.5,824.8 714.0,838.4 709.5,859.5 708.7,868.6 700.4,882.1 695.0,888.2 700.4,894.2 700.4,898.8 685.3,901.0 679.0,904.8" fill="none" stroke="#f0566a" stroke-width="3.6" stroke-linecap="round" stroke-linejoin="round"/>
<ellipse cx="838.1" cy="666" rx="9" ry="3.5" fill="#000" opacity="0.12"/>
<path d="M838.1,667 C835.1,659 824.6,650 824.6,645 A13.5,13.5 0 1 1 851.6,645 C851.6,650 841.1,659 838.1,667 Z" fill="#2f86ea"/>
<circle cx="838.1" cy="645.5" r="6" fill="#fff"/>
<ellipse cx="679" cy="905" rx="9" ry="3.5" fill="#000" opacity="0.12"/>
<path d="M679,906 C676,898 665.5,889.6 665.5,884.6 A13.5,13.5 0 1 1 692.5,884.6 C692.5,889.6 682,898 679,906 Z" fill="#1d5b95"/>
<circle cx="679" cy="885.1" r="6" fill="#fff"/>
<g><circle cx="397.3" cy="926" r="8.6" fill="none" stroke="#7d7d7d" stroke-width="3.6" opacity="0.6"/><circle cx="397.3" cy="926" r="8.6" fill="none" stroke="#fff" stroke-width="2"/><path d="M393,931 q1,-8 8,-9 q-1,6 -8,9z" fill="#9a9a9a" opacity="0.8"/><text x="409" y="931.5" font-size="16" font-weight="700" fill="#fff" stroke="#7d7d7d" stroke-width="1.6" paint-order="stroke" letter-spacing="-0.3">mapbox</text></g>
<rect x="861" y="924" width="274" height="21" fill="#ffffff" opacity="0.5"/>
<text x="866" y="938.5" font-size="12" fill="#333">© Mapbox © OpenStreetMap <tspan font-weight="700" dx="4">Improve this map</tspan></text>
<rect x="1094" y="635" width="30" height="88" rx="4" fill="#fff" stroke="#6fb7d6" stroke-opacity="0.6" stroke-width="2"/>
<line x1="1095" y1="665.5" x2="1123" y2="665.5" stroke="#ddd" stroke-width="1"/><line x1="1095" y1="694.5" x2="1123" y2="694.5" stroke="#ddd" stroke-width="1"/>
<path d="M1104,650.5h11M1109.5,645v11M1104,679.6h11" stroke="#333" stroke-width="2.4" stroke-linecap="round"/>
<path d="M1109.4,701 l-3.6,6.5 h7.2z" fill="#333"/><path d="M1109.4,717.5 l-3.6,-6.5 h7.2z" fill="#ccc"/>
</svg></div><div class="abs" style="left:379px;top:625px;width:756px;height:320px;border-radius:4px;border:1px solid #c5c9cf"></div>

<div class="abs" style="left:354px;top:994px;width:806px;height:1px;background:#c8cad0"></div>
<div class="btn" style="left:366px;top:1003px;width:57px;height:36px;line-height:34px;border:1px solid #dfe2e6;color:#6b7280;background:#fff">Back</div>
<div class="btn" style="left:1095px;top:1003px;width:53px;height:36px;line-height:36px;background:#101828;color:#fff;border-radius:5px">Next</div>

<div class="card" style="left:1184px;top:176px;width:514px;height:348px"></div>
<div class="tx" style="left:1209px;top:202px;font-size:15px;line-height:22px;color:#111827">Your Item and selections</div>
<div class="tx" style="left:1209px;top:231px;font-size:14px;color:#5b6b85">A000269 &nbsp;•&nbsp; Canon • Ultimax-i</div>
<div class="srow" style="top:275px">Item price:<b>GBP 65,000.00</b></div>
<div class="srow" style="top:305px;padding-left:4px;padding-right:4px">Transport: SW1A 1AA <span style="display:inline-block;width:14px;height:14px;vertical-align:middle;position:relative;top:-1px"><svg width="14" height="14" viewBox="0 0 14 14" style="display:block"><path d="M0.6 7.5H12.8M10.6 5.4l2.2 2.1-2.2 2.1" stroke="currentColor" fill="none" stroke-width="1.05"/></svg></span> NR10 5NH<b style="right:4px">GBP 3,519.32</b></div>
<div class="srow" style="top:345px;padding-left:4px">Deinstallation:<b style="right:4px">GBP 6,000.00</b></div>
<div class="abs" style="left:1209px;top:375px;width:464px;height:1px;background:#c9ccd3"></div>
<div class="srow" style="top:384px">Subtotal (excl. VAT):<b>GBP 74,519.32</b></div>
<div class="srow" style="top:408px">VAT (20%):<b>GBP 14,903.86</b></div>
<div class="abs" style="left:1209px;top:432px;width:464px;height:8px;border-top:1px solid #c9ccd3;border-radius:6px 6px 0 0"></div>
<div class="srow" style="top:437px;padding-left:5px;color:#111827">Total payable (incl. VAT):<b style="right:5px">GBP 89,423.18</b></div>
<div class="abs" style="left:1209px;top:467px;width:464px;font-size:12px;line-height:16px;color:#5b6b85">Payment will include delivery if selected. Deinstallation and other services may be settled separately.</div>

</body></html>
